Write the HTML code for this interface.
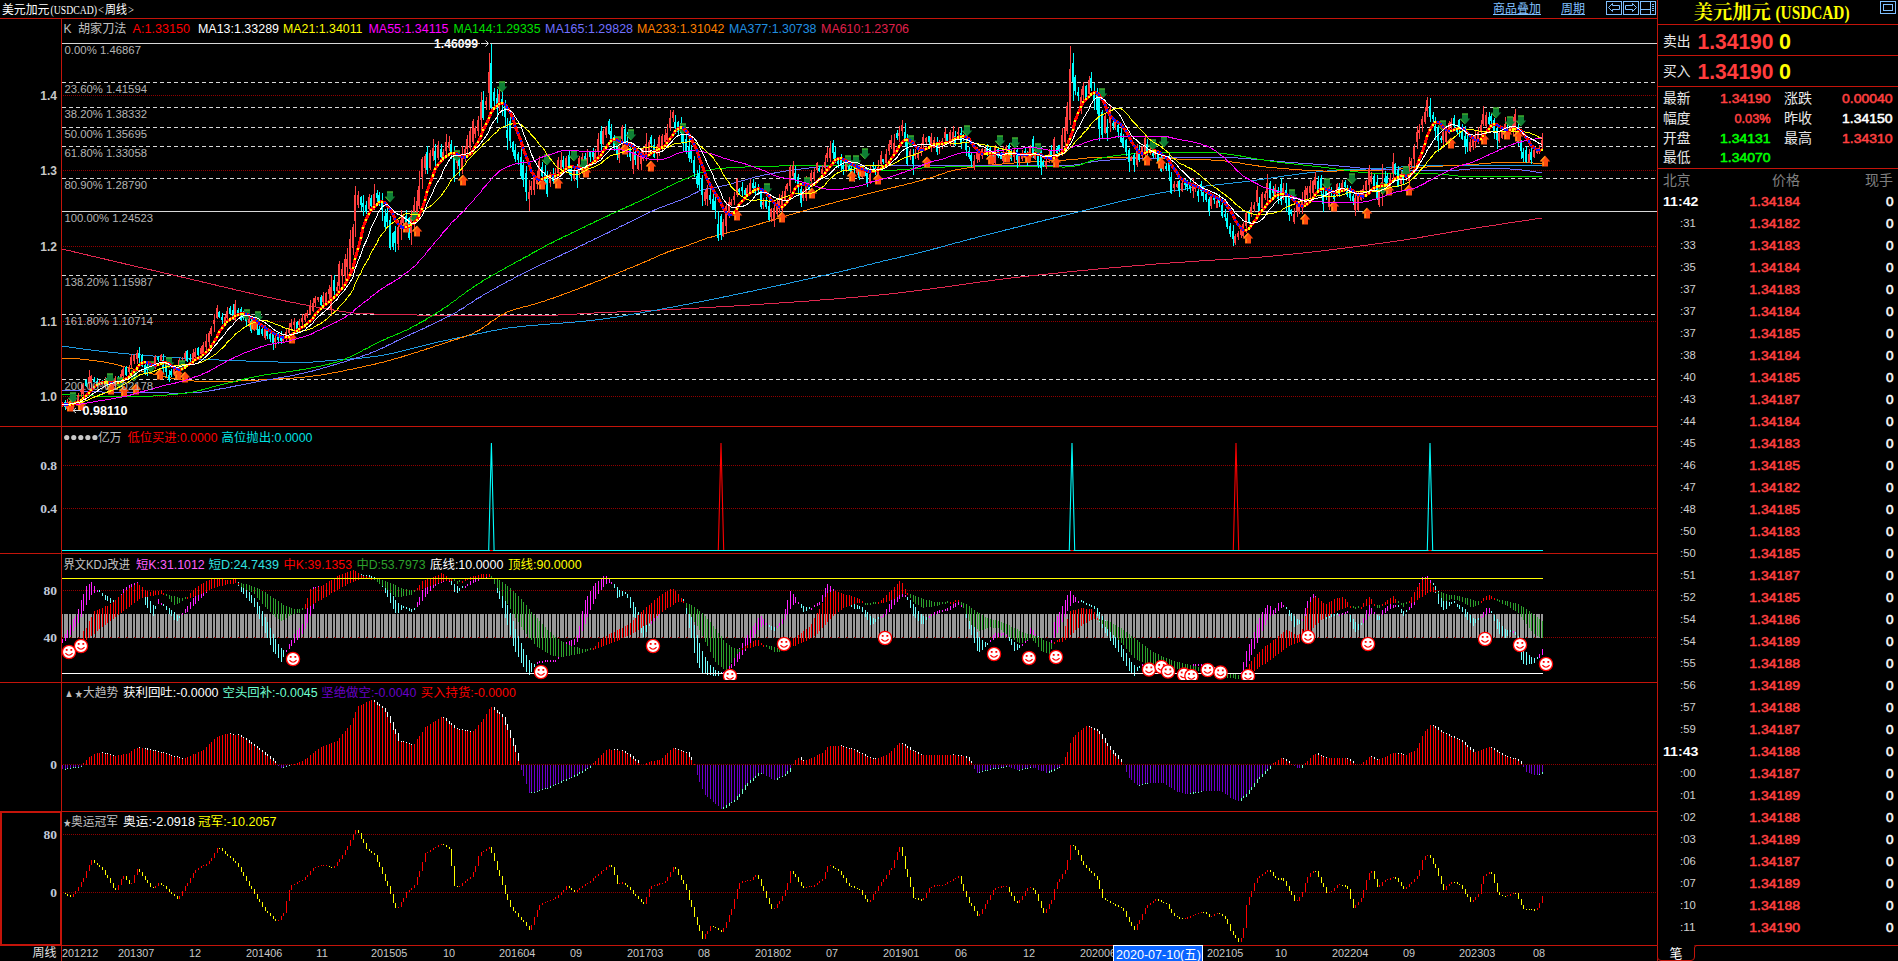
<!DOCTYPE html><html lang="zh-CN"><head><meta charset="utf-8"><title>美元加元(USDCAD) 周线</title>
<style>html,body{margin:0;padding:0;background:#000;overflow:hidden}svg{display:block}text{font-family:"Liberation Sans","Noto Sans CJK SC",sans-serif;font-size:12px;white-space:pre}.cj{font-family:"Liberation Sans","Noto Sans CJK SC",sans-serif;font-weight:400}.b{font-weight:bold}.m{font-weight:normal;stroke-width:0.55px;stroke-linejoin:round}.sf{font-family:"Liberation Serif","Noto Serif CJK SC",serif}</style></head><body>
<svg width="1898" height="961" viewBox="0 0 1898 961">
<rect width="1898" height="961" fill="#000"/>
<g shape-rendering="crispEdges">
<line x1="63" y1="95.5" x2="1657" y2="95.5" stroke="#900000" stroke-dasharray="1 1"/>
<line x1="63" y1="170.5" x2="1657" y2="170.5" stroke="#900000" stroke-dasharray="1 1"/>
<line x1="63" y1="246.5" x2="1657" y2="246.5" stroke="#900000" stroke-dasharray="1 1"/>
<line x1="63" y1="321.5" x2="1657" y2="321.5" stroke="#900000" stroke-dasharray="1 1"/>
<line x1="63" y1="396.5" x2="1657" y2="396.5" stroke="#900000" stroke-dasharray="1 1"/>
<line x1="63" y1="465.5" x2="1657" y2="465.5" stroke="#900000" stroke-dasharray="1 1"/>
<line x1="63" y1="508.5" x2="1657" y2="508.5" stroke="#900000" stroke-dasharray="1 1"/>
<line x1="63" y1="590.5" x2="1657" y2="590.5" stroke="#900000" stroke-dasharray="1 1"/>
<line x1="63" y1="637.5" x2="1657" y2="637.5" stroke="#900000" stroke-dasharray="1 1"/>
<line x1="63" y1="764.5" x2="1657" y2="764.5" stroke="#900000" stroke-dasharray="1 1"/>
<line x1="63" y1="834.5" x2="1657" y2="834.5" stroke="#900000" stroke-dasharray="1 1"/>
<line x1="63" y1="892.5" x2="1657" y2="892.5" stroke="#900000" stroke-dasharray="1 1"/>
<line x1="62" y1="43.5" x2="1657" y2="43.5" stroke="#d8d8d8" />
<line x1="62" y1="82.5" x2="1657" y2="82.5" stroke="#d8d8d8" stroke-dasharray="4 3"/>
<line x1="62" y1="107.5" x2="1657" y2="107.5" stroke="#d8d8d8" stroke-dasharray="4 3"/>
<line x1="62" y1="127.5" x2="1657" y2="127.5" stroke="#d8d8d8" stroke-dasharray="4 3"/>
<line x1="62" y1="146.5" x2="1657" y2="146.5" stroke="#d8d8d8" stroke-dasharray="4 3"/>
<line x1="62" y1="178.5" x2="1657" y2="178.5" stroke="#d8d8d8" stroke-dasharray="4 3"/>
<line x1="62" y1="211.5" x2="1657" y2="211.5" stroke="#d8d8d8" />
<line x1="62" y1="275.5" x2="1657" y2="275.5" stroke="#d8d8d8" stroke-dasharray="4 3"/>
<line x1="62" y1="314.5" x2="1657" y2="314.5" stroke="#d8d8d8" stroke-dasharray="4 3"/>
<line x1="62" y1="379.5" x2="1657" y2="379.5" stroke="#d8d8d8" stroke-dasharray="4 3"/>
</g>
<g stroke-linejoin="round" shape-rendering="crispEdges">
<polyline points="62,249.4 65,249.8 67,250.3 70,250.9 73,251.5 75,252.2 78,252.8 81,253.4 83,254.1 86,254.7 89,255.3 91,256 94,256.6 97,257.2 99,257.9 102,258.5 105,259.1 107,259.7 110,260.3 113,261 115,261.6 118,262.2 121,262.8 123,263.5 126,264.1 129,264.7 131,265.4 134,266 137,266.6 139,267.2 142,267.8 145,268.4 147,269.1 150,269.7 153,270.3 155,270.9 158,271.5 161,272.2 163,272.8 166,273.4 169,274 171,274.6 174,275.3 177,275.9 179,276.5 182,277.1 185,277.7 187,278.4 190,279 193,279.6 195,280.3 198,280.9 201,281.5 203,282.2 206,282.8 209,283.4 211,284.1 214,284.7 217,285.3 219,286 222,286.6 225,287.2 227,287.9 230,288.5 233,289.1 235,289.7 238,290.4 241,291 243,291.6 246,292.2 249,292.8 251,293.5 254,294 257,294.6 259,295.3 262,295.8 265,296.4 267,297.1 270,297.6 273,298.2 275,298.8 278,299.4 281,299.9 283,300.5 286,301.1 289,301.6 291,302.2 294,302.7 297,303.2 299,303.8 302,304.3 305,304.8 307,305.3 310,305.8 313,306.3 315,306.8 318,307.3 321,307.8 323,308.3 326,308.7 329,309.2 331,309.6 334,310.1 337,310.5 339,311 342,311.4 345,311.8 347,312.2 350,312.6 353,312.8 355,313.1 358,313.2 361,313.4 363,313.5 366,313.7 369,313.8 371,313.9 374,314 377,314.1 379,314.2 382,314.3 385,314.4 387,314.4 390,314.5 393,314.6 395,314.6 398,314.7 401,314.7 403,314.8 406,314.8 409,314.9 411,314.9 414,314.9 417,315 419,315 422,315 425,315.1 427,315.1 430,315.1 433,315.2 435,315.2 438,315.2 441,315.2 443,315.3 446,315.3 449,315.3 451,315.3 454,315.4 457,315.4 459,315.4 462,315.4 465,315.4 467,315.5 470,315.5 473,315.5 475,315.5 478,315.5 481,315.6 483,315.6 486,315.6 489,315.6 491,315.6 494,315.7 497,315.7 499,315.7 502,315.7 505,315.7 507,315.7 510,315.7 513,315.8 515,315.8 518,315.8 521,315.8 523,315.8 526,315.8 529,315.8 531,315.8 534,315.8 537,315.7 539,315.7 542,315.6 545,315.5 547,315.4 550,315.4 553,315.2 555,315.1 558,315 561,314.9 563,314.7 566,314.6 569,314.4 571,314.3 574,314.1 577,314 579,313.8 582,313.6 585,313.5 587,313.3 590,313.2 593,313.1 595,312.9 598,312.8 601,312.7 603,312.6 606,312.4 609,312.3 611,312.2 614,312.1 617,312 619,311.9 622,311.8 625,311.7 627,311.6 630,311.4 633,311.3 635,311.2 638,311.1 641,311 643,310.8 646,310.7 649,310.6 651,310.5 654,310.3 657,310.2 659,310.1 662,309.9 665,309.8 667,309.7 670,309.5 673,309.4 675,309.3 678,309.1 681,309 683,308.9 686,308.7 689,308.6 691,308.4 694,308.3 697,308.1 699,308 702,307.9 705,307.7 707,307.5 710,307.4 713,307.3 715,307.1 718,306.9 721,306.8 723,306.6 726,306.5 729,306.3 731,306.1 734,306 737,305.8 739,305.6 742,305.5 745,305.3 747,305.1 750,305 753,304.8 755,304.6 758,304.5 761,304.3 763,304.1 766,303.9 769,303.8 771,303.6 774,303.4 777,303.2 779,303 782,302.9 785,302.7 787,302.5 790,302.3 793,302.1 795,301.9 798,301.7 801,301.5 803,301.3 806,301.2 809,301 811,300.7 814,300.6 817,300.4 819,300.1 822,299.9 825,299.7 827,299.5 830,299.3 833,299.1 835,298.9 838,298.7 841,298.4 843,298.2 846,298 849,297.8 851,297.5 854,297.3 857,297.1 859,296.8 862,296.6 865,296.4 867,296.1 870,295.9 873,295.6 875,295.4 878,295.1 881,294.9 883,294.6 886,294.3 889,294 891,293.7 894,293.4 897,293.1 899,292.8 902,292.5 905,292.2 907,291.9 910,291.5 913,291.2 915,290.9 918,290.5 921,290.2 923,289.8 926,289.5 929,289.2 931,288.8 934,288.4 937,288.1 939,287.7 942,287.3 945,287 947,286.6 950,286.2 953,285.9 955,285.5 958,285.1 961,284.8 963,284.4 966,284 969,283.7 971,283.3 974,282.9 977,282.6 979,282.2 982,281.8 985,281.5 987,281.1 990,280.8 993,280.4 995,280 998,279.7 1001,279.4 1003,279 1006,278.7 1009,278.4 1011,278 1014,277.7 1017,277.4 1019,277.1 1022,276.8 1025,276.5 1027,276.2 1030,275.9 1033,275.6 1035,275.3 1038,275 1041,274.7 1043,274.4 1046,274.2 1049,273.9 1051,273.6 1054,273.3 1057,273.1 1059,272.8 1062,272.5 1065,272.3 1067,272 1070,271.7 1073,271.5 1075,271.2 1078,270.9 1081,270.7 1083,270.4 1086,270.2 1089,269.9 1091,269.6 1094,269.4 1097,269.2 1099,268.9 1102,268.7 1105,268.4 1107,268.2 1110,267.9 1113,267.7 1115,267.4 1118,267.2 1121,267 1123,266.7 1126,266.5 1129,266.3 1131,266.1 1134,265.8 1137,265.6 1139,265.4 1142,265.2 1145,265 1147,264.8 1150,264.5 1153,264.3 1155,264.1 1158,263.9 1161,263.7 1163,263.5 1166,263.3 1169,263.1 1171,262.9 1174,262.8 1177,262.6 1179,262.4 1182,262.2 1185,262 1187,261.8 1190,261.6 1193,261.5 1195,261.3 1198,261.1 1201,260.9 1203,260.8 1206,260.6 1209,260.4 1211,260.2 1214,260.1 1217,259.9 1219,259.7 1222,259.6 1225,259.4 1227,259.3 1230,259.1 1233,259 1235,258.8 1238,258.7 1241,258.5 1243,258.3 1246,258.2 1249,258 1251,257.8 1254,257.6 1257,257.4 1259,257.2 1262,257 1265,256.7 1267,256.5 1270,256.3 1273,256 1275,255.8 1278,255.5 1281,255.3 1283,255 1286,254.7 1289,254.5 1291,254.2 1294,253.9 1297,253.7 1299,253.4 1302,253.1 1305,252.8 1307,252.5 1310,252.2 1313,251.9 1315,251.6 1318,251.3 1321,251 1323,250.6 1326,250.3 1329,250 1331,249.7 1334,249.3 1337,249 1339,248.7 1342,248.3 1345,248 1347,247.7 1350,247.3 1353,247 1355,246.6 1358,246.3 1361,245.9 1363,245.6 1366,245.2 1369,244.9 1371,244.5 1374,244.2 1377,243.8 1379,243.4 1382,243.1 1385,242.7 1387,242.4 1390,242 1393,241.6 1395,241.2 1398,240.9 1401,240.5 1403,240.1 1406,239.7 1409,239.2 1411,238.8 1414,238.4 1417,238 1419,237.5 1422,237.1 1425,236.6 1427,236.2 1430,235.7 1433,235.3 1435,234.8 1438,234.3 1441,233.9 1443,233.4 1446,233 1449,232.5 1451,232.1 1454,231.6 1457,231.2 1459,230.7 1462,230.3 1465,229.9 1467,229.4 1470,229 1473,228.6 1475,228.2 1478,227.7 1481,227.3 1483,226.9 1486,226.5 1489,226.1 1491,225.7 1494,225.3 1497,224.9 1499,224.4 1502,224 1505,223.6 1507,223.2 1510,222.8 1513,222.4 1515,222 1518,221.6 1521,221.2 1523,220.8 1526,220.4 1529,220 1531,219.6 1534,219.2 1537,218.8 1539,218.5 1542,218.2" fill="none" stroke="#e02850" stroke-width="1" />
<polyline points="62,346.2 65,346.5 67,346.8 70,347.1 73,347.5 75,347.9 78,348.3 81,348.6 83,349 86,349.3 89,349.7 91,350 94,350.4 97,350.7 99,351 102,351.3 105,351.6 107,351.9 110,352.2 113,352.5 115,352.7 118,353 121,353.2 123,353.5 126,353.7 129,354 131,354.2 134,354.5 137,354.7 139,354.9 142,355.1 145,355.4 147,355.6 150,355.8 153,356 155,356.2 158,356.4 161,356.6 163,356.8 166,357 169,357.2 171,357.4 174,357.6 177,357.7 179,357.9 182,358.1 185,358.2 187,358.4 190,358.6 193,358.7 195,358.9 198,359 201,359.1 203,359.3 206,359.4 209,359.5 211,359.7 214,359.8 217,359.9 219,360 222,360.1 225,360.2 227,360.3 230,360.4 233,360.5 235,360.6 238,360.7 241,360.8 243,360.9 246,361 249,361.1 251,361.2 254,361.3 257,361.4 259,361.4 262,361.5 265,361.6 267,361.7 270,361.8 273,361.8 275,361.9 278,362 281,362.1 283,362.1 286,362.2 289,362.3 291,362.4 294,362.4 297,362.5 299,362.5 302,362.4 305,362.4 307,362.3 310,362.2 313,362 315,361.8 318,361.6 321,361.4 323,361.2 326,360.9 329,360.7 331,360.5 334,360.3 337,360 339,359.8 342,359.6 345,359.4 347,359.2 350,359 353,358.8 355,358.6 358,358.3 361,358.1 363,357.8 366,357.5 369,357.3 371,356.9 374,356.6 377,356.2 379,355.8 382,355.3 385,354.8 387,354.3 390,353.8 393,353.2 395,352.6 398,352 401,351.4 403,350.7 406,350.1 409,349.4 411,348.7 414,348.1 417,347.4 419,346.7 422,346 425,345.4 427,344.7 430,344 433,343.4 435,342.7 438,342.1 441,341.5 443,340.9 446,340.4 449,339.8 451,339.2 454,338.7 457,338.1 459,337.6 462,337 465,336.5 467,335.9 470,335.4 473,334.9 475,334.3 478,333.8 481,333.2 483,332.6 486,332.1 489,331.6 491,331 494,330.5 497,330 499,329.5 502,329 505,328.6 507,328.2 510,327.8 513,327.5 515,327.2 518,326.9 521,326.6 523,326.3 526,326 529,325.8 531,325.5 534,325.3 537,325.1 539,324.8 542,324.6 545,324.4 547,324.2 550,324 553,323.8 555,323.6 558,323.4 561,323.2 563,323 566,322.7 569,322.5 571,322.3 574,322.1 577,321.9 579,321.6 582,321.4 585,321.2 587,320.9 590,320.6 593,320.3 595,320 598,319.7 601,319.4 603,319 606,318.7 609,318.3 611,317.9 614,317.5 617,317.1 619,316.6 622,316.2 625,315.7 627,315.2 630,314.8 633,314.3 635,313.8 638,313.4 641,312.9 643,312.4 646,311.9 649,311.5 651,311 654,310.5 657,310 659,309.5 662,309 665,308.5 667,308 670,307.5 673,307 675,306.5 678,306 681,305.5 683,305 686,304.5 689,304 691,303.4 694,302.9 697,302.4 699,301.9 702,301.4 705,300.9 707,300.3 710,299.8 713,299.3 715,298.7 718,298.2 721,297.6 723,297.1 726,296.6 729,296 731,295.4 734,294.9 737,294.4 739,293.8 742,293.2 745,292.7 747,292.1 750,291.6 753,291 755,290.4 758,289.9 761,289.3 763,288.7 766,288.2 769,287.6 771,287 774,286.5 777,285.9 779,285.3 782,284.7 785,284.2 787,283.6 790,283 793,282.4 795,281.8 798,281.2 801,280.7 803,280 806,279.5 809,278.9 811,278.3 814,277.7 817,277.1 819,276.5 822,275.9 825,275.3 827,274.7 830,274.1 833,273.5 835,272.8 838,272.2 841,271.6 843,270.9 846,270.3 849,269.7 851,269 854,268.4 857,267.7 859,267 862,266.4 865,265.7 867,265 870,264.4 873,263.8 875,263.1 878,262.4 881,261.8 883,261.1 886,260.5 889,259.9 891,259.2 894,258.6 897,258 899,257.3 902,256.7 905,256.1 907,255.5 910,254.9 913,254.3 915,253.6 918,253 921,252.4 923,251.7 926,251 929,250.3 931,249.6 934,248.9 937,248.2 939,247.4 942,246.7 945,245.9 947,245.2 950,244.5 953,243.8 955,243 958,242.4 961,241.7 963,240.9 966,240.2 969,239.6 971,238.8 974,238.2 977,237.5 979,236.7 982,236.1 985,235.4 987,234.7 990,234 993,233.4 995,232.6 998,232 1001,231.3 1003,230.6 1006,229.9 1009,229.3 1011,228.6 1014,227.9 1017,227.3 1019,226.6 1022,225.9 1025,225.3 1027,224.6 1030,223.9 1033,223.3 1035,222.6 1038,221.9 1041,221.3 1043,220.6 1046,219.9 1049,219.3 1051,218.6 1054,217.9 1057,217.3 1059,216.6 1062,215.9 1065,215.3 1067,214.6 1070,214 1073,213.3 1075,212.6 1078,212 1081,211.3 1083,210.6 1086,210 1089,209.3 1091,208.6 1094,208 1097,207.3 1099,206.6 1102,206 1105,205.3 1107,204.6 1110,204 1113,203.4 1115,202.7 1118,202.1 1121,201.5 1123,200.8 1126,200.2 1129,199.6 1131,199 1134,198.4 1137,197.8 1139,197.2 1142,196.6 1145,196.1 1147,195.5 1150,194.9 1153,194.4 1155,193.9 1158,193.4 1161,192.9 1163,192.4 1166,192 1169,191.5 1171,191.1 1174,190.6 1177,190.2 1179,189.8 1182,189.4 1185,189 1187,188.6 1190,188.2 1193,187.8 1195,187.4 1198,187.1 1201,186.7 1203,186.4 1206,186 1209,185.7 1211,185.4 1214,185.1 1217,184.8 1219,184.5 1222,184.2 1225,183.9 1227,183.6 1230,183.3 1233,183 1235,182.7 1238,182.4 1241,182.1 1243,181.8 1246,181.5 1249,181.2 1251,180.8 1254,180.4 1257,180.1 1259,179.7 1262,179.3 1265,178.9 1267,178.5 1270,178.1 1273,177.7 1275,177.3 1278,177 1281,176.6 1283,176.2 1286,175.8 1289,175.5 1291,175.1 1294,174.7 1297,174.4 1299,174 1302,173.7 1305,173.3 1307,173 1310,172.7 1313,172.4 1315,172.1 1318,171.8 1321,171.6 1323,171.3 1326,171.1 1329,170.9 1331,170.7 1334,170.5 1337,170.4 1339,170.2 1342,170.1 1345,169.9 1347,169.8 1350,169.7 1353,169.6 1355,169.4 1358,169.3 1361,169.2 1363,169.1 1366,169 1369,168.9 1371,168.7 1374,168.6 1377,168.5 1379,168.4 1382,168.2 1385,168.1 1387,167.9 1390,167.8 1393,167.6 1395,167.4 1398,167.2 1401,167 1403,166.8 1406,166.6 1409,166.4 1411,166.2 1414,166.1 1417,166 1419,166 1422,165.9 1425,165.9 1427,165.8 1430,165.8 1433,165.8 1435,165.7 1438,165.7 1441,165.6 1443,165.6 1446,165.6 1449,165.5 1451,165.5 1454,165.5 1457,165.4 1459,165.4 1462,165.4 1465,165.4 1467,165.3 1470,165.3 1473,165.3 1475,165.3 1478,165.2 1481,165.2 1483,165.2 1486,165.2 1489,165.2 1491,165.2 1494,165.1 1497,165.1 1499,165.1 1502,165.1 1505,165.1 1507,165.1 1510,165.1 1513,165 1515,165 1518,165 1521,165 1523,165 1526,165 1529,165 1531,165 1534,165 1537,165 1539,165 1542,165" fill="none" stroke="#1e9ae0" stroke-width="1" />
<polyline points="62,358 65,358.1 67,358.2 70,358.3 73,358.5 75,358.7 78,358.9 81,359.1 83,359.4 86,359.7 89,360 91,360.3 94,360.7 97,361 99,361.4 102,361.8 105,362.2 107,362.7 110,363.2 113,363.8 115,364.4 118,365.1 121,365.8 123,366.5 126,367.2 129,367.9 131,368.6 134,369.2 137,369.9 139,370.6 142,371.2 145,371.9 147,372.6 150,373.3 153,373.9 155,374.6 158,375.3 161,375.9 163,376.5 166,377.1 169,377.6 171,378.1 174,378.6 177,378.9 179,379.3 182,379.6 185,379.9 187,380.2 190,380.5 193,380.8 195,381.1 198,381.4 201,381.7 203,381.8 206,381.9 209,382 211,381.9 214,381.9 217,381.8 219,381.8 222,381.7 225,381.6 227,381.5 230,381.4 233,381.3 235,381.1 238,381 241,380.9 243,380.8 246,380.6 249,380.5 251,380.4 254,380.3 257,380.2 259,380 262,379.9 265,379.8 267,379.6 270,379.5 273,379.4 275,379.2 278,379.1 281,378.9 283,378.7 286,378.6 289,378.4 291,378.2 294,378 297,377.8 299,377.5 302,377.3 305,377 307,376.7 310,376.4 313,376.1 315,375.7 318,375.4 321,375 323,374.5 326,374.1 329,373.7 331,373.2 334,372.7 337,372.2 339,371.7 342,371.2 345,370.7 347,370.1 350,369.5 353,369 355,368.4 358,367.8 361,367.3 363,366.7 366,366.1 369,365.5 371,364.9 374,364.3 377,363.7 379,363 382,362.4 385,361.7 387,361 390,360.3 393,359.5 395,358.7 398,358 401,357.2 403,356.4 406,355.6 409,354.8 411,353.9 414,353.1 417,352.3 419,351.4 422,350.5 425,349.7 427,348.8 430,347.9 433,347.1 435,346.1 438,345.3 441,344.4 443,343.5 446,342.6 449,341.8 451,340.8 454,340 457,339.2 459,338.3 462,337.4 465,336.6 467,335.6 470,334.7 473,333.6 475,332.2 478,330.8 481,329.2 483,327.4 486,325.6 489,323.7 491,321.7 494,319.9 497,318.1 499,316.3 502,314.8 505,313.4 507,312.1 510,311 513,310.1 515,309.2 518,308.5 521,307.8 523,307.1 526,306.4 529,305.8 531,305 534,304.3 537,303.5 539,302.6 542,301.7 545,300.9 547,299.9 550,299.1 553,298.2 555,297.2 558,296.3 561,295.3 563,294.3 566,293.4 569,292.4 571,291.4 574,290.4 577,289.4 579,288.3 582,287.3 585,286.3 587,285.2 590,284.2 593,283.2 595,282.1 598,281 601,280 603,278.9 606,277.8 609,276.8 611,275.6 614,274.6 617,273.5 619,272.4 622,271.3 625,270.3 627,269.1 630,268.1 633,267 635,265.9 638,264.8 641,263.7 643,262.6 646,261.4 649,260.3 651,259.1 654,257.9 657,256.7 659,255.5 662,254.4 665,253.3 667,252.2 670,251.2 673,250.2 675,249.3 678,248.5 681,247.7 683,246.9 686,246.1 689,245.2 691,244.1 694,243.1 697,242 699,240.9 702,239.9 705,239 707,238.1 710,237.4 713,236.6 715,235.9 718,235.2 721,234.5 723,233.8 726,233.2 729,232.5 731,231.8 734,231.2 737,230.5 739,229.8 742,229.1 745,228.3 747,227.5 750,226.8 753,226 755,225.2 758,224.4 761,223.6 763,222.8 766,222 769,221.2 771,220.4 774,219.6 777,218.8 779,217.9 782,217.2 785,216.4 787,215.5 790,214.8 793,214 795,213.2 798,212.4 801,211.7 803,210.9 806,210.2 809,209.4 811,208.7 814,208 817,207.3 819,206.5 822,205.8 825,205.1 827,204.3 830,203.7 833,203 835,202.2 838,201.5 841,200.9 843,200.1 846,199.5 849,198.8 851,198 854,197.4 857,196.7 859,196 862,195.3 865,194.6 867,193.9 870,193.2 873,192.6 875,191.9 878,191.2 881,190.6 883,189.9 886,189.3 889,188.6 891,187.9 894,187.3 897,186.7 899,186 902,185.4 905,184.7 907,184 910,183.4 913,182.7 915,182 918,181.3 921,180.6 923,179.8 926,179.1 929,178.4 931,177.5 934,176.7 937,175.8 939,174.8 942,173.9 945,173 947,172.1 950,171.3 953,170.6 955,170 958,169.5 961,169 963,168.6 966,168.2 969,167.8 971,167.4 974,167 977,166.7 979,166.3 982,166 985,165.7 987,165.4 990,165.2 993,164.9 995,164.6 998,164.4 1001,164.1 1003,163.9 1006,163.7 1009,163.5 1011,163.2 1014,163 1017,162.8 1019,162.6 1022,162.5 1025,162.3 1027,162.1 1030,162 1033,161.8 1035,161.7 1038,161.5 1041,161.4 1043,161.3 1046,161.1 1049,161 1051,160.8 1054,160.7 1057,160.5 1059,160.4 1062,160.2 1065,160.1 1067,159.9 1070,159.7 1073,159.5 1075,159.3 1078,159 1081,158.8 1083,158.4 1086,158.1 1089,157.8 1091,157.5 1094,157.2 1097,157.1 1099,157 1102,157 1105,157.1 1107,157.1 1110,157.1 1113,157.2 1115,157.3 1118,157.3 1121,157.4 1123,157.5 1126,157.6 1129,157.6 1131,157.7 1134,157.8 1137,157.9 1139,158 1142,158.1 1145,158.2 1147,158.3 1150,158.4 1153,158.4 1155,158.5 1158,158.6 1161,158.6 1163,158.7 1166,158.8 1169,158.8 1171,158.9 1174,158.9 1177,159 1179,159 1182,159.1 1185,159.2 1187,159.2 1190,159.3 1193,159.4 1195,159.4 1198,159.5 1201,159.6 1203,159.7 1206,159.8 1209,159.9 1211,160 1214,160.1 1217,160.3 1219,160.5 1222,160.8 1225,161 1227,161.4 1230,161.7 1233,162.1 1235,162.5 1238,162.8 1241,163.2 1243,163.7 1246,164.1 1249,164.5 1251,164.9 1254,165.3 1257,165.7 1259,166.1 1262,166.5 1265,166.8 1267,167.1 1270,167.4 1273,167.7 1275,167.9 1278,168.1 1281,168.3 1283,168.6 1286,168.8 1289,169 1291,169.2 1294,169.4 1297,169.6 1299,169.8 1302,170 1305,170.2 1307,170.4 1310,170.5 1313,170.6 1315,170.7 1318,170.8 1321,170.9 1323,171 1326,171 1329,171 1331,171 1334,171 1337,171 1339,170.9 1342,170.9 1345,170.9 1347,170.9 1350,170.8 1353,170.8 1355,170.8 1358,170.7 1361,170.7 1363,170.6 1366,170.6 1369,170.5 1371,170.5 1374,170.4 1377,170.3 1379,170.2 1382,170.1 1385,169.9 1387,169.8 1390,169.6 1393,169.5 1395,169.3 1398,169.1 1401,168.9 1403,168.7 1406,168.5 1409,168.3 1411,168.1 1414,167.9 1417,167.8 1419,167.5 1422,167.4 1425,167.2 1427,167 1430,166.8 1433,166.7 1435,166.5 1438,166.4 1441,166.2 1443,166 1446,165.9 1449,165.7 1451,165.6 1454,165.4 1457,165.3 1459,165.1 1462,165 1465,164.8 1467,164.7 1470,164.5 1473,164.4 1475,164.2 1478,164.1 1481,163.9 1483,163.7 1486,163.5 1489,163.3 1491,163 1494,162.8 1497,162.6 1499,162.4 1502,162.3 1505,162.2 1507,162.1 1510,162 1513,162 1515,162.1 1518,162.1 1521,162.2 1523,162.4 1526,162.5 1529,162.7 1531,162.9 1534,163.1 1537,163.4 1539,163.6 1542,163.8" fill="none" stroke="#ff8000" stroke-width="1" />
<polyline points="62,390.1 65,390.2 67,390.3 70,390.5 73,390.6 75,390.8 78,390.9 81,391.1 83,391.2 86,391.4 89,391.5 91,391.6 94,391.7 97,391.8 99,391.9 102,392 105,392 107,392.1 110,392.1 113,392.2 115,392.2 118,392.3 121,392.3 123,392.4 126,392.4 129,392.5 131,392.5 134,392.6 137,392.6 139,392.6 142,392.7 145,392.7 147,392.8 150,392.8 153,392.8 155,392.8 158,392.9 161,392.9 163,392.9 166,392.9 169,393 171,393 174,393 177,393 179,393 182,393 185,393 187,392.9 190,392.8 193,392.7 195,392.5 198,392.3 201,392.1 203,391.8 206,391.5 209,391.1 211,390.6 214,390.1 217,389.6 219,389.1 222,388.6 225,388.2 227,387.6 230,387.1 233,386.6 235,386.1 238,385.6 241,385.1 243,384.5 246,384 249,383.5 251,382.9 254,382.4 257,381.9 259,381.4 262,380.9 265,380.4 267,379.9 270,379.4 273,379 275,378.5 278,378.1 281,377.6 283,377.1 286,376.7 289,376.2 291,375.7 294,375.2 297,374.7 299,374.1 302,373.5 305,372.9 307,372.3 310,371.6 313,370.9 315,370.2 318,369.5 321,368.8 323,368 326,367.2 329,366.5 331,365.6 334,364.9 337,364.1 339,363.3 342,362.5 345,361.7 347,360.9 350,360.1 353,359.3 355,358.4 358,357.6 361,356.7 363,355.7 366,354.8 369,353.9 371,352.8 374,351.7 377,350.6 379,349.4 382,348.2 385,347 387,345.6 390,344.4 393,343.1 395,341.7 398,340.4 401,339.2 403,337.8 406,336.6 409,335.3 411,334 414,332.8 417,331.6 419,330.4 422,329.2 425,328 427,326.7 430,325.4 433,324.2 435,322.9 438,321.6 441,320.3 443,318.9 446,317.6 449,316.3 451,314.8 454,313.4 457,311.9 459,310.3 462,308.8 465,307.1 467,305.2 470,303.5 473,301.7 475,299.9 478,298.2 481,296.7 483,295 486,293.4 489,291.9 491,290.3 494,288.9 497,287.4 499,285.9 502,284.5 505,283.1 507,281.6 510,280.3 513,278.9 515,277.5 518,276.1 521,274.8 523,273.4 526,272 529,270.7 531,269.3 534,268 537,266.7 539,265.4 542,264.1 545,262.9 547,261.5 550,260.3 553,259.1 555,257.8 558,256.6 561,255.4 563,254.1 566,252.8 569,251.6 571,250.3 574,249 577,247.8 579,246.4 582,245.2 585,243.9 587,242.6 590,241.3 593,240.1 595,238.7 598,237.5 601,236.2 603,234.9 606,233.6 609,232.4 611,231 614,229.7 617,228.5 619,227.1 622,225.8 625,224.6 627,223.2 630,221.9 633,220.6 635,219.3 638,218 641,216.7 643,215.3 646,214 649,212.7 651,211.4 654,210.2 657,209.1 659,207.9 662,206.9 665,206 667,204.9 670,204 673,203 675,202 678,201 681,200 683,198.9 686,197.7 689,196.5 691,195.1 694,193.7 697,192.4 699,191.1 702,190.1 705,189.4 707,188.7 710,188.2 713,187.7 715,187.3 718,186.8 721,186.3 723,185.8 726,185.2 729,184.6 731,183.9 734,183.1 737,182.4 739,181.6 742,180.8 745,180.1 747,179.3 750,178.5 753,177.8 755,177.1 758,176.5 761,175.9 763,175.2 766,174.7 769,174.2 771,173.6 774,173.1 777,172.6 779,172.1 782,171.7 785,171.2 787,170.8 790,170.4 793,170.1 795,169.7 798,169.4 801,169 803,168.7 806,168.4 809,168.1 811,167.7 814,167.4 817,167.2 819,166.8 822,166.6 825,166.3 827,166.1 830,165.9 833,165.7 835,165.5 838,165.3 841,165.2 843,165.1 846,165.1 849,165 851,165 854,165 857,165 859,165 862,165 865,165 867,165 870,165 873,165 875,165 878,165 881,165 883,165 886,165 889,165 891,165 894,165 897,165 899,165 902,165 905,165 907,165 910,165 913,165 915,165 918,165 921,165 923,165 926,165 929,165 931,165 934,165 937,165 939,165 942,165 945,165 947,165 950,165 953,165 955,165 958,165 961,165 963,165 966,165 969,165.1 971,165.1 974,165.1 977,165.1 979,165.1 982,165.1 985,165.1 987,165.1 990,165.1 993,165.1 995,165.1 998,165.1 1001,165.2 1003,165.2 1006,165.2 1009,165.2 1011,165.2 1014,165.2 1017,165.2 1019,165.2 1022,165.2 1025,165.2 1027,165.2 1030,165.2 1033,165.2 1035,165.3 1038,165.3 1041,165.3 1043,165.3 1046,165.3 1049,165.3 1051,165.3 1054,165.3 1057,165.3 1059,165.3 1062,165.3 1065,165.3 1067,165.3 1070,165.2 1073,165.1 1075,164.8 1078,164.4 1081,164 1083,163.4 1086,162.9 1089,162.4 1091,161.9 1094,161.5 1097,161.1 1099,160.8 1102,160.6 1105,160.4 1107,160.2 1110,160 1113,159.8 1115,159.6 1118,159.5 1121,159.3 1123,159.1 1126,159 1129,158.9 1131,158.7 1134,158.6 1137,158.5 1139,158.4 1142,158.3 1145,158.2 1147,158.2 1150,158.1 1153,158 1155,158 1158,158 1161,157.9 1163,157.9 1166,157.9 1169,157.8 1171,157.8 1174,157.8 1177,157.7 1179,157.7 1182,157.7 1185,157.7 1187,157.6 1190,157.6 1193,157.6 1195,157.6 1198,157.6 1201,157.6 1203,157.5 1206,157.5 1209,157.5 1211,157.5 1214,157.5 1217,157.5 1219,157.5 1222,157.5 1225,157.6 1227,157.6 1230,157.7 1233,157.8 1235,157.9 1238,158 1241,158.2 1243,158.4 1246,158.6 1249,158.8 1251,159 1254,159.2 1257,159.4 1259,159.7 1262,159.9 1265,160.1 1267,160.4 1270,160.7 1273,160.9 1275,161.2 1278,161.4 1281,161.6 1283,161.9 1286,162.1 1289,162.3 1291,162.5 1294,162.7 1297,162.9 1299,163.1 1302,163.2 1305,163.4 1307,163.6 1310,163.8 1313,164 1315,164.2 1318,164.4 1321,164.5 1323,164.7 1326,164.9 1329,165.1 1331,165.3 1334,165.5 1337,165.7 1339,166 1342,166.2 1345,166.4 1347,166.7 1350,167 1353,167.2 1355,167.5 1358,167.8 1361,168.1 1363,168.3 1366,168.6 1369,168.8 1371,169 1374,169.2 1377,169.3 1379,169.5 1382,169.5 1385,169.6 1387,169.7 1390,169.8 1393,169.8 1395,169.9 1398,169.9 1401,170 1403,170 1406,170.1 1409,170.1 1411,170.2 1414,170.2 1417,170.3 1419,170.3 1422,170.3 1425,170.4 1427,170.4 1430,170.4 1433,170.4 1435,170.5 1438,170.5 1441,170.5 1443,170.5 1446,170.5 1449,170.5 1451,170.4 1454,170.3 1457,170.1 1459,170 1462,169.7 1465,169.5 1467,169.3 1470,169 1473,168.8 1475,168.6 1478,168.4 1481,168.2 1483,168.1 1486,168.1 1489,168.1 1491,168.1 1494,168.1 1497,168.2 1499,168.4 1502,168.5 1505,168.6 1507,168.8 1510,169 1513,169.2 1515,169.4 1518,169.6 1521,169.9 1523,170.2 1526,170.5 1529,170.9 1531,171.3 1534,171.7 1537,172.1 1539,172.5 1542,172.7" fill="none" stroke="#7070ff" stroke-width="1" />
<polyline points="62,394.1 65,394.3 67,394.5 70,394.7 73,394.9 75,395.1 78,395.2 81,395.4 83,395.5 86,395.7 89,395.8 91,395.9 94,396 97,396.1 99,396.2 102,396.2 105,396.3 107,396.4 110,396.4 113,396.5 115,396.5 118,396.5 121,396.6 123,396.6 126,396.6 129,396.6 131,396.6 134,396.6 137,396.6 139,396.5 142,396.5 145,396.4 147,396.3 150,396.2 153,396 155,395.9 158,395.7 161,395.5 163,395.3 166,395.1 169,394.9 171,394.7 174,394.4 177,394.2 179,393.9 182,393.7 185,393.4 187,393 190,392.6 193,392.1 195,391.5 198,390.8 201,390.2 203,389.4 206,388.7 209,388 211,387.2 214,386.5 217,385.9 219,385.2 222,384.5 225,383.9 227,383.2 230,382.6 233,382 235,381.3 238,380.6 241,380 243,379.3 246,378.7 249,378.1 251,377.5 254,377 257,376.4 259,375.9 262,375.4 265,374.9 267,374.5 270,374.1 273,373.7 275,373.3 278,373 281,372.7 283,372.3 286,372 289,371.7 291,371.3 294,370.9 297,370.5 299,370.1 302,369.6 305,369.2 307,368.7 310,368.2 313,367.7 315,367.2 318,366.7 321,366.1 323,365.5 326,364.9 329,364.2 331,363.5 334,362.8 337,362 339,361.2 342,360.3 345,359.3 347,358.1 350,356.9 353,355.7 355,354.4 358,353 361,351.7 363,350.2 366,348.8 369,347.4 371,346 374,344.6 377,343.2 379,341.8 382,340.6 385,339.4 387,338.2 390,337.1 393,336 395,334.9 398,333.8 401,332.7 403,331.5 406,330.3 409,329 411,327.6 414,326.2 417,324.8 419,323.3 422,321.8 425,320.3 427,318.7 430,317.1 433,315.5 435,313.8 438,312.2 441,310.5 443,308.7 446,306.9 449,305.1 451,303.1 454,301.2 457,299.3 459,297.2 462,295.2 465,293.3 467,291.3 470,289.4 473,287.6 475,285.8 478,284.1 481,282.4 483,280.7 486,279.1 489,277.5 491,275.9 494,274.4 497,272.9 499,271.3 502,269.9 505,268.5 507,266.9 510,265.5 513,264.1 515,262.6 518,261.2 521,259.8 523,258.3 526,256.8 529,255.4 531,253.8 534,252.3 537,250.8 539,249.3 542,247.9 545,246.5 547,245 550,243.7 553,242.4 555,241 558,239.7 561,238.4 563,237.1 566,235.8 569,234.5 571,233.2 574,231.9 577,230.6 579,229.3 582,228 585,226.8 587,225.4 590,224.2 593,222.9 595,221.6 598,220.4 601,219.1 603,217.8 606,216.6 609,215.4 611,214.1 614,212.9 617,211.7 619,210.4 622,209.2 625,208 627,206.7 630,205.6 633,204.4 635,203.1 638,201.9 641,200.7 643,199.4 646,198.1 649,196.8 651,195.4 654,194.1 657,192.7 659,191.3 662,190 665,188.6 667,187.2 670,185.9 673,184.6 675,183.3 678,182.1 681,180.9 683,179.7 686,178.6 689,177.6 691,176.5 694,175.4 697,174.4 699,173.4 702,172.4 705,171.5 707,170.7 710,170 713,169.4 715,169 718,168.6 721,168.4 723,168.2 726,168 729,167.8 731,167.7 734,167.5 737,167.4 739,167.2 742,167.1 745,167 747,166.9 750,166.8 753,166.7 755,166.6 758,166.5 761,166.5 763,166.4 766,166.3 769,166.3 771,166.2 774,166.1 777,166 779,166 782,165.9 785,165.8 787,165.8 790,165.7 793,165.6 795,165.6 798,165.5 801,165.4 803,165.4 806,165.3 809,165.3 811,165.2 814,165.2 817,165.1 819,165.1 822,165.1 825,165 827,165 830,165 833,165.1 835,165.2 838,165.3 841,165.5 843,165.8 846,166 849,166.4 851,166.8 854,167.1 857,167.5 859,168 862,168.4 865,168.7 867,169.1 870,169.5 873,169.7 875,170 878,170.2 881,170.3 883,170.4 886,170.4 889,170.4 891,170.3 894,170.2 897,170 899,169.8 902,169.6 905,169.4 907,169.2 910,169 913,168.7 915,168.5 918,168.3 921,168.1 923,167.9 926,167.7 929,167.6 931,167.5 934,167.4 937,167.3 939,167.2 942,167.1 945,167 947,166.9 950,166.8 953,166.7 955,166.6 958,166.5 961,166.5 963,166.4 966,166.3 969,166.3 971,166.2 974,166.2 977,166.1 979,166.1 982,166.1 985,166 987,166 990,166 993,166 995,166 998,166 1001,166 1003,166.1 1006,166.1 1009,166.1 1011,166.2 1014,166.2 1017,166.3 1019,166.3 1022,166.3 1025,166.4 1027,166.4 1030,166.5 1033,166.5 1035,166.6 1038,166.6 1041,166.7 1043,166.7 1046,166.8 1049,166.8 1051,166.9 1054,166.9 1057,166.9 1059,166.9 1062,167 1065,167 1067,166.9 1070,166.8 1073,166.6 1075,166.1 1078,165.5 1081,164.7 1083,163.7 1086,162.7 1089,161.7 1091,160.8 1094,159.9 1097,159.2 1099,158.5 1102,158 1105,157.5 1107,156.9 1110,156.5 1113,156.1 1115,155.6 1118,155.3 1121,155 1123,154.7 1126,154.4 1129,154.2 1131,154 1134,153.8 1137,153.6 1139,153.4 1142,153.3 1145,153.1 1147,153 1150,152.8 1153,152.7 1155,152.6 1158,152.6 1161,152.5 1163,152.4 1166,152.4 1169,152.3 1171,152.3 1174,152.3 1177,152.2 1179,152.2 1182,152.1 1185,152.1 1187,152.1 1190,152.1 1193,152 1195,152 1198,152 1201,152 1203,152 1206,152.1 1209,152.2 1211,152.3 1214,152.5 1217,152.7 1219,153 1222,153.3 1225,153.6 1227,154 1230,154.3 1233,154.7 1235,155.2 1238,155.6 1241,156.1 1243,156.6 1246,157 1249,157.5 1251,158 1254,158.4 1257,158.9 1259,159.4 1262,159.8 1265,160.2 1267,160.7 1270,161 1273,161.4 1275,161.8 1278,162.1 1281,162.4 1283,162.7 1286,163.1 1289,163.4 1291,163.7 1294,164 1297,164.3 1299,164.6 1302,164.9 1305,165.2 1307,165.5 1310,165.8 1313,166.1 1315,166.4 1318,166.7 1321,167 1323,167.4 1326,167.7 1329,168 1331,168.4 1334,168.7 1337,169.1 1339,169.5 1342,169.8 1345,170.2 1347,170.6 1350,171 1353,171.3 1355,171.7 1358,172 1361,172.2 1363,172.5 1366,172.7 1369,172.9 1371,173.1 1374,173.2 1377,173.3 1379,173.4 1382,173.6 1385,173.7 1387,173.8 1390,173.8 1393,173.9 1395,173.9 1398,174 1401,174 1403,174 1406,174 1409,173.9 1411,173.9 1414,173.9 1417,173.8 1419,173.8 1422,173.8 1425,173.7 1427,173.7 1430,173.7 1433,173.8 1435,173.8 1438,174 1441,174.2 1443,174.4 1446,174.7 1449,175 1451,175.3 1454,175.6 1457,175.9 1459,176.2 1462,176.4 1465,176.6 1467,176.7 1470,176.8 1473,176.8 1475,176.8 1478,176.8 1481,176.8 1483,176.8 1486,176.8 1489,176.8 1491,176.8 1494,176.8 1497,176.8 1499,176.7 1502,176.7 1505,176.7 1507,176.7 1510,176.7 1513,176.6 1515,176.6 1518,176.6 1521,176.5 1523,176.5 1526,176.4 1529,176.4 1531,176.3 1534,176.2 1537,176.2 1539,176.1 1542,176.1" fill="none" stroke="#00e000" stroke-width="1" />
</g>
<g shape-rendering="crispEdges" fill="none">
<path d="M62.5 402V407M67.5 399V410M70.5 397V410M73.5 399V409M75.5 394V403M78.5 393V403M81.5 384V397M83.5 383V396M89.5 370V389M91.5 375V387M99.5 380V385M105.5 377V388M110.5 379V388M113.5 379V389M115.5 376V387M121.5 370V384M123.5 366V380M129.5 365V374M131.5 354V368M134.5 354V364M137.5 350V364M150.5 364V373M155.5 355V369M161.5 354V361M174.5 367V376M177.5 368V374M179.5 358V373M182.5 357V367M185.5 351V361M193.5 349V364M195.5 348V359M201.5 346V356M203.5 342V354M206.5 334V354M209.5 331V347M211.5 326V336M214.5 314V332M217.5 305V319M225.5 315V324M227.5 307V319M235.5 300V322M249.5 313V327M254.5 324V331M265.5 325V340M275.5 333V348M283.5 335V343M286.5 329V342M289.5 323V337M291.5 319V331M294.5 318V330M299.5 319V328M302.5 314V326M305.5 313V322M307.5 310V318M310.5 300V315M313.5 298V312M315.5 296V307M318.5 297V302M323.5 292V305M326.5 292V304M329.5 285V300M331.5 275V316M337.5 282V296M339.5 261V293M342.5 263V285M345.5 254V281M347.5 248V277M350.5 230V274M353.5 224V255M355.5 186V237M358.5 191V208M369.5 194V214M374.5 184V210M398.5 220V250M401.5 210V240M403.5 215V227M411.5 210V245M414.5 197V235M417.5 190V218M419.5 171V209M422.5 157V189M425.5 154V174M430.5 150V170M433.5 139V161M438.5 141V160M443.5 149V161M446.5 134V157M449.5 136V151M457.5 152V169M462.5 146V174M465.5 146V162M467.5 135V156M470.5 128V150M473.5 119V144M475.5 126V138M478.5 116V136M481.5 92V131M486.5 97V110M489.5 53V110M499.5 87V111M529.5 180V211M531.5 181V195M534.5 174V195M537.5 171V189M539.5 156V188M550.5 172V187M555.5 168V185M558.5 157V176M561.5 152V171M566.5 156V169M574.5 166V181M579.5 156V178M582.5 153V174M587.5 149V173M595.5 149V163M598.5 133V156M603.5 129V145M606.5 126V138M619.5 141V163M622.5 125V149M633.5 149V174M638.5 153V170M641.5 151V170M643.5 147V161M646.5 133V161M649.5 140V155M657.5 144V162M659.5 135V156M662.5 134V151M665.5 129V145M667.5 124V145M670.5 110V131M673.5 110V122M705.5 190V205M707.5 185V206M723.5 219V237M726.5 202V233M729.5 197V218M731.5 199V206M734.5 192V205M737.5 178V197M747.5 185V195M750.5 179V193M763.5 198V209M771.5 208V222M774.5 205V227M777.5 198V217M779.5 194V213M782.5 191V212M785.5 186V201M787.5 183V191M790.5 165V193M793.5 161V178M803.5 189V201M806.5 176V201M811.5 170V185M814.5 168V181M817.5 162V173M822.5 165V176M825.5 155V173M827.5 147V162M830.5 141V162M846.5 160V172M857.5 162V175M862.5 166V178M870.5 166V184M878.5 160V177M881.5 151V167M886.5 149V164M889.5 140V155M891.5 135V149M894.5 134V156M899.5 126V142M902.5 120V136M910.5 149V160M915.5 149V159M918.5 150V160M921.5 143V156M923.5 134V151M926.5 137V144M931.5 133V152M934.5 137V148M939.5 140V154M942.5 138V149M945.5 128V144M950.5 130V146M953.5 126V146M958.5 127V139M974.5 155V170M977.5 147V163M979.5 149V162M982.5 148V159M985.5 145V155M995.5 145V165M1003.5 146V164M1006.5 145V153M1014.5 149V162M1019.5 155V166M1022.5 150V161M1030.5 145V156M1035.5 153V160M1046.5 159V169M1049.5 149V163M1054.5 137V161M1062.5 128V156M1065.5 117V148M1067.5 102V134M1070.5 46V125M1081.5 89V114M1083.5 82V104M1089.5 76V98M1105.5 113V134M1110.5 106V132M1115.5 121V130M1131.5 156V161M1137.5 144V167M1142.5 146V158M1145.5 134V161M1150.5 148V155M1155.5 149V158M1163.5 162V171M1174.5 181V192M1177.5 181V188M1182.5 179V192M1193.5 178V198M1195.5 185V192M1211.5 193V209M1217.5 197V208M1235.5 234V245M1238.5 231V240M1241.5 228V238M1243.5 222V237M1246.5 211V233M1251.5 202V217M1254.5 202V212M1257.5 186V206M1262.5 192V210M1265.5 191V200M1267.5 174V202M1275.5 184V196M1283.5 183V200M1294.5 208V224M1297.5 201V217M1299.5 201V214M1302.5 192V214M1305.5 186V207M1307.5 186V200M1310.5 180V202M1313.5 180V195M1315.5 172V189M1329.5 183V210M1337.5 183V197M1342.5 180V189M1355.5 194V216M1358.5 191V211M1361.5 190V201M1363.5 185V199M1366.5 180V194M1369.5 165V192M1371.5 172V184M1379.5 187V207M1382.5 164V206M1390.5 173V186M1393.5 153V178M1401.5 171V191M1406.5 170V181M1409.5 157V185M1411.5 158V169M1414.5 144V166M1417.5 126V149M1419.5 124V139M1422.5 116V132M1425.5 107V124M1427.5 97V117M1443.5 128V148M1446.5 126V143M1449.5 121V134M1451.5 118V129M1470.5 139V152M1473.5 136V150M1475.5 131V148M1478.5 127V144M1481.5 120V138M1483.5 106V126M1486.5 112V127M1499.5 132V143M1502.5 126V139M1505.5 117V138M1510.5 127V134M1513.5 117V136M1515.5 109V136M1529.5 149V163M1534.5 149V158M1537.5 148V154M1539.5 145V154M1542.5 133V151" stroke="#ff4040" stroke-width="1"/>
<path d="M62 403V406M67 402V409M70 402V407M73 401V406M75 395V403M78 395V401M81 390V392M83 385V394M89 377V384M91 376V383M99 382V384M105 381V385M110 382V385M113 381V386M115 378V386M121 374V383M123 369V376M129 368V372M131 357V365M134 355V361M137 353V359M150 367V371M155 357V366M161 355V361M174 369V373M177 370V372M179 360V371M182 361V363M185 353V358M193 353V362M195 352V357M201 348V354M203 345V353M206 341V347M209 333V342M211 328V334M214 320V324M217 308V318M225 317V323M227 311V318M235 304V320M249 319V323M254 326V330M265 328V338M275 338V342M283 337V341M286 332V337M289 329V333M291 323V327M294 322V325M299 321V325M302 318V322M305 314V320M307 313V316M310 306V314M313 303V311M315 298V303M318 297V300M323 296V302M326 293V303M329 289V294M331 287V310M337 287V291M339 264V286M342 269V276M345 259V276M347 259V267M350 239V269M353 227V248M355 195V221M358 195V205M369 197V209M374 194V205M398 227V244M401 220V229M403 216V223M411 216V233M414 205V220M417 201V214M419 186V206M422 159V177M425 156V168M430 153V168M433 148V156M438 145V158M443 152V159M446 142V151M449 142V148M457 159V163M462 155V168M465 149V159M467 139V149M470 131V148M473 121V142M475 128V134M478 120V131M481 102V120M486 101V105M489 72V93M499 94V107M529 192V199M531 186V190M534 176V190M537 178V184M539 161V178M550 176V183M555 173V183M558 160V173M561 160V169M566 158V168M574 170V179M579 158V173M582 157V171M587 158V167M595 153V160M598 139V152M603 131V144M606 127V135M619 144V158M622 127V139M633 153V169M638 156V169M641 154V164M643 149V159M646 144V157M649 142V153M657 146V154M659 137V152M662 136V149M665 135V142M667 133V140M670 118V128M673 112V118M705 192V201M707 189V199M723 222V236M726 206V226M729 202V212M731 202V205M734 196V200M737 179V195M747 188V194M750 183V192M763 202V205M771 209V217M774 208V221M777 203V214M779 201V209M782 195V210M785 191V200M787 184V189M790 167V186M793 166V176M803 191V198M806 182V198M811 173V181M814 172V179M817 163V170M822 169V174M825 162V168M827 153V158M830 148V158M846 163V171M857 167V173M862 171V177M870 174V183M878 167V175M881 155V164M886 154V163M889 144V151M891 140V145M894 143V154M899 133V136M902 125V131M910 151V156M915 153V156M918 154V158M921 147V153M923 137V145M926 138V142M931 137V147M934 140V148M939 144V148M942 141V145M945 132V138M950 132V144M953 132V140M958 132V134M974 161V168M977 153V159M979 153V160M982 149V156M985 149V152M995 147V163M1003 152V161M1006 147V150M1014 150V157M1019 155V162M1022 153V159M1030 148V153M1035 155V159M1046 161V167M1049 154V158M1054 139V159M1062 135V154M1065 128V142M1067 106V131M1070 69V120M1081 97V108M1083 86V95M1089 80V94M1105 116V133M1110 109V123M1115 122V127M1131 157V161M1137 148V165M1142 147V156M1145 138V155M1150 150V152M1155 150V155M1163 164V169M1174 184V188M1177 184V187M1182 183V191M1193 185V191M1195 186V189M1211 196V206M1217 201V208M1235 236V243M1238 233V237M1241 230V235M1243 224V236M1246 213V226M1251 207V214M1254 205V209M1257 190V202M1262 194V208M1265 194V198M1267 183V193M1275 188V195M1283 188V197M1294 214V222M1297 205V211M1299 203V212M1302 200V208M1305 190V206M1307 188V195M1310 186V193M1313 181V193M1315 177V185M1329 187V207M1337 184V196M1342 183V188M1355 198V210M1358 196V210M1361 190V200M1363 189V198M1366 181V190M1369 169V185M1371 176V182M1379 190V205M1382 182V194M1390 178V182M1393 162V173M1401 174V184M1406 172V176M1409 164V181M1411 161V165M1414 147V159M1417 132V142M1419 130V133M1422 119V125M1425 112V122M1427 100V111M1443 132V140M1446 129V142M1449 123V133M1451 122V127M1470 142V151M1473 139V147M1475 135V142M1478 132V142M1481 125V131M1483 114V124M1486 115V126M1499 133V141M1502 131V138M1505 124V135M1510 128V132M1513 120V128M1515 114V128M1529 154V162M1534 150V157M1537 149V153M1539 148V152M1542 140V146" stroke="#ff4040" stroke-width="2"/>
<path d="M65.5 400V410M86.5 379V387M94.5 377V382M97.5 378V388M102.5 380V384M107.5 377V387M118.5 376V384M126.5 366V376M139.5 347V363M142.5 354V367M145.5 363V375M147.5 362V376M153.5 364V367M158.5 356V362M163.5 354V373M166.5 362V377M169.5 370V382M171.5 369V377M187.5 350V362M190.5 354V364M198.5 347V357M219.5 311V318M222.5 313V324M230.5 306V314M233.5 304V320M238.5 308V314M241.5 307V321M243.5 311V320M246.5 314V326M251.5 319V333M257.5 323V335M259.5 326V335M262.5 328V336M267.5 329V339M270.5 332V342M273.5 332V350M278.5 332V344M281.5 331V344M297.5 321V333M321.5 295V307M334.5 275V298M361.5 196V211M363.5 195V216M366.5 201V214M371.5 195V207M377.5 190V202M379.5 192V206M382.5 193V221M385.5 209V229M387.5 207V227M390.5 216V250M393.5 232V250M395.5 226V252M406.5 210V227M409.5 217V240M427.5 146V174M435.5 144V171M441.5 144V163M451.5 140V159M454.5 146V182M459.5 152V176M483.5 91V120M491.5 44V115M494.5 88V107M497.5 89V123M502.5 89V116M505.5 100V128M507.5 118V150M510.5 117V148M513.5 141V156M515.5 144V162M518.5 152V165M521.5 145V179M523.5 160V187M526.5 166V201M542.5 162V181M545.5 165V184M547.5 171V197M553.5 168V184M563.5 156V171M569.5 150V175M571.5 167V181M577.5 164V188M585.5 153V171M590.5 151V162M593.5 148V163M601.5 126V150M609.5 119V135M611.5 124V143M614.5 135V151M617.5 141V160M625.5 124V146M627.5 132V157M630.5 145V161M635.5 147V165M651.5 135V148M654.5 139V158M675.5 115V134M678.5 121V136M681.5 117V143M683.5 129V151M686.5 135V154M689.5 135V162M691.5 145V163M694.5 156V177M697.5 170V188M699.5 165V190M702.5 175V206M710.5 189V204M713.5 192V210M715.5 197V219M718.5 211V241M721.5 214V240M739.5 188V194M742.5 182V196M745.5 188V196M753.5 179V191M755.5 182V195M758.5 184V195M761.5 189V209M766.5 197V209M769.5 199V221M795.5 166V183M798.5 174V195M801.5 186V207M809.5 179V190M819.5 166V172M833.5 140V159M835.5 147V163M838.5 157V168M841.5 154V171M843.5 159V175M849.5 161V171M851.5 164V176M854.5 167V182M859.5 167V180M865.5 167V176M867.5 168V187M873.5 162V170M875.5 165V175M883.5 159V164M897.5 130V140M905.5 123V146M907.5 134V166M913.5 149V175M929.5 136V146M937.5 137V155M947.5 134V142M955.5 131V146M961.5 128V149M963.5 134V141M966.5 134V156M969.5 147V159M971.5 153V167M987.5 144V156M990.5 146V162M993.5 152V163M998.5 148V158M1001.5 152V159M1009.5 143V157M1011.5 150V161M1017.5 148V168M1025.5 148V157M1027.5 151V166M1033.5 136V158M1038.5 151V168M1041.5 147V175M1043.5 160V167M1051.5 145V160M1057.5 146V154M1059.5 145V154M1073.5 53V101M1075.5 75V95M1078.5 87V101M1086.5 85V99M1091.5 72V91M1094.5 83V110M1097.5 88V114M1099.5 93V141M1102.5 110V138M1107.5 119V141M1113.5 120V130M1118.5 123V138M1121.5 128V143M1123.5 134V148M1126.5 139V156M1129.5 148V172M1134.5 153V172M1139.5 145V162M1147.5 139V159M1153.5 148V158M1158.5 150V163M1161.5 154V172M1166.5 163V171M1169.5 153V181M1171.5 172V194M1179.5 180V197M1185.5 179V190M1187.5 180V191M1190.5 180V193M1198.5 185V202M1201.5 181V196M1203.5 187V202M1206.5 192V202M1209.5 197V216M1214.5 195V204M1219.5 194V207M1222.5 202V218M1225.5 209V221M1227.5 213V229M1230.5 223V237M1233.5 225V246M1249.5 210V224M1259.5 197V214M1270.5 181V201M1273.5 186V196M1278.5 187V204M1281.5 178V205M1286.5 183V212M1289.5 193V221M1291.5 209V216M1318.5 176V192M1321.5 175V197M1323.5 190V212M1326.5 185V200M1331.5 187V197M1334.5 191V202M1339.5 183V197M1345.5 180V191M1347.5 185V197M1350.5 186V201M1353.5 194V205M1374.5 174V190M1377.5 175V200M1385.5 171V187M1387.5 173V187M1395.5 163V175M1398.5 166V187M1403.5 167V184M1430.5 98V122M1433.5 112V123M1435.5 117V140M1438.5 125V152M1441.5 136V143M1454.5 115V131M1457.5 125V135M1459.5 119V137M1462.5 124V140M1465.5 126V154M1467.5 133V152M1489.5 112V126M1491.5 114V124M1494.5 118V139M1497.5 126V149M1507.5 123V135M1518.5 122V146M1521.5 140V159M1523.5 148V162M1526.5 147V163M1531.5 147V164" stroke="#00ffff" stroke-width="1"/>
<path d="M65 402V407M86 380V386M94 379V382M97 381V387M102 381V384M107 378V385M118 379V381M126 367V375M139 353V358M142 355V366M145 365V373M147 366V370M153 365V366M158 357V360M163 360V369M166 364V372M169 375V380M171 371V375M187 351V361M190 358V360M198 348V355M219 312V317M222 317V320M230 308V314M233 310V317M238 310V313M241 309V320M243 313V318M246 318V321M251 321V331M257 326V330M259 329V335M262 329V334M267 330V336M270 334V339M273 333V343M278 333V340M281 335V341M297 322V331M321 297V305M334 280V291M361 197V205M363 203V207M366 205V212M371 198V206M377 193V198M379 195V205M382 201V210M385 216V227M387 213V222M390 220V248M393 233V247M395 231V243M406 216V223M409 218V238M427 152V170M435 151V160M441 149V157M451 144V154M454 158V178M459 158V166M483 100V118M491 63V108M494 92V101M497 98V109M502 99V105M505 104V117M507 130V138M510 121V141M513 142V152M515 150V159M518 154V160M521 157V176M523 165V180M526 173V192M542 167V176M545 172V181M547 180V194M553 174V181M563 160V167M569 155V173M571 169V176M577 170V180M585 156V166M590 152V157M593 152V157M601 131V144M609 121V134M611 131V140M614 137V146M617 146V154M625 129V143M627 142V153M630 148V157M635 152V160M651 137V144M654 145V157M675 122V128M678 122V132M681 123V133M683 135V144M686 139V152M689 146V158M691 151V159M694 160V173M697 176V184M699 173V185M702 178V195M710 195V200M713 199V210M715 201V210M718 224V238M721 216V235M739 189V192M742 187V191M745 190V195M753 183V188M755 186V193M758 187V191M761 191V207M766 201V207M769 206V220M795 173V180M798 177V186M801 189V203M809 181V190M819 168V171M833 143V153M835 152V159M838 160V164M841 157V166M843 165V169M849 165V170M851 168V175M854 173V179M859 171V178M865 169V174M867 173V184M873 165V167M875 168V173M883 159V162M897 133V138M905 132V141M907 141V164M913 156V164M929 136V142M937 144V152M947 134V141M955 136V145M961 133V144M963 136V139M966 142V150M969 151V157M971 155V161M987 148V153M990 148V160M993 155V162M998 149V156M1001 155V159M1009 145V153M1011 152V159M1017 150V160M1025 151V154M1027 155V161M1033 139V153M1038 155V165M1041 150V168M1043 162V165M1051 150V158M1057 148V153M1059 145V151M1073 63V82M1075 77V91M1078 92V96M1086 86V98M1091 78V88M1094 93V101M1097 95V110M1099 96V129M1102 112V135M1107 127V133M1113 123V126M1118 125V132M1121 133V142M1123 138V146M1126 140V152M1129 150V162M1134 155V165M1139 151V160M1147 144V151M1153 151V156M1158 153V162M1161 159V171M1166 166V169M1169 156V171M1171 177V193M1179 181V191M1185 181V185M1187 184V187M1190 183V189M1198 191V196M1201 184V191M1203 192V196M1206 194V200M1209 199V211M1214 198V200M1219 197V203M1222 205V216M1225 214V217M1227 218V227M1230 226V234M1233 231V239M1249 212V222M1259 203V211M1270 183V198M1273 190V193M1278 190V199M1281 184V201M1286 190V203M1289 195V215M1291 210V214M1318 181V191M1321 178V192M1323 194V204M1326 189V196M1331 191V193M1334 195V199M1339 187V194M1345 182V187M1347 188V195M1350 189V198M1353 196V201M1374 176V187M1377 182V198M1385 178V182M1387 176V184M1395 164V174M1398 170V186M1403 170V178M1430 106V117M1433 115V119M1435 126V131M1438 127V141M1441 138V140M1454 118V126M1457 128V132M1459 120V130M1462 131V139M1465 136V146M1467 139V147M1489 117V124M1491 116V121M1494 120V132M1497 128V140M1507 127V133M1518 129V142M1521 142V151M1523 152V158M1526 150V162M1531 152V160" stroke="#00ffff" stroke-width="2"/>
</g>
<use href="#ga" x="73" y="398"/>
<use href="#ga" x="110" y="379"/>
<use href="#ga" x="120" y="383"/>
<use href="#ga" x="134" y="376"/>
<use href="#ga" x="151" y="367"/>
<use href="#ga" x="169" y="363"/>
<use href="#ga" x="182" y="366"/>
<use href="#ga" x="247" y="315"/>
<use href="#ga" x="258" y="317"/>
<use href="#ga" x="390" y="197"/>
<use href="#ga" x="415" y="218"/>
<use href="#ga" x="457" y="156"/>
<use href="#ga" x="502" y="87"/>
<use href="#ga" x="547" y="160"/>
<use href="#ga" x="574" y="156"/>
<use href="#ga" x="584" y="165"/>
<use href="#ga" x="618" y="142"/>
<use href="#ga" x="631" y="135"/>
<use href="#ga" x="683" y="129"/>
<use href="#ga" x="767" y="189"/>
<use href="#ga" x="807" y="183"/>
<use href="#ga" x="848" y="161"/>
<use href="#ga" x="856" y="161"/>
<use href="#ga" x="865" y="154"/>
<use href="#ga" x="911" y="141"/>
<use href="#ga" x="967" y="131"/>
<use href="#ga" x="1000" y="141"/>
<use href="#ga" x="1015" y="143"/>
<use href="#ga" x="1038" y="149"/>
<use href="#ga" x="1102" y="94"/>
<use href="#ga" x="1153" y="145"/>
<use href="#ga" x="1164" y="142"/>
<use href="#ga" x="1292" y="195"/>
<use href="#ga" x="1327" y="184"/>
<use href="#ga" x="1352" y="179"/>
<use href="#ga" x="1383" y="189"/>
<use href="#ga" x="1406" y="172"/>
<use href="#ga" x="1443" y="126"/>
<use href="#ga" x="1465" y="119"/>
<use href="#ga" x="1496" y="113"/>
<use href="#ga" x="1510" y="122"/>
<use href="#ga" x="1521" y="121"/>
<use href="#oa" x="70" y="406"/>
<use href="#oa" x="81" y="405"/>
<use href="#oa" x="111" y="389"/>
<use href="#oa" x="124" y="391"/>
<use href="#oa" x="136" y="389"/>
<use href="#oa" x="160" y="374"/>
<use href="#oa" x="178" y="374"/>
<use href="#oa" x="185" y="377"/>
<use href="#oa" x="254" y="324"/>
<use href="#oa" x="292" y="338"/>
<use href="#oa" x="406" y="227"/>
<use href="#oa" x="417" y="231"/>
<use href="#oa" x="463" y="180"/>
<use href="#oa" x="542" y="184"/>
<use href="#oa" x="558" y="183"/>
<use href="#oa" x="586" y="172"/>
<use href="#oa" x="625" y="149"/>
<use href="#oa" x="651" y="166"/>
<use href="#oa" x="737" y="215"/>
<use href="#oa" x="782" y="217"/>
<use href="#oa" x="812" y="193"/>
<use href="#oa" x="852" y="176"/>
<use href="#oa" x="862" y="171"/>
<use href="#oa" x="878" y="179"/>
<use href="#oa" x="927" y="162"/>
<use href="#oa" x="991" y="159"/>
<use href="#oa" x="1007" y="157"/>
<use href="#oa" x="1028" y="157"/>
<use href="#oa" x="1056" y="162"/>
<use href="#oa" x="1147" y="160"/>
<use href="#oa" x="1161" y="163"/>
<use href="#oa" x="1248" y="238"/>
<use href="#oa" x="1305" y="219"/>
<use href="#oa" x="1334" y="206"/>
<use href="#oa" x="1367" y="213"/>
<use href="#oa" x="1389" y="190"/>
<use href="#oa" x="1409" y="190"/>
<use href="#oa" x="1451" y="143"/>
<use href="#oa" x="1484" y="139"/>
<use href="#oa" x="1507" y="134"/>
<use href="#oa" x="1518" y="136"/>
<use href="#oa" x="1545" y="161"/>
<g stroke-linejoin="round" shape-rendering="crispEdges">
<polyline points="62,404.4 65,404.5 67,404.6 70,404.6 73,404.5 75,404.4 78,404.3 81,404 83,403.6 86,403.2 89,402.8 91,402.3 94,401.8 97,401.3 99,400.9 102,400.5 105,400 107,399.6 110,399.2 113,398.7 115,398.2 118,397.8 121,397.3 123,396.7 126,396.2 129,395.6 131,394.8 134,394 137,393.1 139,392.3 142,391.6 145,390.9 147,390.3 150,389.6 153,388.9 155,388 158,387.2 161,386.4 163,385.7 166,385.1 169,384.5 171,384 174,383.3 177,382.7 179,382 182,381.2 185,380.3 187,379.5 190,378.7 193,377.8 195,376.8 198,375.9 201,374.9 203,373.8 206,372.7 209,371.4 211,370 214,368.4 217,366.8 219,365.3 222,363.9 225,362.5 227,361 230,359.7 233,358.4 235,357.1 238,355.9 241,354.7 243,353.5 246,352.4 249,351.3 251,350.4 254,349.3 257,348.3 259,347.4 262,346.6 265,345.7 267,345 270,344.4 273,343.8 275,343.2 278,342.9 281,342.5 283,342.3 286,341.8 289,341.1 291,340.3 294,339.5 297,338.7 299,338 302,337.3 305,336.5 307,335.7 310,334.6 313,333.4 315,332 318,330.7 321,329.5 323,328.2 326,326.9 329,325.7 331,324.4 334,323.2 337,321.8 339,320.3 342,318.9 345,317.3 347,315.7 350,313.9 353,311.9 355,309.5 358,307.1 361,305 363,303 366,301.1 369,298.8 371,296.7 374,294.6 377,292.5 379,290.4 382,288.7 385,287 387,285.2 390,283.7 393,282.2 395,280.7 398,278.9 401,277 403,275 406,273 409,271 411,268.9 414,266.7 417,264 419,261.2 422,258.2 425,254.9 427,251.7 430,248.4 433,245.1 435,241.9 438,238.8 441,235.7 443,232.6 446,229.4 449,226.2 451,223.2 454,220.5 457,217.9 459,215.3 462,212.7 465,210 467,207 470,204.1 473,201.2 475,198.2 478,195.2 481,191.8 483,188.5 486,185.4 489,182.2 491,179.2 494,176.2 497,173.7 499,171.3 502,169.6 505,168.2 507,166.9 510,165.8 513,164.7 515,164 518,163.3 521,162.8 523,162.5 526,162.4 529,161.9 531,161.4 534,160.7 537,159.7 539,158.4 542,157.2 545,156.2 547,155.4 550,154.6 553,153.8 555,152.9 558,151.8 561,150.9 563,150.4 566,150 569,150 571,150.2 574,150.3 577,150.6 579,151 582,151 585,151.3 587,151.3 590,151.4 593,151.5 595,151.7 598,151.4 601,151 603,150.5 606,149.8 609,149.4 611,149.2 614,149.3 617,149.7 619,149.9 622,150 625,150.3 627,151.2 630,152.2 633,153.2 635,154.3 638,155.5 641,156.6 643,157.5 646,158.4 649,159 651,159.4 654,159.8 657,159.8 659,159.7 662,159.4 665,158.8 667,158 670,157 673,155.6 675,154.4 678,153.3 681,152.5 683,151.9 686,151.5 689,151.1 691,150.9 694,150.7 697,150.9 699,151.1 702,151.6 705,152.2 707,152.8 710,153.4 713,154.2 715,155 718,155.9 721,157 723,157.9 726,158.7 729,159.6 731,160.2 734,161 737,161.6 739,162.2 742,162.9 745,163.8 747,164.7 750,165.6 753,166.6 755,167.6 758,168.5 761,169.5 763,170.3 766,171.4 769,172.9 771,174.2 774,175.3 777,176.2 779,177 782,177.6 785,178.2 787,178.7 790,179 793,179.4 795,180 798,180.8 801,181.6 803,182.4 806,183.1 809,184 811,184.8 814,185.6 817,186.5 819,187.5 822,188.3 825,188.8 827,189.1 830,189.2 833,189.3 835,189.4 838,189.5 841,189.3 843,189.1 846,188.6 849,188 851,187.5 854,187.2 857,186.7 859,186.1 862,185.3 865,184.5 867,183.5 870,182.4 873,181.6 875,181 878,180.3 881,179.6 883,179.1 886,178.4 889,177.5 891,176.6 894,175.7 897,174.8 899,173.9 902,172.8 905,171.9 907,171.1 910,170.2 913,169.3 915,168.2 918,167.1 921,165.9 923,164.7 926,163.6 929,162.6 931,161.8 934,160.9 937,160.4 939,160 942,159.3 945,158.4 947,157.4 950,156.3 953,155.5 955,154.6 958,153.7 961,153.1 963,152.6 966,152.2 969,152 971,152.1 974,152.2 977,152.3 979,152.4 982,152.2 985,152 987,151.8 990,151.6 993,151.4 995,151.1 998,150.9 1001,150.6 1003,150.2 1006,149.7 1009,149.4 1011,149.1 1014,148.8 1017,148.6 1019,148.4 1022,148.1 1025,147.9 1027,147.8 1030,147.6 1033,147.6 1035,147.9 1038,148.1 1041,148.6 1043,149.1 1046,149.7 1049,150.1 1051,150.3 1054,150.2 1057,150.1 1059,150 1062,149.8 1065,149.3 1067,148.7 1070,147.9 1073,147 1075,146.1 1078,145.2 1081,144.4 1083,143.4 1086,142.4 1089,141.4 1091,140.4 1094,139.7 1097,139.1 1099,138.9 1102,138.8 1105,138.7 1107,138.5 1110,138.2 1113,137.7 1115,137.1 1118,136.6 1121,136.2 1123,136 1126,136 1129,136.1 1131,136.3 1134,136.5 1137,136.4 1139,136.3 1142,136.4 1145,136.1 1147,136 1150,136 1153,136.1 1155,136.1 1158,136.1 1161,136.4 1163,136.5 1166,136.6 1169,137.1 1171,137.7 1174,138.3 1177,138.9 1179,139.5 1182,140 1185,140.5 1187,140.9 1190,141.4 1193,141.9 1195,142.6 1198,143.2 1201,144.1 1203,145 1206,145.8 1209,146.9 1211,148.2 1214,149.9 1217,151.8 1219,153.8 1222,156 1225,158.2 1227,160.6 1230,163.2 1233,165.8 1235,168.6 1238,171.3 1241,173.8 1243,176 1246,177.7 1249,179.3 1251,180.8 1254,182.2 1257,183.7 1259,185.1 1262,186.5 1265,187.6 1267,188.5 1270,189.3 1273,190 1275,190.7 1278,191.3 1281,191.9 1283,192.6 1286,193.4 1289,194.5 1291,195.8 1294,196.9 1297,197.9 1299,198.8 1302,199.8 1305,200.5 1307,200.9 1310,201.3 1313,201.6 1315,201.6 1318,201.6 1321,201.7 1323,202 1326,202.1 1329,202.2 1331,202.4 1334,202.5 1337,202.5 1339,202.4 1342,202.3 1345,202.3 1347,202.3 1350,202.3 1353,202.3 1355,202.4 1358,202.3 1361,202.2 1363,202 1366,201.6 1369,201 1371,200.3 1374,199.6 1377,198.8 1379,198 1382,196.9 1385,195.9 1387,195 1390,193.9 1393,193 1395,192.2 1398,191.8 1401,191.3 1403,190.8 1406,190.3 1409,189.7 1411,189.1 1414,188.4 1417,187.3 1419,186.1 1422,184.8 1425,183.3 1427,181.7 1430,180.3 1433,178.9 1435,177.4 1438,176 1441,174.7 1443,173.4 1446,172 1449,170.6 1451,169.2 1454,168.1 1457,167.1 1459,166.1 1462,165.4 1465,164.6 1467,163.8 1470,162.9 1473,161.9 1475,161 1478,159.8 1481,158.5 1483,157.3 1486,156 1489,154.8 1491,153.6 1494,152.5 1497,151.4 1499,150.1 1502,148.8 1505,147.6 1507,146.4 1510,145.3 1513,144.2 1515,143.2 1518,142.6 1521,141.9 1523,141.2 1526,140.5 1529,140.1 1531,139.7 1534,139.1 1537,138.7 1539,138.4 1542,137.8" fill="none" stroke="#ff00ff" stroke-width="1" />
<polyline points="62,404.4 65,404.5 67,404.4 70,404.3 73,404.2 75,403.8 78,403.4 81,402.7 83,401.7 86,400.8 89,399.7 91,398.4 94,397.2 97,396.2 99,395.2 102,394.2 105,393.1 107,392.2 110,391.2 113,390.2 115,388.9 118,387.8 121,386.3 123,384.8 126,383.4 129,381.8 131,380 134,378.3 137,376.4 139,375.2 142,374.2 145,373.6 147,373.3 150,372.6 153,371.8 155,370.7 158,369.5 161,368.5 163,367.6 166,367.1 169,366.6 171,366.5 174,365.9 177,365.7 179,365.4 182,364.8 185,364.2 187,364.2 190,364.3 193,364.4 195,364 198,363.4 201,362.5 203,361.3 206,360.1 209,358.6 211,357.2 214,355.2 217,353.2 219,350.8 222,348.3 225,345.6 227,342.6 230,339.8 233,337.1 235,334.5 238,332.2 241,330.2 243,328.3 246,326.4 249,324.8 251,323.8 254,322.6 257,321.6 259,321 262,320.6 265,320.5 267,320.8 270,321.9 273,323.1 275,324 278,324.9 281,326.1 283,327.4 286,328.3 289,328.9 291,329.7 294,330.3 297,330.7 299,331.1 302,331 305,330.7 307,330 310,329.1 313,327.9 315,326.4 318,324.8 321,323.4 323,321.8 326,319.6 329,317.2 331,315 334,312.6 337,309.9 339,306.9 342,304.2 345,301 347,298.1 350,294.4 353,289.8 355,284 358,278.2 361,272.8 363,267.7 366,262.9 369,257.8 371,253 374,248 377,243 379,238.1 382,234.3 385,230.8 387,227.6 390,225 393,222.7 395,220.9 398,218.9 401,217 403,214.9 406,213.7 409,213.6 411,214.3 414,214.9 417,214.5 419,213.5 422,211.7 425,209.8 427,208.2 430,206.3 433,204.1 435,202 438,199 441,196.1 443,192.9 446,188.7 449,184.3 451,180.4 454,177.1 457,174.3 459,171.7 462,168.5 465,164.9 467,161.3 470,157.8 473,154.9 475,152.3 478,150 481,147.3 483,144.5 486,142 489,139.6 491,136.7 494,134.1 497,131.8 499,129.2 502,127.4 505,126.4 507,125.2 510,124.3 513,123.7 515,123.3 518,123.6 521,124.6 523,126.3 526,128.8 529,131.6 531,134.5 534,137.3 537,140.9 539,143.8 542,147.1 545,150.7 547,154.8 550,158.5 553,161.8 555,165.3 558,167.9 561,169.6 563,171.3 566,172.1 569,173 571,173.8 574,174.3 577,174.4 579,173.9 582,172.3 585,171.2 587,169.5 590,168.4 593,167.4 595,166.7 598,165.1 601,163.5 603,161.3 606,159.1 609,157 611,155.4 614,154.7 617,154.5 619,153.6 622,152.3 625,150.9 627,149.9 630,149.4 633,148.7 635,148.4 638,148.4 641,148 643,148 646,147.6 649,147 651,146.7 654,147.2 657,147.4 659,147.9 662,148.3 665,148.2 667,147.7 670,146.3 673,144.5 675,143.4 678,143.2 681,143 683,142.6 686,142.1 689,141.7 691,141.6 694,142.3 697,143.5 699,145 702,147.5 705,150 707,152.2 710,154.6 713,157.3 715,160.7 718,164.7 721,169.4 723,173.9 726,178.5 729,182.6 731,186.4 734,189.5 737,192.1 739,194.4 742,196.5 745,198.4 747,199.7 750,200.2 753,200.3 755,200.2 758,199.9 761,200.1 763,200.5 766,200.7 769,201.2 771,201.2 774,200.7 777,199.7 779,198.7 782,197.9 785,197.1 787,196.3 790,195.3 793,194.4 795,193.8 798,193.7 801,193.7 803,193.9 806,193.9 809,193.8 811,193.4 814,192.4 817,190.8 819,189.4 822,187.5 825,184.9 827,182.2 830,179.1 833,176.4 835,174.4 838,172.7 841,171.6 843,170.7 846,170.2 849,170 851,169.7 854,168.9 857,167.9 859,167 862,166.5 865,166 867,165.8 870,165.6 873,165.7 875,165.6 878,165.4 881,165.5 883,165.8 886,166 889,165.7 891,164.9 894,163.6 897,162.2 899,160.5 902,158.8 905,157.6 907,156.9 910,156 913,155.3 915,154.3 918,153.4 921,152.2 923,150.6 926,149.3 929,148.1 931,146.8 934,145.7 937,145 939,144.3 942,143.8 945,143.4 947,143.3 950,143.3 953,143.1 955,143.3 958,143.4 961,143.2 963,142.4 966,142.3 969,142.3 971,142.8 974,143.1 977,143.5 979,144.1 982,144.7 985,144.9 987,145.4 990,146.2 993,146.7 995,146.9 998,147.6 1001,148.5 1003,149.2 1006,149.7 1009,150.7 1011,151.7 1014,152.8 1017,153.8 1019,154.6 1022,154.8 1025,154.7 1027,154.2 1030,153.8 1033,153.8 1035,153.8 1038,154.1 1041,154.8 1043,155.3 1046,155.5 1049,155.3 1051,155.5 1054,155.2 1057,154.7 1059,154.7 1062,154.5 1065,153.2 1067,151 1070,148.3 1073,145 1075,141.9 1078,139.2 1081,136.4 1083,133.5 1086,130.8 1089,127.3 1091,124 1094,121.1 1097,118.5 1099,116.4 1102,114.8 1105,113.6 1107,112.1 1110,110.9 1113,109.8 1115,108.5 1118,108 1121,108.7 1123,110.2 1126,112.9 1129,116.1 1131,119.3 1134,122.5 1137,125.3 1139,128.3 1142,131 1145,133.9 1147,137 1150,139.6 1153,141.8 1155,143.2 1158,144.7 1161,146.7 1163,148.5 1166,150.7 1169,153.2 1171,156.2 1174,158.7 1177,160.8 1179,162.9 1182,164.3 1185,165.6 1187,166.9 1190,168.2 1193,169.9 1195,171.5 1198,173.5 1201,175.9 1203,178.2 1206,180.5 1209,182.7 1211,184.9 1214,186.9 1217,188.6 1219,190.5 1222,192.6 1225,194.5 1227,196.3 1230,198.6 1233,201.2 1235,203.5 1238,206 1241,208.2 1243,210.3 1246,211.5 1249,212.8 1251,213.6 1254,214.2 1257,214.7 1259,215 1262,214.9 1265,214.6 1267,214.1 1270,213.6 1273,213.2 1275,212.6 1278,211.8 1281,210.9 1283,209.1 1286,207.5 1289,206.2 1291,205.2 1294,204.2 1297,202.9 1299,201.7 1302,201.1 1305,200.2 1307,199.5 1310,198.6 1313,197.6 1315,196.4 1318,195.9 1321,195.8 1323,196.2 1326,196.4 1329,196.2 1331,196.3 1334,196.3 1337,195.8 1339,195.8 1342,195 1345,193.9 1347,192.9 1350,192.1 1353,192 1355,191.9 1358,191.7 1361,191.4 1363,191.3 1366,191.3 1369,191.1 1371,191 1374,191 1377,191 1379,190.9 1382,189.8 1385,189.3 1387,188.8 1390,187.8 1393,186.8 1395,186 1398,186 1401,185.4 1403,184.6 1406,183.7 1409,181.8 1411,179.9 1414,177.5 1417,174.6 1419,171.7 1422,168.6 1425,165.4 1427,162.1 1430,158.7 1433,155.2 1435,152.3 1438,150.5 1441,148.7 1443,146.5 1446,144.3 1449,142.4 1451,140 1454,137.5 1457,135.2 1459,132.9 1462,131.1 1465,130.2 1467,129.5 1470,129.4 1473,129.8 1475,130.3 1478,130.9 1481,131.5 1483,131.9 1486,131.9 1489,132 1491,131.4 1494,131.2 1497,131.2 1499,131.1 1502,131.1 1505,131.2 1507,131.6 1510,131.7 1513,131.5 1515,131.2 1518,131.4 1521,131.6 1523,131.8 1526,132.2 1529,132.7 1531,133.6 1534,134.5 1537,135.8 1539,137.3 1542,138.5" fill="none" stroke="#ffff00" stroke-width="1" />
<polyline points="62,404.2 65,404.5 67,404.5 70,404.4 73,404 75,403.3 78,402.1 81,400.5 83,398.3 86,395.7 89,393 91,390 94,387.2 97,385.3 99,383.8 102,382.9 105,382.5 107,382.5 110,382.6 113,382.7 115,382.4 118,382.4 121,381.7 123,380.4 126,378.9 129,377.1 131,374.5 134,371.6 137,368.4 139,365.3 142,363.2 145,362.2 147,362.5 150,363.7 153,364.9 155,365.2 158,364.9 161,363.7 163,362.9 166,362.9 169,363.9 171,365.6 174,367.6 177,369.2 179,369.7 182,369.1 185,367.5 187,365.6 190,363.8 193,361.8 195,359.8 198,358.3 201,356.7 203,354.6 206,352.3 209,349.8 211,346.5 214,342.1 217,337.2 219,332.2 222,328.1 225,324.5 227,321.6 230,319.4 233,317.9 235,316.2 238,314.6 241,313.9 243,313.8 246,314.2 249,315.2 251,317.1 254,319.1 257,321.2 259,323.4 262,325.7 265,327.4 267,329.1 270,330.9 273,332.7 275,334 278,335.4 281,336.7 283,337.4 286,337.3 289,336.7 291,335.3 294,333.2 297,331 299,329.1 302,327.3 305,325.5 307,323.6 310,321.2 313,318.2 315,314.9 318,311.7 321,308.8 323,306.4 326,304.1 329,302 331,299.8 334,297.4 337,294.8 339,291.8 342,288.5 345,284.7 347,280.3 350,274.8 353,268.1 355,259 358,248.6 361,237.7 363,227.7 366,219.6 369,213.8 371,210 374,207 377,204.4 379,202.1 382,201.7 385,202.7 387,205 390,209 393,214.2 395,219.2 398,223.6 401,226.5 403,227.5 406,227.1 409,226.1 411,224.5 414,222.6 417,219.8 419,215.4 422,208.7 425,200.3 427,191.6 430,183.3 433,175.5 435,169.3 438,164.7 441,161.1 443,158.4 446,156.4 449,154.4 451,153.2 454,153 457,153.6 459,155.1 462,156.6 465,157.5 467,156.5 470,154.2 473,150.6 475,146.6 478,142 481,136.3 483,130.2 486,124.2 489,118.3 491,112.6 494,108.5 497,105.9 499,103.8 502,103 505,104.4 507,107.4 510,111.9 513,118.4 515,125.9 518,133.2 521,140.9 523,148.3 526,156 529,163.4 531,170.4 534,175.6 537,179 539,179.7 542,179 545,177.6 547,176.5 550,175.7 553,175.9 555,175.9 558,175.1 561,173.2 563,171.2 566,168.9 569,167.2 571,166.7 574,167 577,167.8 579,168.8 582,168.6 585,168.1 587,166.8 590,164.9 593,162.8 595,161 598,158 601,155.2 603,151.8 606,147.5 609,143.5 611,140.7 614,139.2 617,139.7 619,141.3 622,142.4 625,143.2 627,144.1 630,144.7 633,146.1 635,148.7 638,151.8 641,154.2 643,155.7 646,156 649,154.9 651,153.3 654,151.8 657,150.2 659,148.8 662,147.4 665,145.6 667,142.8 670,139 673,134.9 675,131.2 678,128.7 681,127.5 683,128.3 686,130.8 689,134.4 691,138.8 694,144.2 697,150.5 699,157.3 702,165.1 705,172.8 707,179.1 710,184.5 713,189.2 715,193.3 718,197.6 721,203 723,208.1 726,212.3 729,214.4 731,214.6 734,212.5 737,208.9 739,204.8 742,201.3 745,198.2 747,195.5 750,193.3 753,191.4 755,189.8 758,188.8 761,189.1 763,190.4 766,192.8 769,196.1 771,199.7 774,202.7 777,205.3 779,206.8 782,206.7 785,205 787,202.2 790,198.2 793,193.3 795,188.7 798,185.7 801,184.1 803,184.2 806,185 809,185.9 811,185.9 814,184.4 817,181.8 819,179.2 822,176.5 825,173.3 827,170.2 830,166.8 833,163.2 835,160.3 838,158.7 841,158.2 843,159.2 846,160.7 849,162.2 851,163.7 854,165.3 857,166.5 859,167.9 862,169.2 865,170.3 867,171 870,171.4 873,171.2 875,171 878,170.3 881,168.8 883,167.5 886,165.5 889,162.4 891,159 894,155 897,150.7 899,146.5 902,142.7 905,140.1 907,139.7 910,140.5 913,142.6 915,145.7 918,148.5 921,149.8 923,149.9 926,148.9 929,147.5 931,145.9 934,144.4 937,143.7 939,143.8 942,143.6 945,143.1 947,142.7 950,141.8 953,140.3 955,138.9 958,137.5 961,136.6 963,136.2 966,137 969,138.9 971,142.4 974,146.1 977,149.6 979,152.3 982,153.8 985,153.8 987,153.4 990,153.2 993,153.2 995,153.2 998,153.6 1001,154.2 1003,154.3 1006,153.6 1009,153.5 1011,153.5 1014,153.2 1017,153.5 1019,154.4 1022,154.8 1025,154.9 1027,155.1 1030,154.6 1033,154.1 1035,153.9 1038,154.1 1041,154.8 1043,156.2 1046,157.6 1049,158.2 1051,158.5 1054,157.7 1057,156.1 1059,154.4 1062,152.7 1065,149.5 1067,145 1070,138.6 1073,130.2 1075,121.1 1078,113.2 1081,106.8 1083,102.2 1086,99.3 1089,96.8 1091,94.4 1094,92.9 1097,93 1099,94.9 1102,99.2 1105,104.7 1107,110.4 1110,115.1 1113,118.4 1115,120.4 1118,122.3 1121,124.4 1123,127.2 1126,131 1129,135.9 1131,140.7 1134,145.6 1137,149.5 1139,152.2 1142,153.4 1145,153.2 1147,152.3 1150,151.5 1153,151 1155,150.8 1158,151.7 1161,153.3 1163,155.3 1166,157.5 1169,160.6 1171,164.6 1174,168.5 1177,172.4 1179,176.4 1182,179.3 1185,181.2 1187,182.5 1190,183.8 1193,184.7 1195,185.8 1198,187 1201,188.2 1203,189.6 1206,191.1 1209,193 1211,194.7 1214,196.4 1217,197.7 1219,199 1222,200.5 1225,202.7 1227,205.8 1230,210 1233,215 1235,220 1238,224.5 1241,228 1243,230.1 1246,230 1249,228.5 1251,225.7 1254,222 1257,217.6 1259,214 1262,210.4 1265,207.3 1267,204 1270,201.1 1273,198.4 1275,196.2 1278,194.6 1281,194.3 1283,193.9 1286,194.1 1289,195.5 1291,197.7 1294,200.3 1297,203.2 1299,205.4 1302,206.3 1305,205.7 1307,204 1310,201.4 1313,198.2 1315,194.6 1318,191.4 1321,189.3 1323,188.7 1326,189.2 1329,190.2 1331,191.3 1334,192.2 1337,192.1 1339,191.5 1342,190.7 1345,189.9 1347,189.2 1350,189.5 1353,190.7 1355,192.8 1358,194.8 1361,196 1363,196.4 1366,195.4 1369,193.1 1371,190.2 1374,187.9 1377,186.5 1379,186.2 1382,185.8 1385,185.5 1387,185.1 1390,183.6 1393,180.7 1395,178.6 1398,177.4 1401,176.2 1403,175.7 1406,176.1 1409,175.8 1411,174.3 1414,171.4 1417,166.4 1419,159.9 1422,152.6 1425,144.3 1427,136.3 1430,129.7 1433,124.6 1435,122.1 1438,122.2 1441,124.3 1443,127.1 1446,129.7 1449,131 1451,130.7 1454,129.8 1457,128.7 1459,128 1462,128.4 1465,130.2 1467,132.7 1470,135.6 1473,138.2 1475,140.1 1478,140.4 1481,139 1483,136.2 1486,132.5 1489,128.8 1491,125.6 1494,124.1 1497,124.6 1499,126.2 1502,127.9 1505,129.5 1507,130.2 1510,130.2 1513,129.5 1515,128.7 1518,129.1 1521,130.7 1523,133.3 1526,137 1529,141.4 1531,145.2 1534,147.9 1537,149.6 1539,150.3 1542,149.9" fill="none" stroke="#ff0000" stroke-width="3" />
<path d="M70 403.3v2.200M73 402.9v2.200M75 402.2v2.200M78 401v2.200M81 399.4v2.200M83 397.2v2.200M86 394.6v2.200M89 391.9v2.200M91 388.9v2.200M94 386.1v2.200M97 384.2v2.200M99 382.7v2.200M102 381.8v2.200M105 381.4v2.200M107 381.4v2.200M115 381.3v2.200M118 381.3v2.200M121 380.6v2.200M123 379.3v2.200M126 377.8v2.200M129 376v2.200M131 373.4v2.200M134 370.5v2.200M137 367.3v2.200M139 364.2v2.200M142 362.1v2.200M145 361.1v2.200M158 363.8v2.200M161 362.6v2.200M163 361.8v2.200M166 361.8v2.200M182 368v2.200M185 366.4v2.200M187 364.5v2.200M190 362.7v2.200M193 360.7v2.200M195 358.7v2.200M198 357.2v2.200M201 355.6v2.200M203 353.5v2.200M206 351.2v2.200M209 348.7v2.200M211 345.4v2.200M214 341v2.200M217 336.1v2.200M219 331.1v2.200M222 327v2.200M225 323.4v2.200M227 320.5v2.200M230 318.3v2.200M233 316.8v2.200M235 315.1v2.200M238 313.5v2.200M241 312.8v2.200M243 312.7v2.200M286 336.2v2.200M289 335.6v2.200M291 334.2v2.200M294 332.1v2.200M297 329.9v2.200M299 328v2.200M302 326.2v2.200M305 324.4v2.200M307 322.5v2.200M310 320.1v2.200M313 317.1v2.200M315 313.8v2.200M318 310.6v2.200M321 307.7v2.200M323 305.3v2.200M326 303v2.200M329 300.9v2.200M331 298.7v2.200M334 296.3v2.200M337 293.7v2.200M339 290.7v2.200M342 287.4v2.200M345 283.6v2.200M347 279.2v2.200M350 273.7v2.200M353 267v2.200M355 257.9v2.200M358 247.5v2.200M361 236.6v2.200M363 226.6v2.200M366 218.5v2.200M369 212.7v2.200M371 208.9v2.200M374 205.9v2.200M377 203.3v2.200M379 201v2.200M382 200.6v2.200M406 226v2.200M409 225v2.200M411 223.4v2.200M414 221.5v2.200M417 218.7v2.200M419 214.3v2.200M422 207.6v2.200M425 199.2v2.200M427 190.5v2.200M430 182.2v2.200M433 174.4v2.200M435 168.2v2.200M438 163.6v2.200M441 160v2.200M443 157.3v2.200M446 155.3v2.200M449 153.3v2.200M451 152.1v2.200M454 151.9v2.200M467 155.4v2.200M470 153.1v2.200M473 149.5v2.200M475 145.5v2.200M478 140.9v2.200M481 135.2v2.200M483 129.1v2.200M486 123.1v2.200M489 117.2v2.200M491 111.5v2.200M494 107.4v2.200M497 104.8v2.200M499 102.7v2.200M502 101.9v2.200M542 177.9v2.200M545 176.5v2.200M547 175.4v2.200M550 174.6v2.200M555 174.8v2.200M558 174v2.200M561 172.1v2.200M563 170.1v2.200M566 167.8v2.200M569 166.1v2.200M571 165.6v2.200M582 167.5v2.200M585 167v2.200M587 165.7v2.200M590 163.8v2.200M593 161.7v2.200M595 159.9v2.200M598 156.9v2.200M601 154.1v2.200M603 150.7v2.200M606 146.4v2.200M609 142.4v2.200M611 139.6v2.200M614 138.1v2.200M649 153.8v2.200M651 152.2v2.200M654 150.7v2.200M657 149.1v2.200M659 147.7v2.200M662 146.3v2.200M665 144.5v2.200M667 141.7v2.200M670 137.9v2.200M673 133.8v2.200M675 130.1v2.200M678 127.6v2.200M681 126.4v2.200M734 211.4v2.200M737 207.8v2.200M739 203.7v2.200M742 200.2v2.200M745 197.1v2.200M747 194.4v2.200M750 192.2v2.200M753 190.3v2.200M755 188.7v2.200M758 187.7v2.200M782 205.6v2.200M785 203.9v2.200M787 201.1v2.200M790 197.1v2.200M793 192.2v2.200M795 187.6v2.200M798 184.6v2.200M801 183v2.200M811 184.8v2.200M814 183.3v2.200M817 180.7v2.200M819 178.1v2.200M822 175.4v2.200M825 172.2v2.200M827 169.1v2.200M830 165.7v2.200M833 162.1v2.200M835 159.2v2.200M838 157.6v2.200M841 157.1v2.200M873 170.1v2.200M875 169.9v2.200M878 169.2v2.200M881 167.7v2.200M883 166.4v2.200M886 164.4v2.200M889 161.3v2.200M891 157.9v2.200M894 153.9v2.200M897 149.6v2.200M899 145.4v2.200M902 141.6v2.200M905 139v2.200M907 138.6v2.200M926 147.8v2.200M929 146.4v2.200M931 144.8v2.200M934 143.3v2.200M937 142.6v2.200M939 142.7v2.200M942 142.5v2.200M945 142v2.200M947 141.6v2.200M950 140.7v2.200M953 139.2v2.200M955 137.8v2.200M958 136.4v2.200M961 135.5v2.200M963 135.1v2.200M985 152.7v2.200M987 152.3v2.200M990 152.1v2.200M993 152.1v2.200M995 152.1v2.200M1006 152.5v2.200M1009 152.4v2.200M1011 152.4v2.200M1014 152.1v2.200M1030 153.5v2.200M1033 153v2.200M1035 152.8v2.200M1054 156.6v2.200M1057 155v2.200M1059 153.3v2.200M1062 151.6v2.200M1065 148.4v2.200M1067 143.9v2.200M1070 137.5v2.200M1073 129.1v2.200M1075 120v2.200M1078 112.1v2.200M1081 105.7v2.200M1083 101.1v2.200M1086 98.2v2.200M1089 95.7v2.200M1091 93.3v2.200M1094 91.8v2.200M1145 152.1v2.200M1147 151.2v2.200M1150 150.4v2.200M1153 149.9v2.200M1155 149.7v2.200M1246 228.9v2.200M1249 227.4v2.200M1251 224.6v2.200M1254 220.9v2.200M1257 216.5v2.200M1259 212.9v2.200M1262 209.3v2.200M1265 206.2v2.200M1267 202.9v2.200M1270 200v2.200M1273 197.3v2.200M1275 195.1v2.200M1278 193.5v2.200M1281 193.2v2.200M1283 192.8v2.200M1305 204.6v2.200M1307 202.9v2.200M1310 200.3v2.200M1313 197.1v2.200M1315 193.5v2.200M1318 190.3v2.200M1321 188.2v2.200M1323 187.6v2.200M1337 191v2.200M1339 190.4v2.200M1342 189.6v2.200M1345 188.8v2.200M1347 188.1v2.200M1366 194.3v2.200M1369 192v2.200M1371 189.1v2.200M1374 186.8v2.200M1377 185.4v2.200M1379 185.1v2.200M1382 184.7v2.200M1385 184.4v2.200M1387 184v2.200M1390 182.5v2.200M1393 179.6v2.200M1395 177.5v2.200M1398 176.3v2.200M1401 175.1v2.200M1403 174.6v2.200M1409 174.7v2.200M1411 173.2v2.200M1414 170.3v2.200M1417 165.3v2.200M1419 158.8v2.200M1422 151.5v2.200M1425 143.2v2.200M1427 135.2v2.200M1430 128.6v2.200M1433 123.5v2.200M1435 121v2.200M1451 129.6v2.200M1454 128.7v2.200M1457 127.6v2.200M1459 126.9v2.200M1481 137.9v2.200M1483 135.1v2.200M1486 131.4v2.200M1489 127.7v2.200M1491 124.5v2.200M1494 123v2.200M1510 129.1v2.200M1513 128.4v2.200M1515 127.6v2.200M1542 148.8v2.200" stroke="#ffff00" stroke-width="1.3" fill="none"/>
<path d="M65 403.4v2.200M67 403.4v2.200M110 381.5v2.200M113 381.6v2.200M147 361.4v2.200M150 362.6v2.200M153 363.8v2.200M155 364.1v2.200M169 362.8v2.200M171 364.5v2.200M174 366.5v2.200M177 368.1v2.200M179 368.6v2.200M246 313.1v2.200M249 314.1v2.200M251 316v2.200M254 318v2.200M257 320.1v2.200M259 322.3v2.200M262 324.6v2.200M265 326.3v2.200M267 328v2.200M270 329.8v2.200M273 331.6v2.200M275 332.9v2.200M278 334.3v2.200M281 335.6v2.200M283 336.3v2.200M385 201.6v2.200M387 203.9v2.200M390 207.9v2.200M393 213.1v2.200M395 218.1v2.200M398 222.5v2.200M401 225.4v2.200M403 226.4v2.200M457 152.5v2.200M459 154v2.200M462 155.5v2.200M465 156.4v2.200M505 103.3v2.200M507 106.3v2.200M510 110.8v2.200M513 117.3v2.200M515 124.8v2.200M518 132.1v2.200M521 139.8v2.200M523 147.2v2.200M526 154.9v2.200M529 162.3v2.200M531 169.3v2.200M534 174.5v2.200M537 177.9v2.200M539 178.6v2.200M553 174.8v2.200M574 165.9v2.200M577 166.7v2.200M579 167.7v2.200M617 138.6v2.200M619 140.2v2.200M622 141.3v2.200M625 142.1v2.200M627 143v2.200M630 143.6v2.200M633 145v2.200M635 147.6v2.200M638 150.7v2.200M641 153.1v2.200M643 154.6v2.200M646 154.9v2.200M683 127.2v2.200M686 129.7v2.200M689 133.3v2.200M691 137.7v2.200M694 143.1v2.200M697 149.4v2.200M699 156.2v2.200M702 164v2.200M705 171.7v2.200M707 178v2.200M710 183.4v2.200M713 188.1v2.200M715 192.2v2.200M718 196.5v2.200M721 201.9v2.200M723 207v2.200M726 211.2v2.200M729 213.3v2.200M731 213.5v2.200M761 188v2.200M763 189.3v2.200M766 191.7v2.200M769 195v2.200M771 198.6v2.200M774 201.6v2.200M777 204.2v2.200M779 205.7v2.200M803 183.1v2.200M806 183.9v2.200M809 184.8v2.200M843 158.1v2.200M846 159.6v2.200M849 161.1v2.200M851 162.6v2.200M854 164.2v2.200M857 165.4v2.200M859 166.8v2.200M862 168.1v2.200M865 169.2v2.200M867 169.9v2.200M870 170.3v2.200M910 139.4v2.200M913 141.5v2.200M915 144.6v2.200M918 147.4v2.200M921 148.7v2.200M923 148.8v2.200M966 135.9v2.200M969 137.8v2.200M971 141.3v2.200M974 145v2.200M977 148.5v2.200M979 151.2v2.200M982 152.7v2.200M998 152.5v2.200M1001 153.1v2.200M1003 153.2v2.200M1017 152.4v2.200M1019 153.3v2.200M1022 153.7v2.200M1025 153.8v2.200M1027 154v2.200M1038 153v2.200M1041 153.7v2.200M1043 155.1v2.200M1046 156.5v2.200M1049 157.1v2.200M1051 157.4v2.200M1097 91.9v2.200M1099 93.8v2.200M1102 98.1v2.200M1105 103.6v2.200M1107 109.3v2.200M1110 114v2.200M1113 117.3v2.200M1115 119.3v2.200M1118 121.2v2.200M1121 123.3v2.200M1123 126.1v2.200M1126 129.9v2.200M1129 134.8v2.200M1131 139.6v2.200M1134 144.5v2.200M1137 148.4v2.200M1139 151.1v2.200M1142 152.3v2.200M1158 150.6v2.200M1161 152.2v2.200M1163 154.2v2.200M1166 156.4v2.200M1169 159.5v2.200M1171 163.5v2.200M1174 167.4v2.200M1177 171.3v2.200M1179 175.3v2.200M1182 178.2v2.200M1185 180.1v2.200M1187 181.4v2.200M1190 182.7v2.200M1193 183.6v2.200M1195 184.7v2.200M1198 185.9v2.200M1201 187.1v2.200M1203 188.5v2.200M1206 190v2.200M1209 191.9v2.200M1211 193.6v2.200M1214 195.3v2.200M1217 196.6v2.200M1219 197.9v2.200M1222 199.4v2.200M1225 201.6v2.200M1227 204.7v2.200M1230 208.9v2.200M1233 213.9v2.200M1235 218.9v2.200M1238 223.4v2.200M1241 226.9v2.200M1243 229v2.200M1286 193v2.200M1289 194.4v2.200M1291 196.6v2.200M1294 199.2v2.200M1297 202.1v2.200M1299 204.3v2.200M1302 205.2v2.200M1326 188.1v2.200M1329 189.1v2.200M1331 190.2v2.200M1334 191.1v2.200M1350 188.4v2.200M1353 189.6v2.200M1355 191.7v2.200M1358 193.7v2.200M1361 194.9v2.200M1363 195.3v2.200M1406 175v2.200M1438 121.1v2.200M1441 123.2v2.200M1443 126v2.200M1446 128.6v2.200M1449 129.9v2.200M1462 127.3v2.200M1465 129.1v2.200M1467 131.6v2.200M1470 134.5v2.200M1473 137.1v2.200M1475 139v2.200M1478 139.3v2.200M1497 123.5v2.200M1499 125.1v2.200M1502 126.8v2.200M1505 128.4v2.200M1507 129.1v2.200M1518 128v2.200M1521 129.6v2.200M1523 132.2v2.200M1526 135.9v2.200M1529 140.3v2.200M1531 144.1v2.200M1534 146.8v2.200M1537 148.5v2.200M1539 149.2v2.200" stroke="#1010ff" stroke-width="1.3" fill="none"/>
<polyline points="62,404.2 65,404.5 67,404.3 70,404 73,403.8 75,403.2 78,402.7 81,401.7 83,400.2 86,398.8 89,396.9 91,394.9 94,393 97,391.4 99,389.4 102,387.9 105,386.2 107,385 110,384 113,383.1 115,382 118,381.8 121,381.1 123,380.3 126,379.9 129,378.8 131,377.1 134,375.3 137,372.9 139,371.3 142,369.8 145,368.5 147,367.6 150,366.8 153,365.6 155,364.2 158,363.3 161,362.1 163,362 166,363.1 169,364.2 171,366 174,366.8 177,367.2 179,367.1 182,366.1 185,365.3 187,364.7 190,365 193,364.6 195,364 198,363 201,361.1 203,359 206,356.5 209,353.7 211,350.5 214,346.8 217,343.4 219,340.4 222,337.5 225,334 227,330.7 230,327.7 233,324.8 235,321.8 238,319 241,317.1 243,315.8 246,315.2 249,315.5 251,316.5 254,317.4 257,318 259,319.2 262,321.1 265,322.6 267,324.1 270,326.4 273,328.8 275,330.3 278,332 281,333.5 283,334.8 286,335 289,335 291,334.8 294,334.1 297,333.3 299,332.8 302,331.7 305,329.8 307,327.7 310,325.6 313,322.9 315,319.8 318,316.8 321,314.7 323,312.6 326,310.2 329,307.7 331,304.9 334,302.2 337,299.5 339,296.3 342,293.2 345,289.7 347,286.5 350,282.3 353,276.9 355,269.2 358,261.4 361,254.2 363,247.7 366,241.5 369,234.4 371,227.8 374,221.7 377,215.9 379,211 382,207.2 385,205 387,204.3 390,206.8 393,209.8 395,212.4 398,214.4 401,215.5 403,217.2 406,218.9 409,221.3 411,222.9 414,223.8 417,222.2 419,219.7 422,215.8 425,210 427,204.3 430,198.2 433,191.9 435,186.7 438,181.6 441,176.5 443,170.8 446,165.4 449,160.4 451,157.3 454,155.8 457,155.3 459,155.6 462,154.8 465,154.3 467,153.7 470,152.5 473,151 475,148.9 478,146.6 481,143.1 483,140 486,136.2 489,131.2 491,126 494,120.9 497,117.4 499,113.2 502,110.7 505,109.6 507,109.3 510,110.5 513,112.8 515,116.8 518,121.1 521,126.3 523,132.3 526,139.7 529,146.8 531,153.2 534,159.7 537,164.8 539,168.1 542,171.5 545,173.9 547,176.1 550,177.7 553,179 555,179.1 558,177.8 561,175.5 563,173.4 566,171.3 569,170.4 571,170.1 574,170.3 577,170.3 579,169.8 582,168.1 585,167.4 587,165.7 590,164.5 593,164.1 595,163.4 598,161.6 601,160.1 603,157.2 606,153.9 609,151 611,148.4 614,146.8 617,146.6 619,145.1 622,143.5 625,142.2 627,141.8 630,142.3 633,143.7 635,145.3 638,147.2 641,149.5 643,151.3 646,152 649,151.7 651,150.8 654,151.3 657,152.2 659,152.4 662,151.3 665,149.2 667,146.8 670,143.5 673,140.3 675,137.7 678,135.7 681,134.7 683,134.7 686,134.9 689,134.9 691,135.9 694,138.2 697,141.7 699,146.1 702,151.6 705,157.7 707,163.3 710,169.3 713,174.9 715,181 718,187 721,193.3 723,198.8 726,203 729,205.4 731,207 734,207.7 737,206.9 739,206.3 742,206.3 745,205.7 747,204.4 750,202 753,199.2 755,195.9 758,193.5 761,192.5 763,192.2 766,192.5 769,193.8 771,195.6 774,197.2 777,198.5 779,199.2 782,200.1 785,200.5 787,200.6 790,199.8 793,198 795,196.2 798,195.3 801,194.3 803,192.6 806,190.2 809,188.1 811,185.8 814,183.4 817,181.1 819,179.7 822,178.3 825,177 827,175.8 830,173.5 833,170.7 835,168.1 838,165.8 841,164.5 843,163.3 846,162.2 849,161.9 851,162 854,162.3 857,162.5 859,163.7 862,164.9 865,166.8 867,168.6 870,169.2 873,169.6 875,170.1 878,169.7 881,169.4 883,169.1 886,167.6 889,165.4 891,163.3 894,160.3 897,157.7 899,154.5 902,151 905,149 907,148 910,146.7 913,146 915,145.6 918,144.8 921,144.5 923,144.3 926,144 929,144.6 931,145.1 934,145.7 937,147.1 939,147.5 942,146.3 945,145.1 947,143.9 950,142.4 953,141 955,140.1 958,139.3 961,139.2 963,138.9 966,139.4 969,140.6 971,142 974,142.9 977,144 979,145.4 982,146.3 985,147.3 987,148.9 990,150.4 993,152.5 995,153.4 998,154.7 1001,155.3 1003,154.9 1006,153.7 1009,153.3 1011,153.4 1014,153.3 1017,153.9 1019,154.5 1022,154.5 1025,154.3 1027,154.1 1030,154.1 1033,154 1035,153.9 1038,154.3 1041,155.5 1043,156.4 1046,156.6 1049,156.5 1051,156.3 1054,155.5 1057,155.2 1059,155.1 1062,154.2 1065,152.2 1067,148.9 1070,144.4 1073,139.3 1075,133.8 1078,128.5 1081,123.4 1083,118.8 1086,114.1 1089,109 1091,104.2 1094,99.9 1097,97.2 1099,97 1102,98.2 1105,100.4 1107,103.1 1110,105.5 1113,107.6 1115,109.9 1118,113.1 1121,116.6 1123,121.3 1126,126.5 1129,131.3 1131,135.1 1134,138.3 1137,140.3 1139,142.6 1142,144.5 1145,146 1147,148.1 1150,150.2 1153,151.8 1155,152.8 1158,153.9 1161,155 1163,155.5 1166,156.2 1169,157.2 1171,159.8 1174,162.2 1177,164.8 1179,168.3 1182,170.6 1185,173.3 1187,175.7 1190,178.7 1193,181 1195,182.7 1198,184.8 1201,186.8 1203,188.4 1206,189.3 1209,190.6 1211,191.7 1214,192.8 1217,194.3 1219,195.7 1222,197.7 1225,199.6 1227,202.5 1230,206 1233,209.5 1235,212.8 1238,215.5 1241,218.1 1243,220.4 1246,221.7 1249,222.7 1251,223.1 1254,223.1 1257,222.4 1259,221.6 1262,219.4 1265,216.4 1267,212.5 1270,209.1 1273,205.9 1275,202.8 1278,200 1281,198.7 1283,196.6 1286,196 1289,196.6 1291,197.5 1294,198.1 1297,198.7 1299,199.4 1302,200.6 1305,201.1 1307,201 1310,200.5 1313,199.5 1315,198.1 1318,198.1 1321,197.5 1323,196.2 1326,194.9 1329,193.1 1331,192.1 1334,191.4 1337,190.1 1339,189.3 1342,188.7 1345,189 1347,189.9 1350,191.2 1353,192.5 1355,193.2 1358,193.4 1361,193 1363,193.1 1366,192.4 1369,191.2 1371,190.5 1374,190.4 1377,191.1 1379,191.4 1382,190 1385,188.6 1387,186.9 1390,184.7 1393,182.3 1395,180.6 1398,180 1401,179.4 1403,179.4 1406,179.3 1409,177.6 1411,175.2 1414,171.7 1417,168.5 1419,164.6 1422,159.8 1425,155 1427,150.6 1430,146.2 1433,141.4 1435,138 1438,134.9 1441,132 1443,129.8 1446,127.3 1449,125.7 1451,124.7 1454,124.8 1457,125.5 1459,126.8 1462,129.1 1465,131.4 1467,133.7 1470,134.8 1473,135 1475,135 1478,134.7 1481,134.3 1483,133.6 1486,133.1 1489,132.5 1491,131.9 1494,132.1 1497,132.2 1499,131.4 1502,129.9 1505,128.6 1507,127.6 1510,126.9 1513,126.4 1515,126.4 1518,128.3 1521,131 1523,133.5 1526,136.1 1529,137.5 1531,138.8 1534,140.2 1537,141.9 1539,143.4 1542,144.2" fill="none" stroke="#ffffff" stroke-width="1" />
</g>
<defs><g id="ga"><path d="M-3 -5.500H3V-0.500H5.300L0 5.500L-5.300 -0.500H-3Z" fill="#0f7f35"/><path d="M-3 -5H3M-4.600 0L-0.300 4.600" stroke="#58c028" stroke-width="1" fill="none"/></g><g id="oa"><path d="M-3 5.500H3V0.500H5.300L0 -5.500L-5.300 0.500H-3Z" fill="#ff4a10"/><path d="M-1.800 5V0.500M-4.300 0.300L0 -4.500" stroke="#ff9a18" stroke-width="1.3" fill="none"/></g><g id="sm"><circle r="6.6" fill="#fff" stroke="#ff0000" stroke-width="1.3"/><rect x="-3.2" y="-3" width="1.8" height="1.8" fill="#ff0000"/><rect x="1.4" y="-3" width="1.8" height="1.8" fill="#ff0000"/><path d="M-3.6 1.2Q0 5.2 3.6 1.2" stroke="#ff0000" stroke-width="1.1" fill="none"/></g></defs>
<g shape-rendering="crispEdges"><line x1="62" y1="550.5" x2="1543" y2="550.5" stroke="#00ffff"/></g>
<path d="M488.7 550L491.4 443L494.1 550" stroke="#00ffff" fill="none" stroke-width="1.1"/>
<rect x="489.9" y="550" width="3" height="1" fill="#ff0000"/>
<path d="M718.3 550L721 443L723.7 550" stroke="#ff0000" fill="none" stroke-width="1.1"/>
<path d="M1069.3 550L1072 443L1074.7 550" stroke="#00ffff" fill="none" stroke-width="1.1"/>
<rect x="1070.5" y="550" width="3" height="1" fill="#ff0000"/>
<path d="M1233.3 550L1236 443L1238.7 550" stroke="#ff0000" fill="none" stroke-width="1.1"/>
<path d="M1427.3 550L1430 443L1432.7 550" stroke="#00ffff" fill="none" stroke-width="1.1"/>
<rect x="1428.5" y="550" width="3" height="1" fill="#ff0000"/>
<g shape-rendering="crispEdges" fill="none">
<path d="M62 614V638M65 614V638M67 614V638M70 614V638M73 614V638M75 614V638M78 614V638M81 614V638M83 614V638M86 614V638M89 614V638M91 614V638M94 614V638M97 614V638M99 614V638M102 614V638M105 614V638M107 614V638M110 614V638M113 614V638M115 614V638M118 614V638M121 614V638M123 614V638M126 614V638M129 614V638M131 614V638M134 614V638M137 614V638M139 614V638M142 614V638M145 614V638M147 614V638M150 614V638M153 614V638M155 614V638M158 614V638M161 614V638M163 614V638M166 614V638M169 614V638M171 614V638M174 614V638M177 614V638M179 614V638M182 614V638M185 614V638M187 614V638M190 614V638M193 614V638M195 614V638M198 614V638M201 614V638M203 614V638M206 614V638M209 614V638M211 614V638M214 614V638M217 614V638M219 614V638M222 614V638M225 614V638M227 614V638M230 614V638M233 614V638M235 614V638M238 614V638M241 614V638M243 614V638M246 614V638M249 614V638M251 614V638M254 614V638M257 614V638M259 614V638M262 614V638M265 614V638M267 614V638M270 614V638M273 614V638M275 614V638M278 614V638M281 614V638M283 614V638M286 614V638M289 614V638M291 614V638M294 614V638M297 614V638M299 614V638M302 614V638M305 614V638M307 614V638M310 614V638M313 614V638M315 614V638M318 614V638M321 614V638M323 614V638M326 614V638M329 614V638M331 614V638M334 614V638M337 614V638M339 614V638M342 614V638M345 614V638M347 614V638M350 614V638M353 614V638M355 614V638M358 614V638M361 614V638M363 614V638M366 614V638M369 614V638M371 614V638M374 614V638M377 614V638M379 614V638M382 614V638M385 614V638M387 614V638M390 614V638M393 614V638M395 614V638M398 614V638M401 614V638M403 614V638M406 614V638M409 614V638M411 614V638M414 614V638M417 614V638M419 614V638M422 614V638M425 614V638M427 614V638M430 614V638M433 614V638M435 614V638M438 614V638M441 614V638M443 614V638M446 614V638M449 614V638M451 614V638M454 614V638M457 614V638M459 614V638M462 614V638M465 614V638M467 614V638M470 614V638M473 614V638M475 614V638M478 614V638M481 614V638M483 614V638M486 614V638M489 614V638M491 614V638M494 614V638M497 614V638M499 614V638M502 614V638M505 614V638M507 614V638M510 614V638M513 614V638M515 614V638M518 614V638M521 614V638M523 614V638M526 614V638M529 614V638M531 614V638M534 614V638M537 614V638M539 614V638M542 614V638M545 614V638M547 614V638M550 614V638M553 614V638M555 614V638M558 614V638M561 614V638M563 614V638M566 614V638M569 614V638M571 614V638M574 614V638M577 614V638M579 614V638M582 614V638M585 614V638M587 614V638M590 614V638M593 614V638M595 614V638M598 614V638M601 614V638M603 614V638M606 614V638M609 614V638M611 614V638M614 614V638M617 614V638M619 614V638M622 614V638M625 614V638M627 614V638M630 614V638M633 614V638M635 614V638M638 614V638M641 614V638M643 614V638M646 614V638M649 614V638M651 614V638M654 614V638M657 614V638M659 614V638M662 614V638M665 614V638M667 614V638M670 614V638M673 614V638M675 614V638M678 614V638M681 614V638M683 614V638M686 614V638M689 614V638M691 614V638M694 614V638M697 614V638M699 614V638M702 614V638M705 614V638M707 614V638M710 614V638M713 614V638M715 614V638M718 614V638M721 614V638M723 614V638M726 614V638M729 614V638M731 614V638M734 614V638M737 614V638M739 614V638M742 614V638M745 614V638M747 614V638M750 614V638M753 614V638M755 614V638M758 614V638M761 614V638M763 614V638M766 614V638M769 614V638M771 614V638M774 614V638M777 614V638M779 614V638M782 614V638M785 614V638M787 614V638M790 614V638M793 614V638M795 614V638M798 614V638M801 614V638M803 614V638M806 614V638M809 614V638M811 614V638M814 614V638M817 614V638M819 614V638M822 614V638M825 614V638M827 614V638M830 614V638M833 614V638M835 614V638M838 614V638M841 614V638M843 614V638M846 614V638M849 614V638M851 614V638M854 614V638M857 614V638M859 614V638M862 614V638M865 614V638M867 614V638M870 614V638M873 614V638M875 614V638M878 614V638M881 614V638M883 614V638M886 614V638M889 614V638M891 614V638M894 614V638M897 614V638M899 614V638M902 614V638M905 614V638M907 614V638M910 614V638M913 614V638M915 614V638M918 614V638M921 614V638M923 614V638M926 614V638M929 614V638M931 614V638M934 614V638M937 614V638M939 614V638M942 614V638M945 614V638M947 614V638M950 614V638M953 614V638M955 614V638M958 614V638M961 614V638M963 614V638M966 614V638M969 614V638M971 614V638M974 614V638M977 614V638M979 614V638M982 614V638M985 614V638M987 614V638M990 614V638M993 614V638M995 614V638M998 614V638M1001 614V638M1003 614V638M1006 614V638M1009 614V638M1011 614V638M1014 614V638M1017 614V638M1019 614V638M1022 614V638M1025 614V638M1027 614V638M1030 614V638M1033 614V638M1035 614V638M1038 614V638M1041 614V638M1043 614V638M1046 614V638M1049 614V638M1051 614V638M1054 614V638M1057 614V638M1059 614V638M1062 614V638M1065 614V638M1067 614V638M1070 614V638M1073 614V638M1075 614V638M1078 614V638M1081 614V638M1083 614V638M1086 614V638M1089 614V638M1091 614V638M1094 614V638M1097 614V638M1099 614V638M1102 614V638M1105 614V638M1107 614V638M1110 614V638M1113 614V638M1115 614V638M1118 614V638M1121 614V638M1123 614V638M1126 614V638M1129 614V638M1131 614V638M1134 614V638M1137 614V638M1139 614V638M1142 614V638M1145 614V638M1147 614V638M1150 614V638M1153 614V638M1155 614V638M1158 614V638M1161 614V638M1163 614V638M1166 614V638M1169 614V638M1171 614V638M1174 614V638M1177 614V638M1179 614V638M1182 614V638M1185 614V638M1187 614V638M1190 614V638M1193 614V638M1195 614V638M1198 614V638M1201 614V638M1203 614V638M1206 614V638M1209 614V638M1211 614V638M1214 614V638M1217 614V638M1219 614V638M1222 614V638M1225 614V638M1227 614V638M1230 614V638M1233 614V638M1235 614V638M1238 614V638M1241 614V638M1243 614V638M1246 614V638M1249 614V638M1251 614V638M1254 614V638M1257 614V638M1259 614V638M1262 614V638M1265 614V638M1267 614V638M1270 614V638M1273 614V638M1275 614V638M1278 614V638M1281 614V638M1283 614V638M1286 614V638M1289 614V638M1291 614V638M1294 614V638M1297 614V638M1299 614V638M1302 614V638M1305 614V638M1307 614V638M1310 614V638M1313 614V638M1315 614V638M1318 614V638M1321 614V638M1323 614V638M1326 614V638M1329 614V638M1331 614V638M1334 614V638M1337 614V638M1339 614V638M1342 614V638M1345 614V638M1347 614V638M1350 614V638M1353 614V638M1355 614V638M1358 614V638M1361 614V638M1363 614V638M1366 614V638M1369 614V638M1371 614V638M1374 614V638M1377 614V638M1379 614V638M1382 614V638M1385 614V638M1387 614V638M1390 614V638M1393 614V638M1395 614V638M1398 614V638M1401 614V638M1403 614V638M1406 614V638M1409 614V638M1411 614V638M1414 614V638M1417 614V638M1419 614V638M1422 614V638M1425 614V638M1427 614V638M1430 614V638M1433 614V638M1435 614V638M1438 614V638M1441 614V638M1443 614V638M1446 614V638M1449 614V638M1451 614V638M1454 614V638M1457 614V638M1459 614V638M1462 614V638M1465 614V638M1467 614V638M1470 614V638M1473 614V638M1475 614V638M1478 614V638M1481 614V638M1483 614V638M1486 614V638M1489 614V638M1491 614V638M1494 614V638M1497 614V638M1499 614V638M1502 614V638M1505 614V638M1507 614V638M1510 614V638M1513 614V638M1515 614V638M1518 614V638M1521 614V638M1523 614V638M1526 614V638M1529 614V638M1531 614V638M1534 614V638M1537 614V638M1539 614V638M1542 614V638" stroke="#999999" stroke-width="2"/>
<line x1="62" y1="637.5" x2="1543" y2="637.5" stroke="#900000" stroke-dasharray="1 7"/>
<path d="M62.5 639V643M65.5 634V641M67.5 630V638M70.5 625V635M73.5 619V631M75.5 616V627M78.5 609V623M81.5 600V617M83.5 594V611M86.5 586V605M89.5 584V600M91.5 582V595M94.5 586V593M97.5 590V592M118.5 601V603M121.5 594V600M123.5 589V597M126.5 587V595M129.5 585V592M131.5 584V590M134.5 583V588M137.5 582V587M158.5 599V604M161.5 603V605M182.5 613V615M185.5 609V613M187.5 606V612M190.5 602V609M193.5 598V606M195.5 596V604M198.5 593V601M201.5 590V598M203.5 588V596M206.5 585V593M209.5 582V590M211.5 580V588M214.5 580V586M217.5 580V584M219.5 580V583M222.5 580V582M225.5 580V582M227.5 580V582M230.5 580V582M233.5 580V582M235.5 580V582M286.5 650V652M289.5 644V649M291.5 640V646M294.5 634V643M297.5 630V640M299.5 628V637M302.5 624V634M305.5 614V629M307.5 605V623M310.5 595V616M313.5 587V609M315.5 587V603M318.5 586V599M321.5 586V596M323.5 586V593M326.5 585V591M329.5 585V590M331.5 584V588M334.5 581V587M337.5 579V585M339.5 578V583M342.5 576V581M345.5 575V580M347.5 574V578M350.5 572V577M353.5 571V575M355.5 572V574M358.5 574V576M417.5 602V607M419.5 597V605M422.5 590V601M425.5 584V597M427.5 583V594M430.5 582V591M433.5 581V588M435.5 580V586M438.5 579V584M441.5 578V583M443.5 578V582M446.5 576V580M449.5 580V582M465.5 586V588M467.5 584V586M470.5 581V585M473.5 578V583M475.5 578V582M478.5 577V581M481.5 576V579M483.5 576V579M486.5 575V578M489.5 575V577M537.5 662V664M539.5 661V663M542.5 661V663M545.5 660V662M547.5 660V662M550.5 660V662M553.5 660V662M555.5 660V662M558.5 656V659M561.5 651V657M563.5 647V655M566.5 642V651M569.5 641V649M571.5 640V646M574.5 639V645M577.5 635V642M579.5 626V638M582.5 611V631M585.5 600V624M587.5 596V617M590.5 591V610M593.5 586V604M595.5 583V599M598.5 581V594M601.5 578V590M603.5 576V587M606.5 576V584M609.5 579V583M611.5 582V584M651.5 621V624M654.5 614V621M657.5 609V618M659.5 607V615M662.5 602V612M665.5 598V609M667.5 596V605M670.5 591V602M673.5 590V599M675.5 592V597M678.5 596V598M723.5 672V674M726.5 669V671M729.5 666V670M731.5 664V668M734.5 658V666M737.5 652V662M739.5 648V659M742.5 643V655M745.5 638V651M747.5 635V647M750.5 630V643M753.5 626V638M755.5 623V634M758.5 618V630M761.5 616V627M763.5 619V625M766.5 623V625M777.5 626V628M779.5 623V626M782.5 619V624M785.5 609V620M787.5 600V615M790.5 591V609M793.5 594V605M795.5 597V603M798.5 602V604M811.5 608V610M814.5 605V607M817.5 603V606M819.5 602V605M822.5 595V602M825.5 588V599M827.5 584V595M830.5 586V593M833.5 589V592M835.5 591V593M881.5 616V618M883.5 614V617M886.5 609V615M889.5 604V612M891.5 600V609M894.5 595V605M897.5 591V602M899.5 589V599M902.5 592V597M905.5 595V597M929.5 616V618M931.5 614V616M934.5 612V615M937.5 611V614M939.5 610V613M942.5 610V612M945.5 609V611M947.5 608V611M950.5 606V610M953.5 604V608M955.5 603V607M958.5 600V605M961.5 605V607M990.5 640V642M993.5 635V640M995.5 633V638M998.5 633V637M1001.5 633V636M1003.5 633V635M1006.5 635V637M1022.5 644V646M1025.5 639V643M1027.5 634V641M1030.5 628V638M1033.5 630V636M1035.5 634V636M1051.5 640V643M1054.5 622V638M1057.5 616V633M1059.5 612V627M1062.5 606V622M1065.5 600V617M1067.5 595V611M1070.5 591V606M1073.5 595V603M1075.5 597V602M1078.5 601V603M1142.5 664V666M1145.5 664V666M1147.5 664V666M1150.5 665V667M1153.5 665V667M1179.5 669V671M1182.5 668V670M1185.5 667V669M1187.5 666V668M1190.5 665V667M1193.5 664V666M1195.5 664V666M1198.5 664V666M1201.5 664V666M1203.5 664V666M1241.5 672V675M1243.5 662V672M1246.5 651V667M1249.5 644V661M1251.5 639V655M1254.5 632V649M1257.5 624V643M1259.5 618V637M1262.5 612V631M1265.5 608V625M1267.5 605V620M1270.5 606V616M1273.5 610V615M1275.5 608V613M1278.5 603V611M1281.5 602V608M1283.5 605V607M1302.5 619V621M1305.5 608V617M1307.5 601V613M1310.5 597V609M1313.5 594V605M1315.5 596V603M1339.5 614V616M1342.5 613V615M1345.5 612V614M1347.5 611V613M1363.5 618V623M1366.5 610V620M1369.5 605V616M1371.5 608V614M1374.5 612V614M1382.5 610V615M1385.5 608V613M1387.5 606V611M1390.5 604V609M1393.5 605V608M1395.5 605V607M1409.5 607V610M1411.5 602V608M1414.5 594V605M1417.5 587V600M1419.5 583V596M1422.5 577V591M1425.5 577V588M1427.5 576V585M1430.5 580V584M1481.5 616V618M1483.5 612V617M1486.5 608V615M1489.5 608V613M1513.5 631V633M1539.5 654V658M1542.5 649V655" stroke="#ff20ff"/><path d="M99.5 590V592M102.5 593V596M105.5 595V600M107.5 596V601M110.5 598V603M113.5 600V605M115.5 602V607M139.5 586V588M142.5 590V598M145.5 594V605M147.5 597V608M150.5 601V613M153.5 605V616M155.5 606V609M163.5 604V606M166.5 606V610M169.5 608V614M171.5 610V616M174.5 612V620M177.5 615V621M179.5 616V618M238.5 582V586M241.5 584V592M243.5 587V594M246.5 589V598M249.5 592V601M251.5 595V603M254.5 598V607M257.5 602V614M259.5 606V619M262.5 611V626M265.5 617V633M267.5 622V638M270.5 628V645M273.5 634V652M275.5 639V654M278.5 644V658M281.5 648V662M283.5 650V657M361.5 574V576M363.5 575V577M366.5 575V577M369.5 575V577M371.5 576V578M374.5 577V580M377.5 578V582M379.5 579V583M382.5 581V587M385.5 584V593M387.5 588V597M390.5 591V603M393.5 596V609M395.5 600V613M398.5 603V613M401.5 605V610M403.5 606V608M406.5 607V609M409.5 608V611M411.5 609V612M414.5 608V610M451.5 581V585M454.5 584V592M457.5 586V593M459.5 588V591M462.5 586V588M491.5 576V578M494.5 579V584M497.5 582V593M499.5 587V599M502.5 592V608M505.5 598V618M507.5 605V625M510.5 613V635M513.5 621V646M515.5 629V652M518.5 636V657M521.5 643V663M523.5 649V667M526.5 655V672M529.5 660V675M531.5 663V672M534.5 664V667M614.5 584V588M617.5 587V598M619.5 590V597M622.5 591V596M625.5 592V594M627.5 594V598M630.5 597V608M633.5 602V617M635.5 607V621M638.5 612V627M641.5 617V633M643.5 622V637M646.5 625V632M649.5 624V626M681.5 598V600M683.5 599V602M686.5 603V614M689.5 609V628M691.5 616V638M694.5 625V653M697.5 635V663M699.5 643V668M702.5 651V674M705.5 657V674M707.5 661V675M710.5 665V675M713.5 667V676M715.5 670V676M718.5 671V676M721.5 672V674M769.5 625V627M771.5 626V630M774.5 627V631M801.5 604V608M803.5 606V612M806.5 607V611M809.5 607V609M838.5 592V594M841.5 594V597M843.5 595V599M846.5 597V602M849.5 599V605M851.5 601V607M854.5 603V609M857.5 605V609M859.5 606V609M862.5 607V612M865.5 610V617M867.5 612V620M870.5 616V625M873.5 618V624M875.5 619V622M878.5 617V619M907.5 597V600M910.5 600V608M913.5 604V616M915.5 607V618M918.5 611V621M921.5 614V624M923.5 616V624M926.5 617V620M963.5 606V608M966.5 609V618M969.5 614V629M971.5 619V635M974.5 625V643M977.5 632V651M979.5 637V652M982.5 640V650M985.5 642V647M987.5 643V645M1009.5 636V641M1011.5 639V645M1014.5 642V651M1017.5 644V650M1019.5 645V648M1038.5 636V639M1041.5 638V643M1043.5 640V646M1046.5 642V649M1049.5 645V652M1081.5 600V602M1083.5 601V603M1086.5 603V605M1089.5 604V606M1091.5 605V607M1094.5 606V609M1097.5 608V616M1099.5 612V622M1102.5 616V628M1105.5 620V633M1107.5 624V636M1110.5 628V641M1113.5 632V645M1115.5 636V648M1118.5 640V652M1121.5 645V657M1123.5 649V661M1126.5 653V666M1129.5 658V671M1131.5 662V673M1134.5 665V676M1137.5 667V671M1139.5 666V668M1155.5 663V665M1158.5 664V666M1161.5 664V666M1163.5 665V667M1166.5 666V668M1169.5 667V670M1171.5 668V670M1174.5 669V671M1177.5 667V669M1206.5 663V665M1209.5 665V667M1211.5 666V669M1214.5 667V670M1217.5 668V672M1219.5 670V673M1222.5 671V675M1225.5 672V677M1227.5 674V678M1230.5 675V678M1233.5 675V677M1235.5 675V677M1238.5 675V677M1286.5 607V609M1289.5 610V616M1291.5 613V621M1294.5 616V627M1297.5 619V625M1299.5 620V624M1318.5 602V604M1321.5 605V612M1323.5 608V616M1326.5 611V619M1329.5 613V618M1331.5 614V617M1334.5 614V616M1337.5 613V615M1350.5 615V622M1353.5 619V629M1355.5 622V632M1358.5 624V630M1361.5 623V625M1377.5 615V620M1379.5 616V620M1398.5 605V607M1401.5 609V613M1403.5 611V616M1406.5 610V612M1433.5 583V585M1435.5 586V593M1438.5 591V604M1441.5 595V607M1443.5 598V610M1446.5 601V609M1449.5 602V606M1451.5 602V604M1454.5 601V603M1457.5 604V607M1459.5 605V609M1462.5 607V612M1465.5 609V617M1467.5 612V620M1470.5 615V623M1473.5 618V626M1475.5 619V623M1478.5 618V620M1491.5 611V613M1494.5 615V621M1497.5 619V629M1499.5 622V634M1502.5 626V636M1505.5 629V638M1507.5 630V636M1510.5 630V632M1515.5 632V635M1518.5 636V648M1521.5 642V660M1523.5 647V664M1526.5 652V665M1529.5 655V664M1531.5 657V664M1534.5 658V663M1537.5 657V659" stroke="#70ffff"/>
<path d="M83.5 631V641M86.5 628V640M89.5 621V638M91.5 617V636M94.5 611V634M97.5 610V631M99.5 609V629M102.5 608V627M105.5 606V625M107.5 606V623M110.5 604V621M113.5 602V619M115.5 600V617M118.5 597V615M121.5 595V613M123.5 593V611M126.5 590V609M129.5 588V607M131.5 587V605M134.5 585V603M137.5 583V601M139.5 585V599M142.5 587V598M145.5 590V597M147.5 591V597M150.5 592V596M153.5 591V596M155.5 591V595M158.5 591V595M161.5 590V594M163.5 593V595M187.5 597V599M190.5 593V598M193.5 590V597M195.5 588V596M198.5 586V595M201.5 584V594M203.5 583V593M206.5 581V592M209.5 580V590M211.5 578V589M214.5 578V588M217.5 578V587M219.5 579V586M222.5 579V586M225.5 580V585M227.5 580V584M230.5 580V584M233.5 579V584M235.5 579V583M238.5 583V585M305.5 604V609M307.5 598V608M310.5 589V606M313.5 589V604M315.5 588V603M318.5 587V601M321.5 586V600M323.5 585V598M326.5 583V597M329.5 581V595M331.5 580V593M334.5 578V592M337.5 576V590M339.5 575V589M342.5 574V587M345.5 573V586M347.5 572V584M350.5 571V583M353.5 570V582M355.5 571V581M358.5 573V580M361.5 575V579M363.5 576V579M366.5 576V579M369.5 577V579M371.5 578V580M417.5 588V590M419.5 585V590M422.5 581V589M425.5 580V588M427.5 579V587M430.5 578V586M433.5 577V585M435.5 576V584M438.5 575V583M441.5 573V582M443.5 574V581M446.5 576V581M449.5 578V581M451.5 579V581M462.5 581V583M465.5 579V581M467.5 578V580M470.5 577V580M473.5 576V580M475.5 576V579M478.5 575V579M481.5 574V578M483.5 574V578M486.5 574V577M489.5 574V577M593.5 648V650M595.5 646V649M598.5 642V648M601.5 639V647M603.5 637V646M606.5 636V645M609.5 634V644M611.5 633V643M614.5 632V642M617.5 630V641M619.5 629V640M622.5 628V638M625.5 626V637M627.5 625V636M630.5 623V635M633.5 620V633M635.5 618V632M638.5 615V630M641.5 612V628M643.5 610V626M646.5 607V625M649.5 605V623M651.5 603V621M654.5 600V618M657.5 598V616M659.5 596V614M662.5 594V612M665.5 592V610M667.5 591V608M670.5 589V607M673.5 589V605M675.5 591V603M678.5 594V602M681.5 598V602M683.5 601V603M742.5 648V650M745.5 646V649M747.5 645V648M750.5 643V648M753.5 641V647M755.5 640V646M758.5 640V646M761.5 643V645M763.5 645V647M785.5 648V650M787.5 646V648M790.5 642V647M793.5 638V646M795.5 637V646M798.5 635V644M801.5 633V643M803.5 631V642M806.5 629V641M809.5 627V639M811.5 624V638M814.5 618V636M817.5 613V634M819.5 609V631M822.5 603V628M825.5 597V625M827.5 593V622M830.5 592V619M833.5 591V616M835.5 591V614M838.5 592V612M841.5 593V610M843.5 594V608M846.5 595V607M849.5 595V606M851.5 596V605M854.5 597V604M857.5 598V603M859.5 599V603M862.5 601V603M878.5 602V604M881.5 600V603M883.5 598V603M886.5 595V602M889.5 592V601M891.5 590V600M894.5 587V599M897.5 584V597M899.5 581V595M902.5 583V594M905.5 589V594M907.5 593V595M950.5 602V604M953.5 602V604M955.5 600V602M958.5 600V602M1054.5 642V644M1057.5 640V642M1059.5 639V642M1062.5 637V642M1065.5 626V640M1067.5 619V638M1070.5 611V635M1073.5 610V633M1075.5 610V630M1078.5 609V628M1081.5 608V626M1083.5 608V624M1086.5 609V623M1089.5 609V621M1091.5 609V620M1094.5 612V619M1097.5 618V620M1243.5 674V676M1246.5 669V674M1249.5 664V673M1251.5 661V672M1254.5 657V671M1257.5 654V669M1259.5 652V667M1262.5 649V665M1265.5 646V664M1267.5 645V662M1270.5 643V660M1273.5 640V658M1275.5 639V656M1278.5 636V654M1281.5 634V652M1283.5 632V650M1286.5 630V648M1289.5 631V646M1291.5 632V645M1294.5 634V644M1297.5 635V643M1299.5 634V642M1302.5 629V641M1305.5 616V638M1307.5 608V635M1310.5 602V632M1313.5 598V628M1315.5 597V625M1318.5 598V623M1321.5 601V620M1323.5 603V619M1326.5 604V617M1329.5 602V616M1331.5 601V614M1334.5 599V613M1337.5 598V611M1339.5 598V610M1342.5 597V609M1345.5 599V608M1347.5 602V607M1350.5 606V608M1361.5 607V609M1363.5 603V607M1366.5 599V606M1369.5 597V605M1371.5 599V604M1374.5 604V606M1382.5 604V606M1385.5 602V605M1387.5 600V604M1390.5 598V604M1393.5 596V603M1395.5 599V603M1409.5 601V603M1411.5 597V603M1414.5 592V602M1417.5 587V600M1419.5 584V598M1422.5 580V597M1425.5 579V595M1427.5 578V593M1430.5 583V592M1433.5 587V592M1435.5 590V592M1481.5 601V603M1483.5 598V601M1486.5 596V600M1489.5 595V600M1491.5 596V599M1494.5 598V600" stroke="#ff0000"/><path d="M166.5 594V596M169.5 595V599M171.5 596V602M174.5 596V605M177.5 597V604M179.5 598V603M182.5 598V601M185.5 597V599M241.5 583V587M243.5 584V588M246.5 584V590M249.5 585V591M251.5 586V592M254.5 587V594M257.5 588V598M259.5 589V600M262.5 591V604M265.5 592V607M267.5 594V609M270.5 596V612M273.5 598V615M275.5 599V617M278.5 601V619M281.5 603V621M283.5 605V620M286.5 606V618M289.5 607V616M291.5 608V615M294.5 609V614M297.5 609V613M299.5 609V613M302.5 608V610M374.5 578V580M377.5 579V582M379.5 579V584M382.5 580V586M385.5 581V588M387.5 582V590M390.5 583V593M393.5 584V595M395.5 585V597M398.5 587V597M401.5 588V597M403.5 589V596M406.5 589V596M409.5 590V595M411.5 590V595M414.5 590V592M454.5 579V581M457.5 581V584M459.5 580V582M491.5 576V578M494.5 578V584M497.5 579V588M499.5 580V591M502.5 582V596M505.5 584V601M507.5 586V604M510.5 588V609M513.5 591V614M515.5 593V618M518.5 596V622M521.5 599V627M523.5 602V630M526.5 605V634M529.5 609V638M531.5 612V640M534.5 615V644M537.5 618V647M539.5 621V648M542.5 624V650M545.5 627V652M547.5 630V653M550.5 632V655M553.5 635V656M555.5 637V656M558.5 639V657M561.5 641V657M563.5 642V657M566.5 644V656M569.5 645V656M571.5 646V655M574.5 647V655M577.5 647V654M579.5 648V654M582.5 649V653M585.5 649V652M587.5 649V651M590.5 648V650M686.5 603V608M689.5 604V614M691.5 605V617M694.5 607V622M697.5 609V626M699.5 611V630M702.5 613V636M705.5 616V642M707.5 619V646M710.5 622V652M713.5 626V658M715.5 629V662M718.5 633V665M721.5 636V667M723.5 640V669M726.5 643V671M729.5 645V666M731.5 647V663M734.5 648V658M737.5 649V654M739.5 649V652M766.5 645V647M769.5 646V649M771.5 646V650M774.5 647V652M777.5 648V652M779.5 648V652M782.5 648V651M865.5 603V605M867.5 603V605M870.5 603V605M873.5 602V604M875.5 602V604M910.5 594V598M913.5 595V602M915.5 596V604M918.5 597V605M921.5 598V607M923.5 599V608M926.5 600V607M929.5 600V607M931.5 601V607M934.5 602V606M937.5 602V606M939.5 602V605M942.5 602V604M945.5 602V604M947.5 601V603M961.5 602V605M963.5 603V608M966.5 604V614M969.5 606V621M971.5 608V625M974.5 610V627M977.5 612V629M979.5 613V631M982.5 615V630M985.5 617V629M987.5 618V628M990.5 619V627M993.5 620V628M995.5 620V628M998.5 621V628M1001.5 622V630M1003.5 623V632M1006.5 624V634M1009.5 625V637M1011.5 627V638M1014.5 628V640M1017.5 629V642M1019.5 631V643M1022.5 632V643M1025.5 633V641M1027.5 634V640M1030.5 634V638M1033.5 635V641M1035.5 636V643M1038.5 637V647M1041.5 638V651M1043.5 640V652M1046.5 641V653M1049.5 642V654M1051.5 643V649M1099.5 619V621M1102.5 620V624M1105.5 621V627M1107.5 621V629M1110.5 622V632M1113.5 624V635M1115.5 625V637M1118.5 627V640M1121.5 628V643M1123.5 630V645M1126.5 632V649M1129.5 634V652M1131.5 636V655M1134.5 638V658M1137.5 640V660M1139.5 642V661M1142.5 644V662M1145.5 646V664M1147.5 648V665M1150.5 650V665M1153.5 652V666M1155.5 653V666M1158.5 654V667M1161.5 656V667M1163.5 657V667M1166.5 658V668M1169.5 659V668M1171.5 660V669M1174.5 661V669M1177.5 662V669M1179.5 662V669M1182.5 663V670M1185.5 664V670M1187.5 664V670M1190.5 665V670M1193.5 666V671M1195.5 666V671M1198.5 667V671M1201.5 667V672M1203.5 668V672M1206.5 668V673M1209.5 669V674M1211.5 669V674M1214.5 670V675M1217.5 670V675M1219.5 671V676M1222.5 671V677M1225.5 672V677M1227.5 673V678M1230.5 673V678M1233.5 674V678M1235.5 674V679M1238.5 675V679M1241.5 675V677M1353.5 606V608M1355.5 607V609M1358.5 606V608M1377.5 605V608M1379.5 605V608M1398.5 601V603M1401.5 603V605M1403.5 603V607M1406.5 602V604M1438.5 592V594M1441.5 592V598M1443.5 593V601M1446.5 594V601M1449.5 595V600M1451.5 595V599M1454.5 595V600M1457.5 596V600M1459.5 596V601M1462.5 597V602M1465.5 598V604M1467.5 598V605M1470.5 599V607M1473.5 600V607M1475.5 601V606M1478.5 601V605M1497.5 599V601M1499.5 600V602M1502.5 600V604M1505.5 601V605M1507.5 601V606M1510.5 602V608M1513.5 603V610M1515.5 603V611M1518.5 604V613M1521.5 606V617M1523.5 607V620M1526.5 609V624M1529.5 611V628M1531.5 613V631M1534.5 615V634M1537.5 617V636M1539.5 619V637M1542.5 621V638" stroke="#2ca02c"/>
<line x1="62" y1="578.5" x2="1543" y2="578.5" stroke="#ffff00" />
<line x1="62" y1="673.5" x2="1543" y2="673.5" stroke="#ffffff" />
</g>
<clipPath id="ck"><rect x="62" y="554" width="1595" height="126"/></clipPath><g clip-path="url(#ck)">
<use href="#sm" x="69" y="652"/>
<use href="#sm" x="81" y="646"/>
<use href="#sm" x="293" y="659"/>
<use href="#sm" x="541" y="672"/>
<use href="#sm" x="653" y="646"/>
<use href="#sm" x="730" y="676"/>
<use href="#sm" x="784" y="644"/>
<use href="#sm" x="885" y="638"/>
<use href="#sm" x="994" y="654"/>
<use href="#sm" x="1029" y="658"/>
<use href="#sm" x="1056" y="657"/>
<use href="#sm" x="1149" y="669.5"/>
<use href="#sm" x="1161.5" y="667"/>
<use href="#sm" x="1168" y="671.5"/>
<use href="#sm" x="1184" y="674.6"/>
<use href="#sm" x="1191.4" y="676"/>
<use href="#sm" x="1207.6" y="670"/>
<use href="#sm" x="1220.5" y="672.5"/>
<use href="#sm" x="1248" y="676"/>
<use href="#sm" x="1308" y="637"/>
<use href="#sm" x="1368" y="644"/>
<use href="#sm" x="1485" y="639"/>
<use href="#sm" x="1520" y="645"/>
<use href="#sm" x="1546" y="664"/>
</g>
<g shape-rendering="crispEdges" fill="none">
<path d="M83.5 763V764.5M86.5 760V764.5M89.5 757V764.5M91.5 756V764.5M94.5 754V764.5M97.5 753V764.5M99.5 753V764.5M102.5 753V764.5M105.5 754V764.5M107.5 754V764.5M110.5 755V764.5M113.5 756V764.5M115.5 756V764.5M118.5 755V764.5M121.5 755V764.5M123.5 754V764.5M126.5 754V764.5M129.5 753V764.5M131.5 751V764.5M134.5 749V764.5M137.5 748V764.5M139.5 748V764.5M142.5 748V764.5M145.5 749V764.5M147.5 750V764.5M150.5 750V764.5M153.5 751V764.5M155.5 751V764.5M158.5 752V764.5M161.5 753V764.5M163.5 753V764.5M166.5 754V764.5M169.5 755V764.5M171.5 756V764.5M174.5 757V764.5M177.5 757V764.5M179.5 758V764.5M182.5 759V764.5M185.5 758V764.5M187.5 757V764.5M190.5 756V764.5M193.5 754V764.5M195.5 754V764.5M198.5 752V764.5M201.5 751V764.5M203.5 750V764.5M206.5 747V764.5M209.5 744V764.5M211.5 742V764.5M214.5 739V764.5M217.5 737V764.5M219.5 736V764.5M222.5 735V764.5M225.5 734V764.5M227.5 734V764.5M230.5 734V764.5M233.5 735V764.5M235.5 735V764.5M238.5 735V764.5M241.5 737V764.5M243.5 738V764.5M246.5 740V764.5M249.5 743V764.5M251.5 744V764.5M254.5 746V764.5M257.5 748V764.5M259.5 750V764.5M262.5 752V764.5M265.5 755V764.5M267.5 756V764.5M270.5 759V764.5M273.5 761V764.5M275.5 763V764.5M291.5 763.5V764.5M294.5 764V764.5M297.5 763V764.5M299.5 762V764.5M302.5 761V764.5M305.5 759V764.5M307.5 758V764.5M310.5 755V764.5M313.5 753V764.5M315.5 751V764.5M318.5 749V764.5M321.5 747V764.5M323.5 746V764.5M326.5 745V764.5M329.5 744V764.5M331.5 743V764.5M334.5 742V764.5M337.5 741V764.5M339.5 738V764.5M342.5 734V764.5M345.5 731V764.5M347.5 728V764.5M350.5 725V764.5M353.5 718V764.5M355.5 712V764.5M358.5 706V764.5M361.5 705V764.5M363.5 704V764.5M366.5 702V764.5M369.5 701V764.5M371.5 700V764.5M374.5 702V764.5M377.5 705V764.5M379.5 706V764.5M382.5 708V764.5M385.5 712V764.5M387.5 717V764.5M390.5 723V764.5M393.5 730V764.5M395.5 734V764.5M398.5 741V764.5M401.5 742V764.5M403.5 742V764.5M406.5 743V764.5M409.5 744V764.5M411.5 745V764.5M414.5 744V764.5M417.5 739V764.5M419.5 736V764.5M422.5 732V764.5M425.5 727V764.5M427.5 726V764.5M430.5 724V764.5M433.5 722V764.5M435.5 721V764.5M438.5 719V764.5M441.5 717V764.5M443.5 718V764.5M446.5 721V764.5M449.5 724V764.5M451.5 725V764.5M454.5 728V764.5M457.5 729V764.5M459.5 730V764.5M462.5 730V764.5M465.5 731V764.5M467.5 731V764.5M470.5 732V764.5M473.5 731V764.5M475.5 729V764.5M478.5 725V764.5M481.5 722V764.5M483.5 719V764.5M486.5 714V764.5M489.5 709V764.5M491.5 707V764.5M494.5 710V764.5M497.5 713V764.5M499.5 714V764.5M502.5 717V764.5M505.5 725V764.5M507.5 730V764.5M510.5 738V764.5M513.5 746V764.5M515.5 752V764.5M518.5 761V764.5M593.5 763V764.5M595.5 761V764.5M598.5 758V764.5M601.5 755V764.5M603.5 753V764.5M606.5 750V764.5M609.5 749V764.5M611.5 750V764.5M614.5 750V764.5M617.5 750V764.5M619.5 751V764.5M622.5 751V764.5M625.5 753V764.5M627.5 754V764.5M630.5 757V764.5M633.5 759V764.5M635.5 761V764.5M638.5 763V764.5M646.5 763V764.5M649.5 762V764.5M651.5 761V764.5M654.5 761V764.5M657.5 760V764.5M659.5 760V764.5M662.5 758V764.5M665.5 755V764.5M667.5 753V764.5M670.5 750V764.5M673.5 748V764.5M675.5 749V764.5M678.5 750V764.5M681.5 751V764.5M683.5 752V764.5M686.5 753V764.5M689.5 757V764.5M691.5 760V764.5M694.5 763.5V764.5M793.5 764V764.5M795.5 760V764.5M798.5 758V764.5M801.5 760V764.5M803.5 761V764.5M806.5 760V764.5M809.5 759V764.5M811.5 758V764.5M814.5 757V764.5M817.5 755V764.5M819.5 754V764.5M822.5 753V764.5M825.5 750V764.5M827.5 747V764.5M830.5 746V764.5M833.5 746V764.5M835.5 746V764.5M838.5 746V764.5M841.5 746V764.5M843.5 747V764.5M846.5 748V764.5M849.5 749V764.5M851.5 749V764.5M854.5 750V764.5M857.5 752V764.5M859.5 753V764.5M862.5 754V764.5M865.5 756V764.5M867.5 757V764.5M870.5 758V764.5M873.5 759V764.5M875.5 759V764.5M878.5 758V764.5M881.5 757V764.5M883.5 756V764.5M886.5 755V764.5M889.5 753V764.5M891.5 751V764.5M894.5 748V764.5M897.5 745V764.5M899.5 743V764.5M902.5 744V764.5M905.5 746V764.5M907.5 748V764.5M910.5 750V764.5M913.5 751V764.5M915.5 752V764.5M918.5 754V764.5M921.5 755V764.5M923.5 755V764.5M926.5 755V764.5M929.5 755V764.5M931.5 755V764.5M934.5 755V764.5M937.5 755V764.5M939.5 755V764.5M942.5 755V764.5M945.5 755V764.5M947.5 755V764.5M950.5 755V764.5M953.5 755V764.5M955.5 755V764.5M958.5 756V764.5M961.5 756V764.5M963.5 756V764.5M966.5 758V764.5M969.5 761V764.5M971.5 763V764.5M1062.5 763.5V764.5M1065.5 757V764.5M1067.5 752V764.5M1070.5 743V764.5M1073.5 737V764.5M1075.5 735V764.5M1078.5 732V764.5M1081.5 730V764.5M1083.5 728V764.5M1086.5 726V764.5M1089.5 727V764.5M1091.5 728V764.5M1094.5 730V764.5M1097.5 731V764.5M1099.5 734V764.5M1102.5 739V764.5M1105.5 743V764.5M1107.5 746V764.5M1110.5 750V764.5M1113.5 754V764.5M1115.5 756V764.5M1118.5 759V764.5M1121.5 762V764.5M1273.5 763V764.5M1275.5 762V764.5M1278.5 760V764.5M1281.5 758V764.5M1283.5 759V764.5M1286.5 761V764.5M1289.5 763V764.5M1291.5 763.5V764.5M1305.5 763V764.5M1307.5 761V764.5M1310.5 758V764.5M1313.5 755V764.5M1315.5 754V764.5M1318.5 755V764.5M1321.5 756V764.5M1323.5 757V764.5M1326.5 758V764.5M1329.5 758V764.5M1331.5 758V764.5M1334.5 758V764.5M1337.5 758V764.5M1339.5 758V764.5M1342.5 758V764.5M1345.5 758V764.5M1347.5 759V764.5M1350.5 761V764.5M1353.5 763V764.5M1355.5 763.5V764.5M1361.5 763.5V764.5M1363.5 762V764.5M1366.5 760V764.5M1369.5 757V764.5M1371.5 757V764.5M1374.5 759V764.5M1377.5 760V764.5M1379.5 759V764.5M1382.5 758V764.5M1385.5 757V764.5M1387.5 756V764.5M1390.5 754V764.5M1393.5 753V764.5M1395.5 753V764.5M1398.5 754V764.5M1401.5 754V764.5M1403.5 755V764.5M1406.5 755V764.5M1409.5 753V764.5M1411.5 752V764.5M1414.5 751V764.5M1417.5 748V764.5M1419.5 743V764.5M1422.5 736V764.5M1425.5 731V764.5M1427.5 729V764.5M1430.5 725V764.5M1433.5 726V764.5M1435.5 728V764.5M1438.5 730V764.5M1441.5 732V764.5M1443.5 733V764.5M1446.5 734V764.5M1449.5 736V764.5M1451.5 737V764.5M1454.5 738V764.5M1457.5 739V764.5M1459.5 740V764.5M1462.5 742V764.5M1465.5 745V764.5M1467.5 747V764.5M1470.5 750V764.5M1473.5 752V764.5M1475.5 752V764.5M1478.5 751V764.5M1481.5 750V764.5M1483.5 749V764.5M1486.5 748V764.5M1489.5 747V764.5M1491.5 748V764.5M1494.5 750V764.5M1497.5 752V764.5M1499.5 753V764.5M1502.5 755V764.5M1505.5 756V764.5M1507.5 757V764.5M1510.5 758V764.5M1513.5 759V764.5M1515.5 759V764.5M1518.5 761V764.5M1521.5 764V764.5" stroke="#ff0000"/>
<path d="M102.5 752V753M105.5 753V754M107.5 753V754M110.5 754V755M113.5 755V756M139.5 747V748M142.5 748V748M145.5 748V749M147.5 748V750M150.5 749V750M153.5 750V751M155.5 750V751M158.5 751V752M161.5 752V753M163.5 752V753M166.5 753V754M169.5 754V755M171.5 755V756M174.5 756V757M177.5 756V757M179.5 757V758M182.5 758V759M230.5 733V734M233.5 734V735M238.5 734V735M241.5 735V737M243.5 737V738M246.5 738V740M249.5 740V743M251.5 742V744M254.5 744V746M257.5 746V748M259.5 748V750M262.5 750V752M265.5 752V755M267.5 754V756M270.5 756V759M273.5 758V761M275.5 761V763M374.5 700V702M377.5 702V705M379.5 704V706M382.5 706V708M385.5 708V712M387.5 712V717M390.5 716V723M393.5 722V730M395.5 729V734M398.5 733V741M401.5 741V742M403.5 741V742M406.5 742V743M409.5 743V744M411.5 744V745M443.5 717V718M446.5 718V721M449.5 721V724M451.5 723V725M454.5 725V728M457.5 728V729M459.5 729V730M462.5 729V730M465.5 730V731M467.5 730V731M470.5 731V732M494.5 707V710M497.5 710V713M499.5 712V714M502.5 714V717M505.5 717V725M507.5 724V730M510.5 730V738M513.5 738V746M515.5 745V752M518.5 753V761M614.5 749V750M617.5 749V750M622.5 750V751M625.5 751V753M627.5 753V754M630.5 754V757M633.5 756V759M635.5 759V761M638.5 760V763M675.5 748V749M678.5 749V750M681.5 750V751M683.5 751V752M686.5 752V753M689.5 752V757M691.5 757V760M801.5 757V760M803.5 760V761M841.5 745V746M843.5 746V747M846.5 747V748M849.5 748V749M851.5 748V749M854.5 749V750M857.5 750V752M859.5 752V753M862.5 753V754M865.5 754V756M867.5 756V757M870.5 757V758M873.5 758V759M875.5 758V759M902.5 743V744M905.5 744V746M907.5 746V748M910.5 747V750M913.5 750V751M915.5 751V752M918.5 752V754M921.5 754V755M953.5 754V755M958.5 755V756M961.5 755V756M966.5 756V758M969.5 757V761M971.5 761V763M1089.5 726V727M1091.5 727V728M1094.5 728V730M1097.5 729V731M1099.5 731V734M1102.5 734V739M1105.5 738V743M1107.5 743V746M1110.5 746V750M1113.5 750V754M1115.5 753V756M1118.5 755V759M1121.5 759V762M1283.5 758V759M1286.5 759V761M1289.5 761V763M1318.5 753V755M1321.5 755V756M1323.5 756V757M1326.5 757V758M1347.5 758V759M1350.5 759V761M1353.5 761V763M1371.5 756V757M1374.5 757V759M1377.5 759V760M1398.5 753V754M1401.5 753V754M1403.5 754V755M1433.5 725V726M1435.5 726V728M1438.5 727V730M1441.5 730V732M1443.5 732V733M1446.5 733V734M1449.5 734V736M1451.5 736V737M1454.5 736V738M1457.5 738V739M1459.5 739V740M1462.5 740V742M1465.5 742V745M1467.5 745V747M1470.5 747V750M1473.5 749V752M1491.5 747V748M1494.5 748V750M1497.5 750V752M1499.5 752V753M1502.5 753V755M1505.5 755V756M1507.5 756V757M1510.5 757V758M1513.5 758V759M1515.5 758V759M1518.5 759V761M1521.5 761V764" stroke="#ffffff"/>
<path d="M62.5 764.5V769M65.5 764.5V769M67.5 764.5V768M70.5 764.5V768M73.5 764.5V767M75.5 764.5V767M78.5 764.5V767M81.5 764.5V766M278.5 764.5V766M281.5 764.5V768M283.5 764.5V767M286.5 764.5V766M289.5 764.5V765M521.5 764.5V770M523.5 764.5V776M526.5 764.5V784M529.5 764.5V793M531.5 764.5V792M534.5 764.5V792M537.5 764.5V791M539.5 764.5V790M542.5 764.5V789M545.5 764.5V788M547.5 764.5V788M550.5 764.5V786M553.5 764.5V785M555.5 764.5V784M558.5 764.5V783M561.5 764.5V781M563.5 764.5V780M566.5 764.5V779M569.5 764.5V778M571.5 764.5V777M574.5 764.5V775M577.5 764.5V774M579.5 764.5V772M582.5 764.5V771M585.5 764.5V769M587.5 764.5V768M590.5 764.5V766M641.5 764.5V765M643.5 764.5V765M697.5 764.5V775M699.5 764.5V782M702.5 764.5V789M705.5 764.5V795M707.5 764.5V797M710.5 764.5V799M713.5 764.5V802M715.5 764.5V804M718.5 764.5V806M721.5 764.5V809M723.5 764.5V807M726.5 764.5V805M729.5 764.5V803M731.5 764.5V802M734.5 764.5V800M737.5 764.5V796M739.5 764.5V794M742.5 764.5V789M745.5 764.5V785M747.5 764.5V783M750.5 764.5V780M753.5 764.5V778M755.5 764.5V776M758.5 764.5V773M761.5 764.5V773M763.5 764.5V774M766.5 764.5V776M769.5 764.5V777M771.5 764.5V779M774.5 764.5V780M777.5 764.5V778M779.5 764.5V777M782.5 764.5V776M785.5 764.5V774M787.5 764.5V771M790.5 764.5V768M974.5 764.5V769M977.5 764.5V773M979.5 764.5V772M982.5 764.5V771M985.5 764.5V770M987.5 764.5V770M990.5 764.5V769M993.5 764.5V768M995.5 764.5V768M998.5 764.5V768M1001.5 764.5V767M1003.5 764.5V767M1006.5 764.5V766M1009.5 764.5V767M1011.5 764.5V768M1014.5 764.5V769M1017.5 764.5V770M1019.5 764.5V770M1022.5 764.5V769M1025.5 764.5V768M1027.5 764.5V768M1030.5 764.5V767M1033.5 764.5V768M1035.5 764.5V768M1038.5 764.5V770M1041.5 764.5V771M1043.5 764.5V771M1046.5 764.5V773M1049.5 764.5V771M1051.5 764.5V770M1054.5 764.5V769M1057.5 764.5V768M1059.5 764.5V767M1123.5 764.5V765M1126.5 764.5V772M1129.5 764.5V778M1131.5 764.5V780M1134.5 764.5V783M1137.5 764.5V785M1139.5 764.5V785M1142.5 764.5V784M1145.5 764.5V783M1147.5 764.5V783M1150.5 764.5V783M1153.5 764.5V783M1155.5 764.5V783M1158.5 764.5V783M1161.5 764.5V783M1163.5 764.5V783M1166.5 764.5V785M1169.5 764.5V787M1171.5 764.5V788M1174.5 764.5V790M1177.5 764.5V792M1179.5 764.5V792M1182.5 764.5V793M1185.5 764.5V794M1187.5 764.5V794M1190.5 764.5V793M1193.5 764.5V792M1195.5 764.5V792M1198.5 764.5V792M1201.5 764.5V791M1203.5 764.5V791M1206.5 764.5V791M1209.5 764.5V791M1211.5 764.5V791M1214.5 764.5V791M1217.5 764.5V791M1219.5 764.5V791M1222.5 764.5V792M1225.5 764.5V794M1227.5 764.5V795M1230.5 764.5V798M1233.5 764.5V799M1235.5 764.5V800M1238.5 764.5V801M1241.5 764.5V798M1243.5 764.5V796M1246.5 764.5V794M1249.5 764.5V790M1251.5 764.5V787M1254.5 764.5V783M1257.5 764.5V779M1259.5 764.5V777M1262.5 764.5V774M1265.5 764.5V771M1267.5 764.5V769M1270.5 764.5V766M1294.5 764.5V766M1297.5 764.5V768M1299.5 764.5V768M1302.5 764.5V765M1358.5 764.5V765M1523.5 764.5V767M1526.5 764.5V772M1529.5 764.5V773M1531.5 764.5V774M1534.5 764.5V775M1537.5 764.5V775M1539.5 764.5V774M1542.5 764.5V772" stroke="#6a00c8"/>
<path d="M65.5 769V770M67.5 768V769M70.5 768V769M73.5 767V768M75.5 767V768M78.5 767V768M81.5 766V767M283.5 767V768M286.5 766V767M289.5 765V766M531.5 792V793M534.5 792V793M537.5 791V792M539.5 790V791M542.5 789V790M545.5 788V789M547.5 788V789M550.5 786V788M553.5 785V786M555.5 784V785M558.5 783V784M561.5 781V783M563.5 780V781M566.5 779V781M569.5 778V779M571.5 777V778M574.5 775V777M577.5 774V776M579.5 772V774M582.5 771V773M585.5 769V771M587.5 768V769M590.5 766V768M723.5 807V809M726.5 805V808M729.5 803V806M731.5 802V803M734.5 800V802M737.5 796V800M739.5 794V797M742.5 789V794M745.5 785V790M747.5 783V786M750.5 780V783M753.5 778V781M755.5 776V778M758.5 773V776M761.5 773V774M777.5 778V780M779.5 777V778M782.5 776V777M785.5 774V776M787.5 771V774M790.5 768V772M979.5 772V773M982.5 771V772M985.5 770V771M987.5 770V771M990.5 769V770M993.5 768V769M995.5 768V769M998.5 768V769M1001.5 767V768M1003.5 767V768M1006.5 766V767M1019.5 770V771M1022.5 769V770M1025.5 768V769M1027.5 768V769M1030.5 767V768M1049.5 771V773M1051.5 770V772M1054.5 769V771M1057.5 768V769M1059.5 767V768M1139.5 785V786M1142.5 784V785M1145.5 783V784M1147.5 783V784M1190.5 793V794M1193.5 792V794M1195.5 792V793M1198.5 792V793M1201.5 791V792M1241.5 798V801M1243.5 796V798M1246.5 794V797M1249.5 790V794M1251.5 787V790M1254.5 783V787M1257.5 779V783M1259.5 777V779M1262.5 774V777M1265.5 771V774M1267.5 769V771M1270.5 766V769M1302.5 765V768M1539.5 774V775M1542.5 772V774" stroke="#70ffd0"/>
</g>
<g shape-rendering="crispEdges" fill="none">
<path d="M73.5 894V897M75.5 891V894M78.5 887V891M81.5 882V887M83.5 878V882M86.5 871V878M89.5 865V871M91.5 860V865M118.5 885V890M121.5 879V885M123.5 876V879M131.5 883V884M134.5 875V883M137.5 869V875M155.5 886V888M158.5 883V886M179.5 896V899M182.5 891V896M185.5 886V891M187.5 883V886M190.5 878V883M193.5 873V878M195.5 870V873M198.5 868V870M201.5 866V868M203.5 865V866M206.5 864V866M209.5 861V864M211.5 858V861M214.5 853V858M217.5 848V853M278.5 920V921M281.5 916V920M283.5 913V916M286.5 901V913M289.5 890V901M291.5 885V890M294.5 884V885M297.5 882V884M299.5 881V882M302.5 880V881M305.5 877V880M307.5 875V877M310.5 871V875M313.5 868V871M315.5 867V868M318.5 866V867M321.5 865V866M323.5 865V866M326.5 865V866M334.5 866V868M337.5 862V866M339.5 859V862M342.5 855V859M345.5 850V855M347.5 846V850M350.5 840V846M353.5 834V840M355.5 830V834M398.5 907V908M401.5 902V907M403.5 898V902M406.5 892V898M409.5 890V892M411.5 888V890M414.5 885V888M417.5 877V885M419.5 871V877M422.5 862V871M425.5 853V862M427.5 852V853M430.5 850V852M433.5 848V850M435.5 847V848M438.5 845V847M441.5 844V845M459.5 886V887M462.5 883V886M465.5 881V883M467.5 879V881M470.5 877V879M473.5 872V877M475.5 866V872M478.5 856V866M481.5 852V856M483.5 851V852M486.5 849V851M489.5 847V849M531.5 925V930M534.5 917V925M537.5 910V917M539.5 905V910M542.5 903V905M545.5 902V903M547.5 901V902M550.5 900V901M553.5 899V900M555.5 897V899M558.5 895V898M561.5 892V895M563.5 890V892M566.5 886V890M577.5 890V892M579.5 888V890M582.5 886V888M585.5 884V886M587.5 883V884M590.5 881V883M593.5 878V881M595.5 876V878M598.5 874V876M601.5 871V874M603.5 870V871M606.5 867V870M609.5 865V867M619.5 883V884M622.5 882V884M646.5 897V904M649.5 889V897M651.5 886V889M654.5 885V886M657.5 884V886M659.5 883V885M662.5 883V884M665.5 881V883M667.5 877V881M670.5 872V877M673.5 867V872M705.5 934V939M707.5 931V934M710.5 926V931M723.5 928V932M726.5 922V928M729.5 915V922M731.5 909V915M734.5 899V909M737.5 889V899M739.5 883V889M742.5 881V883M745.5 881V882M747.5 880V881M750.5 880V881M753.5 877V880M755.5 875V877M774.5 908V909M777.5 904V908M779.5 901V904M782.5 896V901M785.5 890V896M787.5 883V890M790.5 871V883M806.5 887V888M809.5 886V887M811.5 886V887M814.5 885V887M817.5 883V885M819.5 881V883M822.5 879V881M825.5 872V879M827.5 866V872M830.5 865V866M870.5 900V902M873.5 894V900M875.5 891V894M878.5 886V891M881.5 882V886M883.5 879V882M886.5 875V879M889.5 870V875M891.5 868V870M894.5 860V868M897.5 852V860M899.5 847V852M923.5 898V900M926.5 893V898M929.5 888V893M931.5 887V888M934.5 885V887M937.5 885V886M939.5 885V886M942.5 885V886M945.5 884V885M947.5 882V884M950.5 881V882M953.5 879V881M955.5 878V879M958.5 876V878M979.5 914V916M982.5 909V914M985.5 904V909M987.5 900V904M990.5 895V900M993.5 890V895M995.5 888V890M998.5 887V888M1001.5 886V888M1003.5 886V887M1006.5 886V887M1019.5 900V903M1022.5 896V900M1025.5 891V896M1027.5 888V891M1030.5 887V888M1046.5 909V913M1049.5 904V909M1051.5 900V904M1054.5 889V900M1057.5 882V889M1059.5 879V882M1062.5 874V879M1065.5 870V874M1067.5 860V870M1070.5 845V860M1137.5 924V930M1139.5 920V924M1142.5 914V920M1145.5 908V914M1147.5 905V908M1150.5 903V905M1153.5 901V903M1155.5 899V901M1185.5 918V919M1187.5 917V919M1190.5 916V918M1193.5 915V916M1195.5 914V915M1198.5 913V914M1201.5 912V913M1211.5 916V917M1214.5 914V916M1217.5 913V914M1241.5 938V942M1243.5 928V938M1246.5 905V928M1249.5 897V905M1251.5 891V897M1254.5 883V891M1257.5 878V883M1259.5 876V878M1262.5 874V876M1265.5 872V874M1267.5 870V872M1297.5 900V901M1299.5 897V901M1302.5 892V897M1305.5 883V892M1307.5 877V883M1310.5 873V877M1313.5 871V873M1329.5 892V893M1331.5 891V892M1334.5 888V891M1337.5 885V888M1339.5 884V885M1355.5 905V908M1358.5 902V905M1361.5 898V902M1363.5 890V898M1366.5 880V890M1369.5 873V880M1371.5 871V873M1379.5 885V887M1382.5 882V886M1385.5 880V882M1387.5 879V880M1390.5 878V880M1393.5 877V878M1406.5 887V889M1409.5 884V887M1411.5 882V884M1414.5 879V882M1417.5 876V879M1419.5 870V876M1422.5 860V870M1425.5 856V860M1427.5 855V856M1446.5 886V890M1449.5 884V886M1451.5 882V884M1473.5 900V902M1475.5 897V900M1478.5 894V897M1481.5 884V894M1483.5 876V884M1486.5 874V876M1489.5 872V874M1507.5 895V896M1510.5 894V896M1513.5 893V894M1537.5 908V910M1539.5 903V908M1542.5 896V903" stroke="#ff0000"/>
<path d="M65.5 893V894M67.5 894V896M70.5 895V897M94.5 860V863M97.5 863V865M99.5 865V867M102.5 867V870M105.5 870V875M107.5 875V878M110.5 878V883M113.5 883V888M115.5 888V890M126.5 876V880M129.5 880V884M139.5 869V872M142.5 872V876M145.5 876V880M147.5 880V883M150.5 883V887M153.5 887V888M161.5 883V885M163.5 885V886M166.5 886V889M169.5 889V892M171.5 892V894M174.5 894V896M177.5 896V899M219.5 848V849M222.5 848V851M225.5 851V854M227.5 854V856M230.5 856V858M233.5 858V861M235.5 861V863M238.5 863V867M241.5 867V872M243.5 872V876M246.5 876V881M249.5 881V886M251.5 886V889M254.5 889V894M257.5 894V899M259.5 899V902M262.5 902V907M265.5 907V911M267.5 911V913M270.5 913V916M273.5 916V919M275.5 919V921M329.5 866V867M331.5 867V868M358.5 830V833M361.5 833V839M363.5 839V843M366.5 843V849M369.5 849V851M371.5 851V853M374.5 853V855M377.5 855V862M379.5 862V867M382.5 867V874M385.5 874V881M387.5 881V886M390.5 886V894M393.5 894V903M395.5 903V908M443.5 844V845M446.5 845V847M449.5 847V849M451.5 849V866M454.5 866V886M457.5 886V887M491.5 847V853M494.5 853V861M497.5 861V870M499.5 870V876M502.5 876V885M505.5 885V894M507.5 894V900M510.5 900V907M513.5 907V911M515.5 911V913M518.5 913V917M521.5 917V920M523.5 920V922M526.5 922V926M529.5 926V930M569.5 886V888M571.5 888V890M574.5 890V892M611.5 865V867M614.5 867V875M617.5 875V884M625.5 883V885M627.5 885V887M630.5 887V890M633.5 890V894M635.5 894V896M638.5 896V899M641.5 899V902M643.5 902V904M675.5 867V869M678.5 869V875M681.5 875V880M683.5 880V884M686.5 884V890M689.5 890V900M691.5 900V907M694.5 907V917M697.5 917V925M699.5 925V931M702.5 931V939M713.5 926V927M715.5 927V928M718.5 928V930M721.5 930V932M758.5 875V879M761.5 879V886M763.5 886V891M766.5 891V898M769.5 898V904M771.5 904V909M793.5 871V874M795.5 874V877M798.5 877V882M801.5 882V886M803.5 886V888M833.5 866V868M835.5 868V869M838.5 869V871M841.5 871V875M843.5 875V878M846.5 878V883M849.5 883V886M851.5 886V887M854.5 886V888M857.5 888V889M859.5 889V890M862.5 890V895M865.5 895V899M867.5 899V902M902.5 847V856M905.5 856V869M907.5 869V877M910.5 877V887M913.5 887V898M915.5 898V899M918.5 898V900M921.5 899V901M961.5 876V884M963.5 884V891M966.5 891V897M969.5 897V903M971.5 903V906M974.5 906V911M977.5 911V916M1009.5 887V892M1011.5 892V896M1014.5 896V901M1017.5 901V903M1033.5 888V890M1035.5 890V894M1038.5 894V901M1041.5 901V908M1043.5 908V913M1073.5 845V846M1075.5 846V850M1078.5 850V855M1081.5 855V861M1083.5 861V865M1086.5 865V868M1089.5 868V871M1091.5 871V873M1094.5 873V876M1097.5 876V880M1099.5 880V889M1102.5 889V898M1105.5 898V900M1107.5 900V901M1110.5 901V903M1113.5 903V904M1115.5 904V906M1118.5 905V907M1121.5 907V908M1123.5 908V911M1126.5 911V917M1129.5 917V922M1131.5 922V926M1134.5 926V930M1158.5 899V901M1161.5 900V902M1163.5 902V903M1166.5 903V904M1169.5 904V909M1171.5 909V913M1174.5 913V916M1177.5 916V917M1179.5 917V919M1182.5 918V919M1203.5 912V913M1206.5 912V914M1209.5 914V917M1219.5 913V914M1222.5 914V916M1225.5 916V919M1227.5 919V924M1230.5 924V931M1233.5 931V935M1235.5 935V938M1238.5 938V942M1270.5 870V872M1273.5 872V876M1275.5 876V878M1278.5 878V880M1281.5 878V880M1283.5 878V881M1286.5 881V886M1289.5 886V891M1291.5 891V895M1294.5 895V901M1315.5 871V872M1318.5 871V877M1321.5 877V883M1323.5 883V887M1326.5 887V893M1342.5 885V886M1345.5 885V887M1347.5 886V889M1350.5 889V899M1353.5 899V908M1374.5 871V879M1377.5 879V887M1395.5 877V879M1398.5 878V882M1401.5 882V886M1403.5 886V889M1430.5 855V858M1433.5 858V864M1435.5 864V868M1438.5 868V876M1441.5 876V884M1443.5 884V890M1454.5 882V883M1457.5 882V884M1459.5 884V885M1462.5 885V889M1465.5 889V894M1467.5 894V897M1470.5 897V902M1491.5 872V874M1494.5 874V883M1497.5 883V892M1499.5 892V895M1502.5 895V896M1505.5 896V897M1515.5 893V894M1518.5 893V899M1521.5 899V905M1523.5 905V909M1526.5 909V910M1529.5 909V910M1531.5 909V910M1534.5 909V911" stroke="#ffff00"/>
</g>
<g shape-rendering="crispEdges">
<line x1="0" y1="18.5" x2="1657" y2="18.5" stroke="#c4140a" />
<line x1="0" y1="426.5" x2="1657" y2="426.5" stroke="#c4140a" />
<line x1="0" y1="553.5" x2="1657" y2="553.5" stroke="#c4140a" />
<line x1="0" y1="682.5" x2="1657" y2="682.5" stroke="#c4140a" />
<line x1="0" y1="811.5" x2="1657" y2="811.5" stroke="#c4140a" />
<line x1="0" y1="945.5" x2="1898" y2="945.5" stroke="#c4140a" />
<line x1="61.5" y1="18" x2="61.5" y2="961" stroke="#c4140a" />
<line x1="1657.5" y1="0" x2="1657.5" y2="961" stroke="#c4140a" />
<rect x="1" y="812" width="60" height="133" fill="none" stroke="#c4140a" stroke-width="2"/>
<line x1="1657" y1="24.5" x2="1898" y2="24.5" stroke="#c4140a" />
<line x1="1657" y1="55.5" x2="1898" y2="55.5" stroke="#c4140a" />
<line x1="1657" y1="86.5" x2="1898" y2="86.5" stroke="#c4140a" />
<line x1="1657" y1="168.5" x2="1898" y2="168.5" stroke="#c4140a" />
</g>
<text x="2" y="14" fill="#ffffff" class="cj" textLength="47.5" lengthAdjust="spacingAndGlyphs" >美元加元</text>
<text x="50.5" y="14" fill="#ffffff" class="sf" textLength="46.5" lengthAdjust="spacingAndGlyphs" >(USDCAD)</text>
<text x="98" y="14" fill="#ffffff" class="sf" textLength="6" lengthAdjust="spacingAndGlyphs" >&lt;</text>
<text x="105" y="14" fill="#ffffff" class="cj" textLength="22" lengthAdjust="spacingAndGlyphs" >周线</text>
<text x="128" y="14" fill="#ffffff" class="sf" textLength="6" lengthAdjust="spacingAndGlyphs" >&gt;</text>
<text x="1493" y="13" fill="#80c0ff" class="cj" textLength="48" lengthAdjust="spacingAndGlyphs" >商品叠加</text>
<text x="1561" y="13" fill="#80c0ff" class="cj" textLength="24" lengthAdjust="spacingAndGlyphs" >周期</text>
<g shape-rendering="crispEdges" stroke="#80c0ff" fill="none">
<line x1="1493" y1="14.5" x2="1541" y2="14.5"/><line x1="1561" y1="14.5" x2="1585" y2="14.5"/>
<rect x="1606.5" y="1.5" width="15" height="13"/>
<rect x="1623.5" y="1.5" width="15" height="13"/>
<rect x="1640.5" y="1.5" width="15" height="13"/>
</g><g stroke="#80c0ff" fill="none" stroke-width="1">
<path d="M1608.500 7.500L1612.500 3.500V5.500H1619.500V9.500H1612.500V11.500Z"/>
<path d="M1636.500 7.500L1632.500 3.500V5.500H1625.500V9.500H1632.500V11.500Z"/>
</g><g shape-rendering="crispEdges" stroke="#80c0ff" fill="none">
<path d="M1641 9.500H1650M1650.500 2V14M1652 4.500h2M1652 6.500h2M1652 8.500h2M1652 10.500h2"/>
<rect x="1880.5" y="1.5" width="15" height="12"/><rect x="1883.5" y="4.5" width="9" height="6"/>
</g>
<text x="63.5" y="33" fill="#c0c0c0" >K</text>
<text x="78" y="33" fill="#c0c0c0" class="cj" textLength="48.5" lengthAdjust="spacingAndGlyphs" >胡家刀法</text>
<text x="132.5" y="33" fill="#ff0000" textLength="57.5" lengthAdjust="spacingAndGlyphs" >A:1.33150</text>
<text x="198" y="33" fill="#ffffff" textLength="81" lengthAdjust="spacingAndGlyphs" >MA13:1.33289</text>
<text x="283" y="33" fill="#ffff00" textLength="79.5" lengthAdjust="spacingAndGlyphs" >MA21:1.34011</text>
<text x="368.5" y="33" fill="#ff00ff" textLength="80" lengthAdjust="spacingAndGlyphs" >MA55:1.34115</text>
<text x="453.5" y="33" fill="#00e000" textLength="87" lengthAdjust="spacingAndGlyphs" >MA144:1.29335</text>
<text x="545" y="33" fill="#7070ff" textLength="88" lengthAdjust="spacingAndGlyphs" >MA165:1.29828</text>
<text x="637" y="33" fill="#ff8000" textLength="87.5" lengthAdjust="spacingAndGlyphs" >MA233:1.31042</text>
<text x="729" y="33" fill="#2090e0" textLength="87.5" lengthAdjust="spacingAndGlyphs" >MA377:1.30738</text>
<text x="821" y="33" fill="#e0204c" textLength="88" lengthAdjust="spacingAndGlyphs" >MA610:1.23706</text>
<text x="64.5" y="54" fill="#b4b4b4" style="font-size:11.5px" textLength="76.5" lengthAdjust="spacingAndGlyphs" >0.00% 1.46867</text>
<text x="64.5" y="93" fill="#b4b4b4" style="font-size:11.5px" textLength="82.5" lengthAdjust="spacingAndGlyphs" >23.60% 1.41594</text>
<text x="64.5" y="118" fill="#b4b4b4" style="font-size:11.5px" textLength="82.5" lengthAdjust="spacingAndGlyphs" >38.20% 1.38332</text>
<text x="64.5" y="138" fill="#b4b4b4" style="font-size:11.5px" textLength="82.5" lengthAdjust="spacingAndGlyphs" >50.00% 1.35695</text>
<text x="64.5" y="157" fill="#b4b4b4" style="font-size:11.5px" textLength="82.5" lengthAdjust="spacingAndGlyphs" >61.80% 1.33058</text>
<text x="64.5" y="189" fill="#b4b4b4" style="font-size:11.5px" textLength="82.5" lengthAdjust="spacingAndGlyphs" >80.90% 1.28790</text>
<text x="64.5" y="222" fill="#b4b4b4" style="font-size:11.5px" textLength="88.5" lengthAdjust="spacingAndGlyphs" >100.00% 1.24523</text>
<text x="64.5" y="286" fill="#b4b4b4" style="font-size:11.5px" textLength="88.5" lengthAdjust="spacingAndGlyphs" >138.20% 1.15987</text>
<text x="64.5" y="325" fill="#b4b4b4" style="font-size:11.5px" textLength="88.5" lengthAdjust="spacingAndGlyphs" >161.80% 1.10714</text>
<text x="64.5" y="390" fill="#b4b4b4" style="font-size:11.5px" textLength="88.5" lengthAdjust="spacingAndGlyphs" >200.00% 1.02178</text>
<text x="57" y="99.5" fill="#c8c8c8" class="b" style="font-size:12px" text-anchor="end" >1.4</text>
<text x="57" y="174.5" fill="#c8c8c8" class="b" style="font-size:12px" text-anchor="end" >1.3</text>
<text x="57" y="250.5" fill="#c8c8c8" class="b" style="font-size:12px" text-anchor="end" >1.2</text>
<text x="57" y="325.5" fill="#c8c8c8" class="b" style="font-size:12px" text-anchor="end" >1.1</text>
<text x="57" y="400.5" fill="#c8c8c8" class="b" style="font-size:12px" text-anchor="end" >1.0</text>
<text x="57" y="469.5" fill="#c0c8d8" class="sf b" style="font-size:13.5px" text-anchor="end" >0.8</text>
<text x="57" y="512.5" fill="#c0c8d8" class="sf b" style="font-size:13.5px" text-anchor="end" >0.4</text>
<text x="57" y="594.5" fill="#c0c8d8" class="sf b" style="font-size:13.5px" text-anchor="end" >80</text>
<text x="57" y="641.5" fill="#c0c8d8" class="sf b" style="font-size:13.5px" text-anchor="end" >40</text>
<text x="57" y="768.5" fill="#c0c8d8" class="sf b" style="font-size:13.5px" text-anchor="end" >0</text>
<text x="57" y="838.5" fill="#c0c8d8" class="sf b" style="font-size:13.5px" text-anchor="end" >80</text>
<text x="57" y="896.5" fill="#c0c8d8" class="sf b" style="font-size:13.5px" text-anchor="end" >0</text>
<rect x="480" y="43" width="10" height="1" fill="#000"/>
<text x="434" y="48" fill="#ffffff" class="b" style="font-size:12.5px" textLength="44" lengthAdjust="spacingAndGlyphs" >1.46099</text>
<path d="M481 43.500H488M485.500 40.500L488.500 43.500L485.500 46.500" stroke="#e0e0e0" fill="none"/>
<line x1="430" y1="43.500" x2="479" y2="43.500" stroke="#d8d8d8" shape-rendering="crispEdges"/>
<text x="82.5" y="415" fill="#ffffff" class="b" style="font-size:12.5px" textLength="45" lengthAdjust="spacingAndGlyphs" >0.98110</text>
<path d="M81 410.500H73M76 408l-3 2.500 3 2.500" stroke="#e0e0e0" fill="none"/>
<circle cx="66.7" cy="437.5" r="2.6" fill="#c8c8c8"/>
<circle cx="73.75" cy="437.5" r="2.6" fill="#c8c8c8"/>
<circle cx="80.8" cy="437.5" r="2.6" fill="#c8c8c8"/>
<circle cx="87.85" cy="437.5" r="2.6" fill="#c8c8c8"/>
<circle cx="94.9" cy="437.5" r="2.6" fill="#c8c8c8"/>
<text x="98" y="442" fill="#c0c0c0" class="cj" textLength="23.5" lengthAdjust="spacingAndGlyphs" >亿万</text>
<text x="127.5" y="442" fill="#ff0000" class="cj" textLength="90" lengthAdjust="spacingAndGlyphs" >低位买进:0.0000</text>
<text x="221.5" y="442" fill="#00e0e0" class="cj" textLength="91" lengthAdjust="spacingAndGlyphs" >高位抛出:0.0000</text>
<text x="63.5" y="569" fill="#c0c0c0" class="cj" textLength="66.5" lengthAdjust="spacingAndGlyphs" >界文KDJ改进</text>
<text x="136" y="569" fill="#ff60ff" class="cj" textLength="68.7" lengthAdjust="spacingAndGlyphs" >短K:31.1012</text>
<text x="208.4" y="569" fill="#30e0e0" class="cj" textLength="70.6" lengthAdjust="spacingAndGlyphs" >短D:24.7439</text>
<text x="283.5" y="569" fill="#ff0000" class="cj" textLength="68.5" lengthAdjust="spacingAndGlyphs" >中K:39.1353</text>
<text x="356.4" y="569" fill="#2ca02c" class="cj" textLength="69.1" lengthAdjust="spacingAndGlyphs" >中D:53.7973</text>
<text x="430" y="569" fill="#ffffff" class="cj" textLength="73.4" lengthAdjust="spacingAndGlyphs" >底线:10.0000</text>
<text x="508" y="569" fill="#ffff00" class="cj" textLength="73.6" lengthAdjust="spacingAndGlyphs" >顶线:90.0000</text>
<text x="64.5" y="696.5" fill="#c0c0c0" style="font-size:11px" textLength="9" lengthAdjust="spacingAndGlyphs" >▲</text>
<text x="75" y="696.5" fill="#c0c0c0" style="font-size:9px" textLength="7.5" lengthAdjust="spacingAndGlyphs" >★</text>
<text x="83" y="697" fill="#c0c0c0" class="cj" textLength="35.2" lengthAdjust="spacingAndGlyphs" >大趋势</text>
<text x="123" y="697" fill="#ffffff" class="cj" textLength="95.5" lengthAdjust="spacingAndGlyphs" >获利回吐:-0.0000</text>
<text x="222.5" y="697" fill="#70ffd0" class="cj" textLength="95.1" lengthAdjust="spacingAndGlyphs" >空头回补:-0.0045</text>
<text x="321.3" y="697" fill="#6a00c8" class="cj" textLength="95.1" lengthAdjust="spacingAndGlyphs" >坚绝做空:-0.0040</text>
<text x="420.8" y="697" fill="#ff0000" class="cj" textLength="95" lengthAdjust="spacingAndGlyphs" >买入持货:-0.0000</text>
<text x="63.5" y="825.5" fill="#c0c0c0" style="font-size:9px" textLength="7.5" lengthAdjust="spacingAndGlyphs" >★</text>
<text x="71" y="826" fill="#c0c0c0" class="cj" textLength="47" lengthAdjust="spacingAndGlyphs" >奥运冠军</text>
<text x="123" y="826" fill="#ffffff" class="cj" textLength="72" lengthAdjust="spacingAndGlyphs" >奥运:-2.0918</text>
<text x="198" y="826" fill="#ffff00" class="cj" textLength="78.5" lengthAdjust="spacingAndGlyphs" >冠军:-10.2057</text>
<text x="32.5" y="957" fill="#e0e0e0" class="cj" textLength="24" lengthAdjust="spacingAndGlyphs" >周线</text>
<text x="62" y="956.5" fill="#c8c8c8" style="font-size:11px" textLength="36.3" lengthAdjust="spacingAndGlyphs" >201212</text>
<text x="118" y="956.5" fill="#c8c8c8" style="font-size:11px" textLength="36.3" lengthAdjust="spacingAndGlyphs" >201307</text>
<text x="189" y="956.5" fill="#c8c8c8" style="font-size:11px" textLength="12.1" lengthAdjust="spacingAndGlyphs" >12</text>
<text x="246" y="956.5" fill="#c8c8c8" style="font-size:11px" textLength="36.3" lengthAdjust="spacingAndGlyphs" >201406</text>
<text x="316" y="956.5" fill="#c8c8c8" style="font-size:11px" textLength="12.1" lengthAdjust="spacingAndGlyphs" >11</text>
<text x="371" y="956.5" fill="#c8c8c8" style="font-size:11px" textLength="36.3" lengthAdjust="spacingAndGlyphs" >201505</text>
<text x="443" y="956.5" fill="#c8c8c8" style="font-size:11px" textLength="12.1" lengthAdjust="spacingAndGlyphs" >10</text>
<text x="499" y="956.5" fill="#c8c8c8" style="font-size:11px" textLength="36.3" lengthAdjust="spacingAndGlyphs" >201604</text>
<text x="570" y="956.5" fill="#c8c8c8" style="font-size:11px" textLength="12.1" lengthAdjust="spacingAndGlyphs" >09</text>
<text x="627" y="956.5" fill="#c8c8c8" style="font-size:11px" textLength="36.3" lengthAdjust="spacingAndGlyphs" >201703</text>
<text x="698" y="956.5" fill="#c8c8c8" style="font-size:11px" textLength="12.1" lengthAdjust="spacingAndGlyphs" >08</text>
<text x="755" y="956.5" fill="#c8c8c8" style="font-size:11px" textLength="36.3" lengthAdjust="spacingAndGlyphs" >201802</text>
<text x="826" y="956.5" fill="#c8c8c8" style="font-size:11px" textLength="12.1" lengthAdjust="spacingAndGlyphs" >07</text>
<text x="883" y="956.5" fill="#c8c8c8" style="font-size:11px" textLength="36.3" lengthAdjust="spacingAndGlyphs" >201901</text>
<text x="955" y="956.5" fill="#c8c8c8" style="font-size:11px" textLength="12.1" lengthAdjust="spacingAndGlyphs" >06</text>
<text x="1023" y="956.5" fill="#c8c8c8" style="font-size:11px" textLength="12.1" lengthAdjust="spacingAndGlyphs" >12</text>
<clipPath id="cl"><rect x="1070" y="945" width="43" height="16"/></clipPath>
<text x="1080" y="956.5" fill="#c8c8c8" style="font-size:11px" textLength="36" lengthAdjust="spacingAndGlyphs" clip-path="url(#cl)">202006</text>
<text x="1207" y="956.5" fill="#c8c8c8" style="font-size:11px" textLength="36.3" lengthAdjust="spacingAndGlyphs" >202105</text>
<text x="1275" y="956.5" fill="#c8c8c8" style="font-size:11px" textLength="12.1" lengthAdjust="spacingAndGlyphs" >10</text>
<text x="1332" y="956.5" fill="#c8c8c8" style="font-size:11px" textLength="36.3" lengthAdjust="spacingAndGlyphs" >202204</text>
<text x="1403" y="956.5" fill="#c8c8c8" style="font-size:11px" textLength="12.1" lengthAdjust="spacingAndGlyphs" >09</text>
<text x="1459" y="956.5" fill="#c8c8c8" style="font-size:11px" textLength="36.3" lengthAdjust="spacingAndGlyphs" >202303</text>
<text x="1533" y="956.5" fill="#c8c8c8" style="font-size:11px" textLength="12.1" lengthAdjust="spacingAndGlyphs" >08</text>
<rect x="1113" y="945" width="90" height="16" fill="#0a64ff"/>
<rect x="1113.5" y="945.5" width="89" height="16" fill="none" stroke="#ffffff" stroke-width="1"/>
<text x="1116" y="959" fill="#ffffff" class="cj" style="font-size:13.5px" textLength="85" lengthAdjust="spacingAndGlyphs" >2020-07-10(五)</text>
<text x="1693.8" y="18.5" fill="#ffff00" class="sf b" style="font-size:19px" textLength="77" lengthAdjust="spacingAndGlyphs" >美元加元</text>
<text x="1775.5" y="18.5" fill="#ffff00" class="sf b" style="font-size:19px" textLength="74" lengthAdjust="spacingAndGlyphs" >(USDCAD)</text>
<text x="1663" y="45.5" fill="#e8e8e8" class="cj" style="font-size:14px" textLength="27.5" lengthAdjust="spacingAndGlyphs" >卖出</text>
<text x="1697.5" y="48.5" fill="#ff3c3c" class="b" style="font-size:21.5px" textLength="76" lengthAdjust="spacingAndGlyphs" >1.34190</text>
<text x="1779" y="48.5" fill="#ffff00" class="b" style="font-size:21.5px" >0</text>
<text x="1663" y="76" fill="#e8e8e8" class="cj" style="font-size:14px" textLength="27.5" lengthAdjust="spacingAndGlyphs" >买入</text>
<text x="1697.5" y="79" fill="#ff3c3c" class="b" style="font-size:21.5px" textLength="76" lengthAdjust="spacingAndGlyphs" >1.34190</text>
<text x="1779" y="79" fill="#ffff00" class="b" style="font-size:21.5px" >0</text>
<text x="1663" y="103" fill="#e8e8e8" class="cj" style="font-size:14px" textLength="27.5" lengthAdjust="spacingAndGlyphs" >最新</text>
<text x="1720" y="103" fill="#ff4040" stroke="#ff4040" class="m" style="font-size:13.5px" textLength="50.6" lengthAdjust="spacingAndGlyphs" >1.34190</text>
<text x="1784" y="103" fill="#e8e8e8" class="cj" style="font-size:14px" textLength="28" lengthAdjust="spacingAndGlyphs" >涨跌</text>
<text x="1842" y="103" fill="#ff4040" stroke="#ff4040" class="m" style="font-size:13.5px" textLength="50.6" lengthAdjust="spacingAndGlyphs" >0.00040</text>
<text x="1663" y="122.5" fill="#e8e8e8" class="cj" style="font-size:14px" textLength="27.5" lengthAdjust="spacingAndGlyphs" >幅度</text>
<text x="1734.4" y="122.5" fill="#ff4040" stroke="#ff4040" class="m" style="font-size:13.5px" textLength="36.2" lengthAdjust="spacingAndGlyphs" >0.03%</text>
<text x="1784" y="122.5" fill="#e8e8e8" class="cj" style="font-size:14px" textLength="28" lengthAdjust="spacingAndGlyphs" >昨收</text>
<text x="1842" y="122.5" fill="#ffffff" stroke="#ffffff" class="m" style="font-size:13.5px" textLength="50.6" lengthAdjust="spacingAndGlyphs" >1.34150</text>
<text x="1663" y="142.5" fill="#e8e8e8" class="cj" style="font-size:14px" textLength="27.5" lengthAdjust="spacingAndGlyphs" >开盘</text>
<text x="1720" y="142.5" fill="#00ff00" stroke="#00ff00" class="m" style="font-size:13.5px" textLength="50.6" lengthAdjust="spacingAndGlyphs" >1.34131</text>
<text x="1784" y="142.5" fill="#e8e8e8" class="cj" style="font-size:14px" textLength="28" lengthAdjust="spacingAndGlyphs" >最高</text>
<text x="1842" y="142.5" fill="#ff4040" stroke="#ff4040" class="m" style="font-size:13.5px" textLength="50.6" lengthAdjust="spacingAndGlyphs" >1.34310</text>
<text x="1663" y="162.4" fill="#e8e8e8" class="cj" style="font-size:14px" textLength="27.5" lengthAdjust="spacingAndGlyphs" >最低</text>
<text x="1720" y="162.4" fill="#00ff00" stroke="#00ff00" class="m" style="font-size:13.5px" textLength="50.6" lengthAdjust="spacingAndGlyphs" >1.34070</text>
<text x="1663" y="184.5" fill="#808080" class="cj" style="font-size:14px" textLength="27.5" lengthAdjust="spacingAndGlyphs" >北京</text>
<text x="1772" y="184.5" fill="#808080" class="cj" style="font-size:14px" textLength="28" lengthAdjust="spacingAndGlyphs" >价格</text>
<text x="1865" y="184.5" fill="#808080" class="cj" style="font-size:14px" textLength="28" lengthAdjust="spacingAndGlyphs" >现手</text>
<text x="1663" y="206" fill="#ffffff" class="b" style="font-size:13.5px" textLength="35.5" lengthAdjust="spacingAndGlyphs" >11:42</text>
<text x="1749.3" y="206" fill="#ff4040" stroke="#ff4040" class="m" style="font-size:13.5px" textLength="50.7" lengthAdjust="spacingAndGlyphs" >1.34184</text>
<text x="1893.5" y="206" fill="#ffffff" stroke="#ffffff" class="m" style="font-size:13.5px" text-anchor="end" >0</text>
<text x="1680" y="227" fill="#d0d0d0" style="font-size:11.5px" textLength="15.7" lengthAdjust="spacingAndGlyphs" >:31</text>
<text x="1749.3" y="228" fill="#ff4040" stroke="#ff4040" class="m" style="font-size:13.5px" textLength="50.7" lengthAdjust="spacingAndGlyphs" >1.34182</text>
<text x="1893.5" y="228" fill="#ffffff" stroke="#ffffff" class="m" style="font-size:13.5px" text-anchor="end" >0</text>
<text x="1680" y="249" fill="#d0d0d0" style="font-size:11.5px" textLength="15.7" lengthAdjust="spacingAndGlyphs" >:33</text>
<text x="1749.3" y="250" fill="#ff4040" stroke="#ff4040" class="m" style="font-size:13.5px" textLength="50.7" lengthAdjust="spacingAndGlyphs" >1.34183</text>
<text x="1893.5" y="250" fill="#ffffff" stroke="#ffffff" class="m" style="font-size:13.5px" text-anchor="end" >0</text>
<text x="1680" y="271" fill="#d0d0d0" style="font-size:11.5px" textLength="15.7" lengthAdjust="spacingAndGlyphs" >:35</text>
<text x="1749.3" y="272" fill="#ff4040" stroke="#ff4040" class="m" style="font-size:13.5px" textLength="50.7" lengthAdjust="spacingAndGlyphs" >1.34184</text>
<text x="1893.5" y="272" fill="#ffffff" stroke="#ffffff" class="m" style="font-size:13.5px" text-anchor="end" >0</text>
<text x="1680" y="293" fill="#d0d0d0" style="font-size:11.5px" textLength="15.7" lengthAdjust="spacingAndGlyphs" >:37</text>
<text x="1749.3" y="294" fill="#ff4040" stroke="#ff4040" class="m" style="font-size:13.5px" textLength="50.7" lengthAdjust="spacingAndGlyphs" >1.34183</text>
<text x="1893.5" y="294" fill="#ffffff" stroke="#ffffff" class="m" style="font-size:13.5px" text-anchor="end" >0</text>
<text x="1680" y="315" fill="#d0d0d0" style="font-size:11.5px" textLength="15.7" lengthAdjust="spacingAndGlyphs" >:37</text>
<text x="1749.3" y="316" fill="#ff4040" stroke="#ff4040" class="m" style="font-size:13.5px" textLength="50.7" lengthAdjust="spacingAndGlyphs" >1.34184</text>
<text x="1893.5" y="316" fill="#ffffff" stroke="#ffffff" class="m" style="font-size:13.5px" text-anchor="end" >0</text>
<text x="1680" y="337" fill="#d0d0d0" style="font-size:11.5px" textLength="15.7" lengthAdjust="spacingAndGlyphs" >:37</text>
<text x="1749.3" y="338" fill="#ff4040" stroke="#ff4040" class="m" style="font-size:13.5px" textLength="50.7" lengthAdjust="spacingAndGlyphs" >1.34185</text>
<text x="1893.5" y="338" fill="#ffffff" stroke="#ffffff" class="m" style="font-size:13.5px" text-anchor="end" >0</text>
<text x="1680" y="359" fill="#d0d0d0" style="font-size:11.5px" textLength="15.7" lengthAdjust="spacingAndGlyphs" >:38</text>
<text x="1749.3" y="360" fill="#ff4040" stroke="#ff4040" class="m" style="font-size:13.5px" textLength="50.7" lengthAdjust="spacingAndGlyphs" >1.34184</text>
<text x="1893.5" y="360" fill="#ffffff" stroke="#ffffff" class="m" style="font-size:13.5px" text-anchor="end" >0</text>
<text x="1680" y="381" fill="#d0d0d0" style="font-size:11.5px" textLength="15.7" lengthAdjust="spacingAndGlyphs" >:40</text>
<text x="1749.3" y="382" fill="#ff4040" stroke="#ff4040" class="m" style="font-size:13.5px" textLength="50.7" lengthAdjust="spacingAndGlyphs" >1.34185</text>
<text x="1893.5" y="382" fill="#ffffff" stroke="#ffffff" class="m" style="font-size:13.5px" text-anchor="end" >0</text>
<text x="1680" y="403" fill="#d0d0d0" style="font-size:11.5px" textLength="15.7" lengthAdjust="spacingAndGlyphs" >:43</text>
<text x="1749.3" y="404" fill="#ff4040" stroke="#ff4040" class="m" style="font-size:13.5px" textLength="50.7" lengthAdjust="spacingAndGlyphs" >1.34187</text>
<text x="1893.5" y="404" fill="#ffffff" stroke="#ffffff" class="m" style="font-size:13.5px" text-anchor="end" >0</text>
<text x="1680" y="425" fill="#d0d0d0" style="font-size:11.5px" textLength="15.7" lengthAdjust="spacingAndGlyphs" >:44</text>
<text x="1749.3" y="426" fill="#ff4040" stroke="#ff4040" class="m" style="font-size:13.5px" textLength="50.7" lengthAdjust="spacingAndGlyphs" >1.34184</text>
<text x="1893.5" y="426" fill="#ffffff" stroke="#ffffff" class="m" style="font-size:13.5px" text-anchor="end" >0</text>
<text x="1680" y="447" fill="#d0d0d0" style="font-size:11.5px" textLength="15.7" lengthAdjust="spacingAndGlyphs" >:45</text>
<text x="1749.3" y="448" fill="#ff4040" stroke="#ff4040" class="m" style="font-size:13.5px" textLength="50.7" lengthAdjust="spacingAndGlyphs" >1.34183</text>
<text x="1893.5" y="448" fill="#ffffff" stroke="#ffffff" class="m" style="font-size:13.5px" text-anchor="end" >0</text>
<text x="1680" y="469" fill="#d0d0d0" style="font-size:11.5px" textLength="15.7" lengthAdjust="spacingAndGlyphs" >:46</text>
<text x="1749.3" y="470" fill="#ff4040" stroke="#ff4040" class="m" style="font-size:13.5px" textLength="50.7" lengthAdjust="spacingAndGlyphs" >1.34185</text>
<text x="1893.5" y="470" fill="#ffffff" stroke="#ffffff" class="m" style="font-size:13.5px" text-anchor="end" >0</text>
<text x="1680" y="491" fill="#d0d0d0" style="font-size:11.5px" textLength="15.7" lengthAdjust="spacingAndGlyphs" >:47</text>
<text x="1749.3" y="492" fill="#ff4040" stroke="#ff4040" class="m" style="font-size:13.5px" textLength="50.7" lengthAdjust="spacingAndGlyphs" >1.34182</text>
<text x="1893.5" y="492" fill="#ffffff" stroke="#ffffff" class="m" style="font-size:13.5px" text-anchor="end" >0</text>
<text x="1680" y="513" fill="#d0d0d0" style="font-size:11.5px" textLength="15.7" lengthAdjust="spacingAndGlyphs" >:48</text>
<text x="1749.3" y="514" fill="#ff4040" stroke="#ff4040" class="m" style="font-size:13.5px" textLength="50.7" lengthAdjust="spacingAndGlyphs" >1.34185</text>
<text x="1893.5" y="514" fill="#ffffff" stroke="#ffffff" class="m" style="font-size:13.5px" text-anchor="end" >0</text>
<text x="1680" y="535" fill="#d0d0d0" style="font-size:11.5px" textLength="15.7" lengthAdjust="spacingAndGlyphs" >:50</text>
<text x="1749.3" y="536" fill="#ff4040" stroke="#ff4040" class="m" style="font-size:13.5px" textLength="50.7" lengthAdjust="spacingAndGlyphs" >1.34183</text>
<text x="1893.5" y="536" fill="#ffffff" stroke="#ffffff" class="m" style="font-size:13.5px" text-anchor="end" >0</text>
<text x="1680" y="557" fill="#d0d0d0" style="font-size:11.5px" textLength="15.7" lengthAdjust="spacingAndGlyphs" >:50</text>
<text x="1749.3" y="558" fill="#ff4040" stroke="#ff4040" class="m" style="font-size:13.5px" textLength="50.7" lengthAdjust="spacingAndGlyphs" >1.34185</text>
<text x="1893.5" y="558" fill="#ffffff" stroke="#ffffff" class="m" style="font-size:13.5px" text-anchor="end" >0</text>
<text x="1680" y="579" fill="#d0d0d0" style="font-size:11.5px" textLength="15.7" lengthAdjust="spacingAndGlyphs" >:51</text>
<text x="1749.3" y="580" fill="#ff4040" stroke="#ff4040" class="m" style="font-size:13.5px" textLength="50.7" lengthAdjust="spacingAndGlyphs" >1.34187</text>
<text x="1893.5" y="580" fill="#ffffff" stroke="#ffffff" class="m" style="font-size:13.5px" text-anchor="end" >0</text>
<text x="1680" y="601" fill="#d0d0d0" style="font-size:11.5px" textLength="15.7" lengthAdjust="spacingAndGlyphs" >:52</text>
<text x="1749.3" y="602" fill="#ff4040" stroke="#ff4040" class="m" style="font-size:13.5px" textLength="50.7" lengthAdjust="spacingAndGlyphs" >1.34185</text>
<text x="1893.5" y="602" fill="#ffffff" stroke="#ffffff" class="m" style="font-size:13.5px" text-anchor="end" >0</text>
<text x="1680" y="623" fill="#d0d0d0" style="font-size:11.5px" textLength="15.7" lengthAdjust="spacingAndGlyphs" >:54</text>
<text x="1749.3" y="624" fill="#ff4040" stroke="#ff4040" class="m" style="font-size:13.5px" textLength="50.7" lengthAdjust="spacingAndGlyphs" >1.34186</text>
<text x="1893.5" y="624" fill="#ffffff" stroke="#ffffff" class="m" style="font-size:13.5px" text-anchor="end" >0</text>
<text x="1680" y="645" fill="#d0d0d0" style="font-size:11.5px" textLength="15.7" lengthAdjust="spacingAndGlyphs" >:54</text>
<text x="1749.3" y="646" fill="#ff4040" stroke="#ff4040" class="m" style="font-size:13.5px" textLength="50.7" lengthAdjust="spacingAndGlyphs" >1.34189</text>
<text x="1893.5" y="646" fill="#ffffff" stroke="#ffffff" class="m" style="font-size:13.5px" text-anchor="end" >0</text>
<text x="1680" y="667" fill="#d0d0d0" style="font-size:11.5px" textLength="15.7" lengthAdjust="spacingAndGlyphs" >:55</text>
<text x="1749.3" y="668" fill="#ff4040" stroke="#ff4040" class="m" style="font-size:13.5px" textLength="50.7" lengthAdjust="spacingAndGlyphs" >1.34188</text>
<text x="1893.5" y="668" fill="#ffffff" stroke="#ffffff" class="m" style="font-size:13.5px" text-anchor="end" >0</text>
<text x="1680" y="689" fill="#d0d0d0" style="font-size:11.5px" textLength="15.7" lengthAdjust="spacingAndGlyphs" >:56</text>
<text x="1749.3" y="690" fill="#ff4040" stroke="#ff4040" class="m" style="font-size:13.5px" textLength="50.7" lengthAdjust="spacingAndGlyphs" >1.34189</text>
<text x="1893.5" y="690" fill="#ffffff" stroke="#ffffff" class="m" style="font-size:13.5px" text-anchor="end" >0</text>
<text x="1680" y="711" fill="#d0d0d0" style="font-size:11.5px" textLength="15.7" lengthAdjust="spacingAndGlyphs" >:57</text>
<text x="1749.3" y="712" fill="#ff4040" stroke="#ff4040" class="m" style="font-size:13.5px" textLength="50.7" lengthAdjust="spacingAndGlyphs" >1.34188</text>
<text x="1893.5" y="712" fill="#ffffff" stroke="#ffffff" class="m" style="font-size:13.5px" text-anchor="end" >0</text>
<text x="1680" y="733" fill="#d0d0d0" style="font-size:11.5px" textLength="15.7" lengthAdjust="spacingAndGlyphs" >:59</text>
<text x="1749.3" y="734" fill="#ff4040" stroke="#ff4040" class="m" style="font-size:13.5px" textLength="50.7" lengthAdjust="spacingAndGlyphs" >1.34187</text>
<text x="1893.5" y="734" fill="#ffffff" stroke="#ffffff" class="m" style="font-size:13.5px" text-anchor="end" >0</text>
<text x="1663" y="756" fill="#ffffff" class="b" style="font-size:13.5px" textLength="35.5" lengthAdjust="spacingAndGlyphs" >11:43</text>
<text x="1749.3" y="756" fill="#ff4040" stroke="#ff4040" class="m" style="font-size:13.5px" textLength="50.7" lengthAdjust="spacingAndGlyphs" >1.34188</text>
<text x="1893.5" y="756" fill="#ffffff" stroke="#ffffff" class="m" style="font-size:13.5px" text-anchor="end" >0</text>
<text x="1680" y="777" fill="#d0d0d0" style="font-size:11.5px" textLength="15.7" lengthAdjust="spacingAndGlyphs" >:00</text>
<text x="1749.3" y="778" fill="#ff4040" stroke="#ff4040" class="m" style="font-size:13.5px" textLength="50.7" lengthAdjust="spacingAndGlyphs" >1.34187</text>
<text x="1893.5" y="778" fill="#ffffff" stroke="#ffffff" class="m" style="font-size:13.5px" text-anchor="end" >0</text>
<text x="1680" y="799" fill="#d0d0d0" style="font-size:11.5px" textLength="15.7" lengthAdjust="spacingAndGlyphs" >:01</text>
<text x="1749.3" y="800" fill="#ff4040" stroke="#ff4040" class="m" style="font-size:13.5px" textLength="50.7" lengthAdjust="spacingAndGlyphs" >1.34189</text>
<text x="1893.5" y="800" fill="#ffffff" stroke="#ffffff" class="m" style="font-size:13.5px" text-anchor="end" >0</text>
<text x="1680" y="821" fill="#d0d0d0" style="font-size:11.5px" textLength="15.7" lengthAdjust="spacingAndGlyphs" >:02</text>
<text x="1749.3" y="822" fill="#ff4040" stroke="#ff4040" class="m" style="font-size:13.5px" textLength="50.7" lengthAdjust="spacingAndGlyphs" >1.34188</text>
<text x="1893.5" y="822" fill="#ffffff" stroke="#ffffff" class="m" style="font-size:13.5px" text-anchor="end" >0</text>
<text x="1680" y="843" fill="#d0d0d0" style="font-size:11.5px" textLength="15.7" lengthAdjust="spacingAndGlyphs" >:03</text>
<text x="1749.3" y="844" fill="#ff4040" stroke="#ff4040" class="m" style="font-size:13.5px" textLength="50.7" lengthAdjust="spacingAndGlyphs" >1.34189</text>
<text x="1893.5" y="844" fill="#ffffff" stroke="#ffffff" class="m" style="font-size:13.5px" text-anchor="end" >0</text>
<text x="1680" y="865" fill="#d0d0d0" style="font-size:11.5px" textLength="15.7" lengthAdjust="spacingAndGlyphs" >:06</text>
<text x="1749.3" y="866" fill="#ff4040" stroke="#ff4040" class="m" style="font-size:13.5px" textLength="50.7" lengthAdjust="spacingAndGlyphs" >1.34187</text>
<text x="1893.5" y="866" fill="#ffffff" stroke="#ffffff" class="m" style="font-size:13.5px" text-anchor="end" >0</text>
<text x="1680" y="887" fill="#d0d0d0" style="font-size:11.5px" textLength="15.7" lengthAdjust="spacingAndGlyphs" >:07</text>
<text x="1749.3" y="888" fill="#ff4040" stroke="#ff4040" class="m" style="font-size:13.5px" textLength="50.7" lengthAdjust="spacingAndGlyphs" >1.34189</text>
<text x="1893.5" y="888" fill="#ffffff" stroke="#ffffff" class="m" style="font-size:13.5px" text-anchor="end" >0</text>
<text x="1680" y="909" fill="#d0d0d0" style="font-size:11.5px" textLength="15.7" lengthAdjust="spacingAndGlyphs" >:10</text>
<text x="1749.3" y="910" fill="#ff4040" stroke="#ff4040" class="m" style="font-size:13.5px" textLength="50.7" lengthAdjust="spacingAndGlyphs" >1.34188</text>
<text x="1893.5" y="910" fill="#ffffff" stroke="#ffffff" class="m" style="font-size:13.5px" text-anchor="end" >0</text>
<text x="1680" y="931" fill="#d0d0d0" style="font-size:11.5px" textLength="15.7" lengthAdjust="spacingAndGlyphs" >:11</text>
<text x="1749.3" y="932" fill="#ff4040" stroke="#ff4040" class="m" style="font-size:13.5px" textLength="50.7" lengthAdjust="spacingAndGlyphs" >1.34190</text>
<text x="1893.5" y="932" fill="#ffffff" stroke="#ffffff" class="m" style="font-size:13.5px" text-anchor="end" >0</text>
<path d="M1657.500 945.500V957Q1657.500 960.500 1661 960.500H1691Q1694.500 960.500 1694.500 957V948Q1694.500 945.500 1697 945.500" fill="#000" stroke="#c4140a"/>
<rect x="1658" y="944" width="36" height="3" fill="#000"/>
<text x="1676" y="958" fill="#ffffff" class="cj" style="font-size:13px" text-anchor="middle" >笔</text>
</svg></body></html>
